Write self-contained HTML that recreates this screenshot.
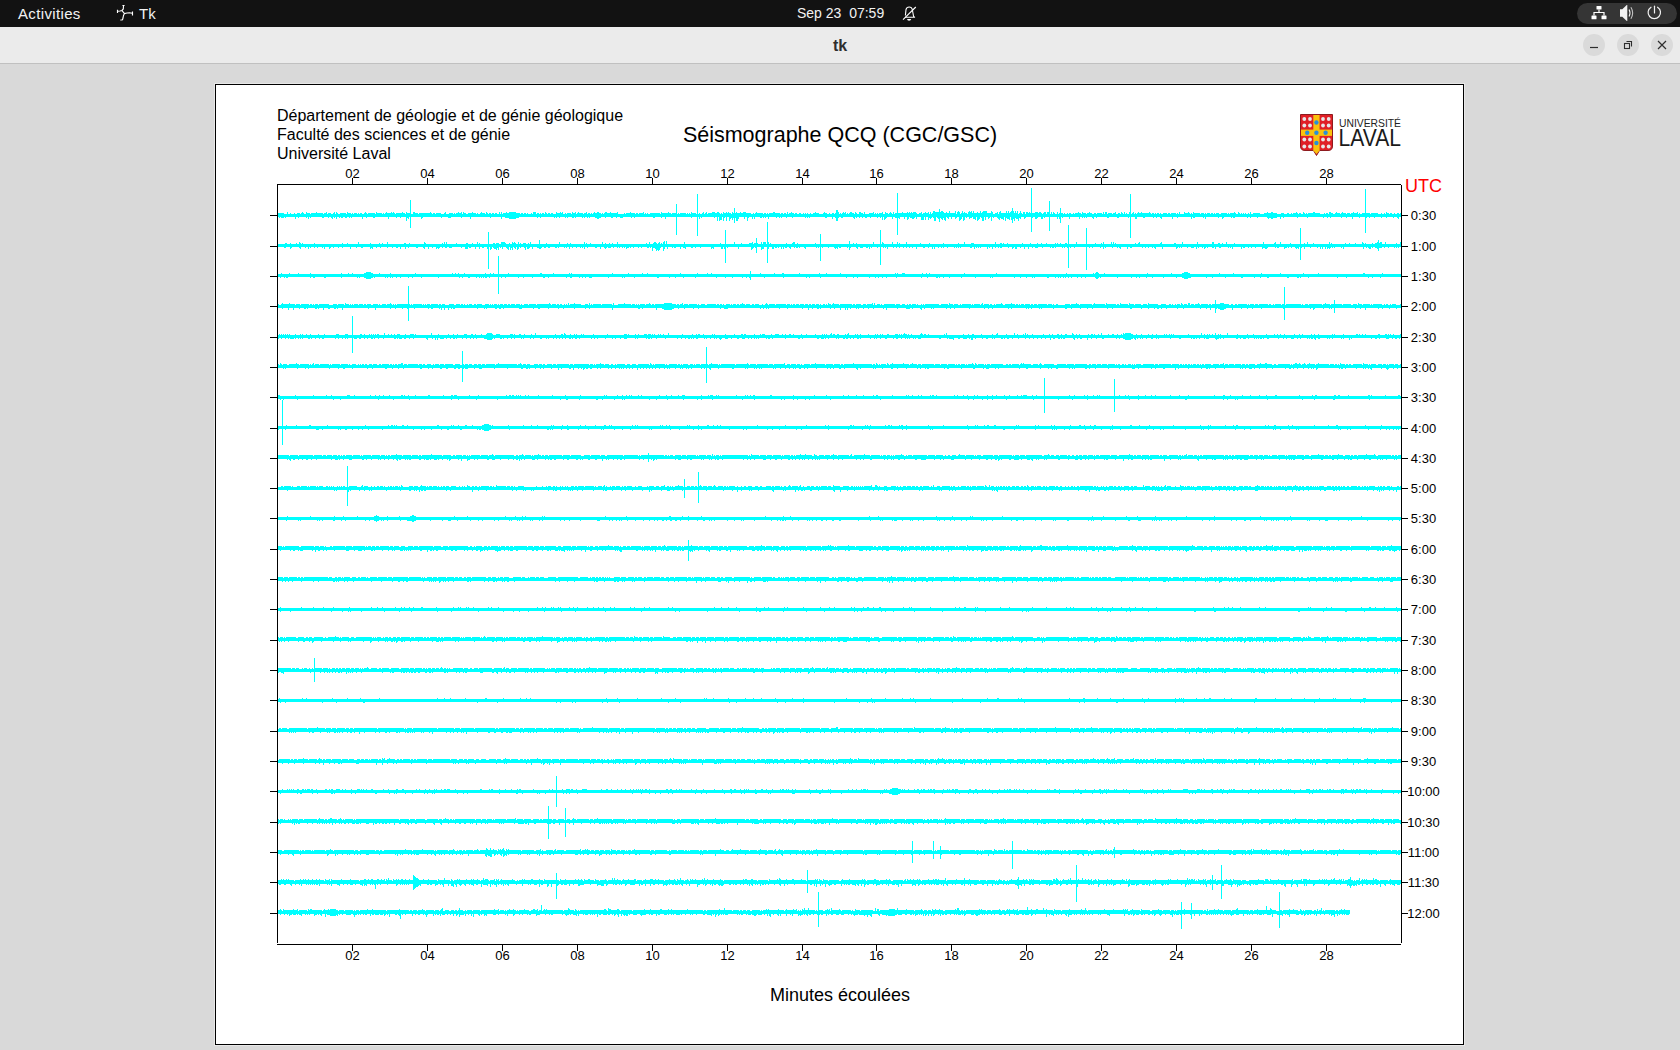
<!DOCTYPE html>
<html><head><meta charset="utf-8">
<style>
html,body{margin:0;padding:0;width:1680px;height:1050px;overflow:hidden;background:#d9d9d9;font-family:"Liberation Sans",sans-serif;}
#top{position:absolute;left:0;top:0;width:1680px;height:27px;background:#121212;color:#f2f2f2;}
#top .t{position:absolute;top:0;height:27px;line-height:27px;white-space:nowrap;}
#title{position:absolute;left:0;top:27px;width:1680px;height:36px;background:#ebebeb;border-bottom:1px solid #c0c0c0;}
#title .name{position:absolute;left:0;width:1680px;top:0;height:36px;line-height:37px;text-align:center;font-weight:bold;font-size:16px;color:#2e2e2e;}
.wb{position:absolute;top:7px;width:22px;height:22px;border-radius:50%;background:#dadada;}
#panel{position:absolute;left:214px;top:83px;width:1249px;height:961px;border:1px solid #e8e8e8;}
#canvas{position:absolute;left:0;top:0;width:1247px;height:959px;border:1px solid #000;background:#fff;}
svg text{font-family:"Liberation Sans",sans-serif;}
</style></head><body>
<div id="top">
  <div class="t" style="left:18px;font-size:15px;letter-spacing:0.35px;">Activities</div>
  <svg style="position:absolute;left:116px;top:4px" width="18" height="18" viewBox="0 0 18 18">
    <g fill="none" stroke="#fff" stroke-width="1.15" stroke-linecap="square" stroke-linejoin="miter">
      <path d="M7.5 1.5 L7.3 5 L6 6.5 L4 7 L1.5 7.3 M1.5 6.3 V8.3 M6 6.5 L8.5 9.5 L11 9 L13.5 8.8 L16.3 9.3 M16.5 8 V11 M8.5 9.5 L7.5 11.5 L7 14 L6.5 15.7 L5 16 M7 1.5 H8"/>
    </g>
  </svg>
  <div class="t" style="left:139px;font-size:15px;">Tk</div>
  <div class="t" style="left:797px;font-size:14px;">Sep 23&nbsp; 07:59</div>
  <svg style="position:absolute;left:901px;top:5px" width="17" height="17" viewBox="0 0 17 17">
    <g fill="none" stroke="#fff" stroke-width="1.1" stroke-linejoin="round">
      <path d="M4.4 10.5 L5 4.5 Q5.6 2 8.2 2 Q10.8 2 11.3 4.5 L12.6 11.5 L13.6 12.3 L4 12.3"/>
      <path d="M2 14.7 L14.8 2"/>
    </g>
    <path d="M6 14 H10.2 Q10 15.8 8.1 15.8 Q6.2 15.8 6 14 Z" fill="#fff"/>
  </svg>
  <div style="position:absolute;left:1577px;top:3px;width:100px;height:21px;border-radius:11px;background:#353535;"></div>
  <svg style="position:absolute;left:1590.7px;top:5px" width="17" height="16" viewBox="0 0 17 16">
    <g fill="#fff">
      <rect x="5.5" y="1" width="5" height="3.5" rx="0.6"/>
      <rect x="0.5" y="10.5" width="5" height="3.8" rx="0.6"/>
      <rect x="10.5" y="10.5" width="5" height="3.8" rx="0.6"/>
    </g>
    <g fill="none" stroke="#fff" stroke-width="1.2">
      <path d="M8 4.5 V7.5 M3 10.5 V7.5 H13 V10.5"/>
    </g>
  </svg>
  <svg style="position:absolute;left:1620px;top:5px" width="16" height="16" viewBox="0 0 16 16">
    <path d="M0 4.2 H2.3 L7.3 -0.5 V16.5 L2.3 11.8 H0 Z" fill="#f2f2f2"/>
    <g fill="none" stroke="#f2f2f2" stroke-width="1.1">
      <path d="M9.1 4.6 Q10.9 8 9.1 11.4"/>
      <path d="M10.9 2.3 Q14.4 8 10.9 13.7" stroke-opacity="0.75"/>
    </g>
  </svg>
  <svg style="position:absolute;left:1647px;top:5px" width="16" height="16" viewBox="0 0 16 16">
    <g fill="none" stroke="#f2f2f2" stroke-width="1.2" stroke-linecap="round">
      <path d="M4 2.2 A6.2 6.2 0 1 0 10.6 2.2"/>
      <path d="M7.5 1.2 V8"/>
    </g>
  </svg>
</div>
<div id="title">
  <div class="name">tk</div>
  <div class="wb" style="left:1583px;"></div>
  <div class="wb" style="left:1617px;"></div>
  <div class="wb" style="left:1651px;"></div>
  <svg style="position:absolute;left:1583px;top:7px" width="22" height="22"><path d="M7 13.5 H15" stroke="#2e2e2e" stroke-width="1.2"/></svg>
  <svg style="position:absolute;left:1617px;top:7px" width="22" height="22"><g fill="none" stroke="#2e2e2e" stroke-width="1.1"><rect x="7.5" y="9.5" width="5" height="5"/><path d="M9.5 7.5 H14.5 V12.5"/></g></svg>
  <svg style="position:absolute;left:1651px;top:7px" width="22" height="22"><path d="M7 7 L15 15 M15 7 L7 15" stroke="#2e2e2e" stroke-width="1.2"/></svg>
</div>
<div id="panel"><div id="canvas"></div></div>
<svg style="position:absolute;left:0;top:0" width="1680" height="1050" viewBox="0 0 1680 1050">
  <g font-size="16" fill="#000">
    <text x="277" y="121">Département de géologie et de génie géologique</text>
    <text x="277" y="140">Faculté des sciences et de génie</text>
    <text x="277" y="158.5">Université Laval</text>
  </g>
  <text x="840" y="141.5" font-size="21.5" text-anchor="middle" fill="#000">Séismographe QCQ (CGC/GSC)</text>
  <text x="1405" y="192" font-size="18" fill="#ff0000">UTC</text>
  <text x="840" y="1000.5" font-size="18" text-anchor="middle" fill="#000">Minutes écoulées</text>
  <g fill="#00ffff">
<path d="M277 214H1401V217H277zM277 212h1v2h-1zM278 213h6v1h-6zM287 212h1v2h-1zM290 213h1v1h-1zM294 213h1v1h-1zM297 213h3v1h-3zM301 213h1v1h-1zM302 212h1v2h-1zM303 213h1v1h-1zM306 212h1v2h-1zM307 213h3v1h-3zM311 213h5v1h-5zM316 212h1v2h-1zM317 213h6v1h-6zM324 213h2v1h-2zM326 212h1v2h-1zM328 213h3v1h-3zM333 213h1v1h-1zM334 212h1v2h-1zM336 212h1v2h-1zM337 213h1v1h-1zM340 213h6v1h-6zM347 212h1v2h-1zM348 213h3v1h-3zM352 213h1v1h-1zM354 213h3v1h-3zM358 213h1v1h-1zM360 213h2v1h-2zM364 213h1v1h-1zM365 212h1v2h-1zM366 213h1v1h-1zM368 213h7v1h-7zM376 212h1v2h-1zM377 213h5v1h-5zM383 213h1v1h-1zM385 213h1v1h-1zM386 212h1v2h-1zM387 213h4v1h-4zM391 212h1v2h-1zM392 213h1v1h-1zM393 212h1v2h-1zM394 213h1v1h-1zM396 213h6v1h-6zM402 212h1v2h-1zM403 213h2v1h-2zM406 212h1v2h-1zM407 213h4v1h-4zM413 212h2v2h-2zM415 213h3v1h-3zM419 213h11v1h-11zM430 212h1v2h-1zM431 213h1v1h-1zM433 213h2v1h-2zM436 213h5v1h-5zM444 213h1v1h-1zM445 212h1v2h-1zM449 213h4v1h-4zM454 213h1v1h-1zM456 213h2v1h-2zM458 212h1v2h-1zM459 213h2v1h-2zM461 212h1v2h-1zM463 212h1v2h-1zM464 213h2v1h-2zM468 213h4v1h-4zM472 212h1v2h-1zM473 213h3v1h-3zM477 213h1v1h-1zM480 213h1v1h-1zM481 212h1v2h-1zM482 213h3v1h-3zM486 212h1v2h-1zM487 213h1v1h-1zM489 213h2v1h-2zM492 213h2v1h-2zM495 213h2v1h-2zM499 212h1v2h-1zM501 212h1v2h-1zM503 213h3v1h-3zM506 212h1v2h-1zM507 213h2v1h-2zM509 212h7v2h-7zM516 213h4v1h-4zM521 213h2v1h-2zM524 213h2v1h-2zM527 213h1v1h-1zM531 213h1v1h-1zM533 212h3v2h-3zM537 213h2v1h-2zM540 213h1v1h-1zM542 213h2v1h-2zM545 212h1v2h-1zM546 213h1v1h-1zM548 213h2v1h-2zM551 213h2v1h-2zM556 212h1v2h-1zM557 213h3v1h-3zM560 212h1v2h-1zM561 213h1v1h-1zM562 212h1v2h-1zM565 213h1v1h-1zM567 213h4v1h-4zM572 212h1v2h-1zM573 213h2v1h-2zM575 212h1v2h-1zM577 213h1v1h-1zM578 212h1v2h-1zM579 213h4v1h-4zM584 213h2v1h-2zM586 212h1v2h-1zM588 213h2v1h-2zM591 213h1v1h-1zM593 213h1v1h-1zM594 212h1v2h-1zM595 213h2v1h-2zM597 212h2v2h-2zM599 213h2v1h-2zM602 213h1v1h-1zM604 213h1v1h-1zM605 212h2v2h-2zM607 213h3v1h-3zM610 212h1v2h-1zM611 213h6v1h-6zM617 212h1v2h-1zM624 213h1v1h-1zM626 213h4v1h-4zM630 212h1v2h-1zM631 213h4v1h-4zM636 213h2v1h-2zM639 213h4v1h-4zM643 212h1v2h-1zM645 213h1v1h-1zM647 213h1v1h-1zM650 213h10v1h-10zM661 212h1v2h-1zM662 213h6v1h-6zM668 212h1v2h-1zM669 213h2v1h-2zM672 213h4v1h-4zM678 213h1v1h-1zM680 213h6v1h-6zM687 213h1v1h-1zM689 213h1v1h-1zM691 212h1v2h-1zM692 213h4v1h-4zM699 213h1v1h-1zM702 213h1v1h-1zM703 212h1v2h-1zM705 213h1v1h-1zM706 212h1v2h-1zM708 213h4v1h-4zM712 212h3v2h-3zM715 213h2v1h-2zM717 212h2v2h-2zM719 213h1v1h-1zM721 213h1v1h-1zM723 212h1v2h-1zM724 213h2v1h-2zM726 212h1v2h-1zM727 213h1v1h-1zM728 212h1v2h-1zM729 213h2v1h-2zM732 212h1v2h-1zM733 213h1v1h-1zM735 213h1v1h-1zM736 212h1v2h-1zM737 213h3v1h-3zM740 212h1v2h-1zM741 213h2v1h-2zM743 212h3v2h-3zM746 213h5v1h-5zM753 213h1v1h-1zM755 213h1v1h-1zM756 212h1v2h-1zM757 213h6v1h-6zM764 213h2v1h-2zM767 213h1v1h-1zM769 213h4v1h-4zM773 212h2v2h-2zM775 213h5v1h-5zM781 213h2v1h-2zM784 213h2v1h-2zM787 212h1v2h-1zM789 213h2v1h-2zM791 212h1v2h-1zM792 213h2v1h-2zM795 213h2v1h-2zM799 213h2v1h-2zM803 213h1v1h-1zM805 213h1v1h-1zM807 213h1v1h-1zM810 213h1v1h-1zM813 213h2v1h-2zM815 212h1v2h-1zM816 213h3v1h-3zM823 213h1v1h-1zM824 212h1v2h-1zM825 213h2v1h-2zM829 213h1v1h-1zM832 213h2v1h-2zM835 213h1v1h-1zM836 210h2v4h-2zM838 212h1v2h-1zM840 213h1v1h-1zM842 213h1v1h-1zM843 212h1v2h-1zM844 213h1v1h-1zM845 212h1v2h-1zM847 213h1v1h-1zM849 213h1v1h-1zM850 212h2v2h-2zM852 213h2v1h-2zM855 212h1v2h-1zM856 213h1v1h-1zM859 212h2v2h-2zM861 213h2v1h-2zM864 212h1v2h-1zM869 213h4v1h-4zM873 212h1v2h-1zM875 213h1v1h-1zM877 213h1v1h-1zM879 213h3v1h-3zM882 212h1v2h-1zM885 212h1v2h-1zM886 213h2v1h-2zM889 213h1v1h-1zM890 212h1v2h-1zM891 213h1v1h-1zM893 212h1v2h-1zM895 213h2v1h-2zM898 213h4v1h-4zM902 212h1v2h-1zM903 213h4v1h-4zM907 212h1v2h-1zM908 213h1v1h-1zM909 212h1v2h-1zM910 213h1v1h-1zM911 212h1v2h-1zM912 213h1v1h-1zM913 212h3v2h-3zM916 213h1v1h-1zM919 213h2v1h-2zM921 212h1v2h-1zM923 213h2v1h-2zM925 212h1v2h-1zM926 213h2v1h-2zM928 212h1v2h-1zM930 212h1v2h-1zM932 213h1v1h-1zM933 211h2v3h-2zM935 212h4v2h-4zM939 213h1v1h-1zM940 212h1v2h-1zM941 211h2v3h-2zM943 212h1v2h-1zM944 213h2v1h-2zM946 212h1v2h-1zM947 213h2v1h-2zM949 211h1v3h-1zM950 213h5v1h-5zM955 211h1v3h-1zM957 212h1v2h-1zM958 211h1v3h-1zM959 212h1v2h-1zM961 213h1v1h-1zM962 211h1v3h-1zM963 213h1v1h-1zM964 212h1v2h-1zM965 213h2v1h-2zM968 212h1v2h-1zM969 211h1v3h-1zM970 212h1v2h-1zM971 211h1v3h-1zM972 213h1v1h-1zM973 211h1v3h-1zM974 213h3v1h-3zM977 212h1v2h-1zM978 213h2v1h-2zM980 211h1v3h-1zM981 213h1v1h-1zM982 212h1v2h-1zM983 211h4v3h-4zM987 213h4v1h-4zM991 211h1v3h-1zM992 212h1v2h-1zM995 213h2v1h-2zM997 212h1v2h-1zM999 212h1v2h-1zM1000 211h1v3h-1zM1001 213h5v1h-5zM1006 211h1v3h-1zM1007 213h1v1h-1zM1008 211h1v3h-1zM1009 213h1v1h-1zM1010 212h1v2h-1zM1011 211h1v3h-1zM1012 213h1v1h-1zM1013 211h1v3h-1zM1014 213h1v1h-1zM1015 211h1v3h-1zM1016 213h1v1h-1zM1017 211h1v3h-1zM1019 213h1v1h-1zM1020 211h1v3h-1zM1021 213h1v1h-1zM1023 212h2v2h-2zM1026 212h2v2h-2zM1028 213h1v1h-1zM1029 212h1v2h-1zM1030 213h1v1h-1zM1032 213h3v1h-3zM1035 212h3v2h-3zM1038 213h1v1h-1zM1039 212h2v2h-2zM1041 213h1v1h-1zM1043 213h1v1h-1zM1044 212h2v2h-2zM1047 212h2v2h-2zM1049 213h1v1h-1zM1051 212h1v2h-1zM1053 212h1v2h-1zM1054 213h1v1h-1zM1057 212h1v2h-1zM1059 213h1v1h-1zM1060 212h1v2h-1zM1061 213h2v1h-2zM1064 213h1v1h-1zM1067 213h1v1h-1zM1069 213h2v1h-2zM1073 213h1v1h-1zM1075 213h3v1h-3zM1078 212h1v2h-1zM1079 213h2v1h-2zM1082 212h1v2h-1zM1083 213h3v1h-3zM1087 213h2v1h-2zM1089 212h1v2h-1zM1090 213h2v1h-2zM1094 213h2v1h-2zM1097 213h5v1h-5zM1103 212h1v2h-1zM1105 212h2v2h-2zM1108 213h4v1h-4zM1113 213h2v1h-2zM1115 212h1v2h-1zM1118 213h2v1h-2zM1121 212h1v2h-1zM1122 213h1v1h-1zM1124 212h1v2h-1zM1126 213h1v1h-1zM1129 212h1v2h-1zM1132 213h1v1h-1zM1133 212h1v2h-1zM1135 213h1v1h-1zM1137 213h1v1h-1zM1138 212h1v2h-1zM1139 213h2v1h-2zM1141 212h1v2h-1zM1142 213h7v1h-7zM1149 212h1v2h-1zM1150 213h1v1h-1zM1152 213h2v1h-2zM1155 213h1v1h-1zM1157 213h2v1h-2zM1160 213h1v1h-1zM1163 213h4v1h-4zM1168 213h2v1h-2zM1171 213h5v1h-5zM1177 213h1v1h-1zM1179 212h1v2h-1zM1184 212h1v2h-1zM1185 213h3v1h-3zM1188 212h1v2h-1zM1189 213h1v1h-1zM1191 213h1v1h-1zM1193 212h1v2h-1zM1194 213h6v1h-6zM1201 213h3v1h-3zM1205 213h1v1h-1zM1207 213h3v1h-3zM1211 213h2v1h-2zM1214 213h1v1h-1zM1216 213h3v1h-3zM1221 213h6v1h-6zM1228 213h1v1h-1zM1230 213h4v1h-4zM1234 212h1v2h-1zM1235 213h1v1h-1zM1238 212h1v2h-1zM1239 213h1v1h-1zM1241 213h1v1h-1zM1243 213h1v1h-1zM1245 213h1v1h-1zM1248 213h1v1h-1zM1250 212h1v2h-1zM1253 213h7v1h-7zM1264 213h3v1h-3zM1267 212h1v2h-1zM1268 213h3v1h-3zM1271 212h2v2h-2zM1273 213h4v1h-4zM1281 213h3v1h-3zM1287 213h2v1h-2zM1291 213h1v1h-1zM1293 213h3v1h-3zM1296 212h1v2h-1zM1297 213h1v1h-1zM1299 213h2v1h-2zM1303 212h1v2h-1zM1304 213h1v1h-1zM1306 213h1v1h-1zM1308 213h5v1h-5zM1313 212h2v2h-2zM1315 213h5v1h-5zM1324 213h1v1h-1zM1326 213h2v1h-2zM1329 212h2v2h-2zM1331 213h2v1h-2zM1335 213h1v1h-1zM1336 212h1v2h-1zM1337 213h3v1h-3zM1341 213h1v1h-1zM1342 212h1v2h-1zM1343 213h3v1h-3zM1347 213h3v1h-3zM1351 213h2v1h-2zM1353 212h1v2h-1zM1354 213h3v1h-3zM1357 212h1v2h-1zM1359 213h1v1h-1zM1362 213h8v1h-8zM1371 213h7v1h-7zM1381 213h1v1h-1zM1384 213h1v1h-1zM1386 212h1v2h-1zM1387 213h2v1h-2zM1390 213h2v1h-2zM1394 213h1v1h-1zM1397 213h2v1h-2zM1400 213h1v1h-1zM279 217h1v1h-1zM281 217h3v1h-3zM285 217h1v1h-1zM295 217h1v2h-1zM298 217h1v1h-1zM306 217h1v1h-1zM308 217h1v2h-1zM310 217h1v1h-1zM322 217h2v1h-2zM328 217h1v1h-1zM331 217h1v1h-1zM332 217h1v2h-1zM334 217h1v1h-1zM336 217h1v2h-1zM339 217h1v1h-1zM341 217h2v1h-2zM345 217h2v1h-2zM349 217h1v1h-1zM351 217h1v1h-1zM362 217h1v2h-1zM366 217h1v1h-1zM373 217h2v1h-2zM388 217h1v2h-1zM396 217h1v1h-1zM400 217h1v1h-1zM406 217h2v1h-2zM408 217h1v2h-1zM421 217h1v2h-1zM422 217h1v1h-1zM441 217h1v1h-1zM448 217h3v1h-3zM461 217h1v1h-1zM470 217h1v2h-1zM490 217h1v1h-1zM501 217h1v2h-1zM505 217h4v1h-4zM509 217h7v2h-7zM516 217h3v1h-3zM537 217h1v1h-1zM540 217h1v1h-1zM554 217h1v1h-1zM556 217h1v1h-1zM559 217h1v1h-1zM565 217h1v1h-1zM567 217h1v1h-1zM572 217h2v1h-2zM575 217h1v1h-1zM582 217h1v1h-1zM584 217h1v1h-1zM587 217h1v1h-1zM589 217h1v1h-1zM595 217h2v1h-2zM597 217h2v2h-2zM599 217h2v1h-2zM605 217h1v1h-1zM611 217h2v1h-2zM616 217h1v1h-1zM620 217h3v1h-3zM631 217h1v1h-1zM634 217h1v1h-1zM653 217h2v1h-2zM661 217h1v1h-1zM665 217h1v2h-1zM691 217h1v1h-1zM697 217h1v1h-1zM699 217h1v2h-1zM701 217h1v1h-1zM714 217h1v1h-1zM717 217h1v4h-1zM719 217h1v4h-1zM720 217h2v3h-2zM723 217h1v4h-1zM724 217h1v1h-1zM726 217h1v4h-1zM729 217h1v4h-1zM730 217h1v2h-1zM731 217h1v1h-1zM732 217h1v3h-1zM733 217h1v1h-1zM735 217h1v1h-1zM736 217h2v4h-2zM738 217h1v2h-1zM744 217h1v2h-1zM747 217h1v4h-1zM748 217h1v1h-1zM752 217h1v2h-1zM754 217h1v2h-1zM760 217h2v1h-2zM763 217h1v1h-1zM765 217h1v1h-1zM768 217h1v2h-1zM776 217h1v1h-1zM779 217h1v1h-1zM781 217h1v1h-1zM786 217h1v1h-1zM792 217h1v1h-1zM805 217h1v1h-1zM807 217h1v1h-1zM809 217h1v1h-1zM825 217h2v1h-2zM832 217h1v2h-1zM835 217h1v1h-1zM836 217h2v4h-2zM838 217h1v1h-1zM841 217h2v1h-2zM853 217h1v1h-1zM854 217h1v2h-1zM856 217h1v1h-1zM859 217h1v1h-1zM862 217h1v1h-1zM865 217h2v1h-2zM870 217h1v1h-1zM877 217h1v1h-1zM880 217h1v1h-1zM882 217h1v3h-1zM884 217h1v3h-1zM885 217h1v2h-1zM886 217h1v1h-1zM892 217h1v2h-1zM895 217h2v1h-2zM897 217h1v2h-1zM898 217h1v1h-1zM899 217h1v2h-1zM904 217h1v2h-1zM907 217h1v3h-1zM908 217h1v2h-1zM910 217h2v1h-2zM912 217h2v2h-2zM914 217h1v1h-1zM916 217h1v2h-1zM921 217h3v3h-3zM925 217h1v3h-1zM928 217h1v3h-1zM929 217h1v1h-1zM930 217h1v2h-1zM931 217h1v1h-1zM933 217h1v1h-1zM934 217h2v4h-2zM937 217h1v1h-1zM938 217h1v2h-1zM939 217h1v3h-1zM940 217h1v1h-1zM941 217h1v2h-1zM942 217h1v3h-1zM943 217h1v1h-1zM944 217h1v3h-1zM945 217h1v4h-1zM947 217h1v1h-1zM948 217h1v2h-1zM951 217h1v2h-1zM955 217h1v2h-1zM956 217h1v1h-1zM959 217h1v4h-1zM960 217h1v3h-1zM961 217h1v2h-1zM963 217h1v4h-1zM964 217h1v3h-1zM966 217h1v1h-1zM969 217h1v2h-1zM970 217h2v1h-2zM973 217h2v2h-2zM975 217h1v3h-1zM977 217h1v4h-1zM978 217h1v3h-1zM979 217h1v2h-1zM981 217h1v1h-1zM982 217h2v4h-2zM985 217h1v3h-1zM988 217h1v2h-1zM989 217h1v1h-1zM991 217h1v4h-1zM993 217h1v1h-1zM997 217h1v1h-1zM998 217h1v2h-1zM999 217h1v3h-1zM1000 217h1v1h-1zM1001 217h2v2h-2zM1003 217h1v3h-1zM1005 217h1v4h-1zM1006 217h1v1h-1zM1007 217h2v2h-2zM1009 217h1v3h-1zM1011 217h2v3h-2zM1013 217h1v2h-1zM1014 217h1v4h-1zM1015 217h1v1h-1zM1016 217h2v2h-2zM1018 217h1v4h-1zM1019 217h1v1h-1zM1020 217h1v2h-1zM1024 217h1v2h-1zM1025 217h1v1h-1zM1032 217h1v1h-1zM1035 217h2v2h-2zM1037 217h1v1h-1zM1041 217h2v2h-2zM1044 217h1v1h-1zM1057 217h1v2h-1zM1059 217h2v2h-2zM1062 217h1v1h-1zM1069 217h1v2h-1zM1079 217h1v2h-1zM1082 217h1v1h-1zM1084 217h1v1h-1zM1086 217h1v1h-1zM1092 217h1v1h-1zM1093 217h1v2h-1zM1096 217h1v1h-1zM1107 217h2v1h-2zM1117 217h2v1h-2zM1128 217h1v1h-1zM1135 217h2v2h-2zM1143 217h2v1h-2zM1153 217h1v1h-1zM1156 217h1v1h-1zM1160 217h1v1h-1zM1161 217h1v2h-1zM1172 217h1v2h-1zM1177 217h1v1h-1zM1191 217h1v2h-1zM1193 217h2v1h-2zM1203 217h1v1h-1zM1205 217h1v2h-1zM1218 217h1v1h-1zM1222 217h1v2h-1zM1223 217h1v1h-1zM1231 217h1v1h-1zM1233 217h2v1h-2zM1247 217h1v1h-1zM1250 217h1v1h-1zM1257 217h1v1h-1zM1267 217h1v1h-1zM1268 217h1v2h-1zM1269 217h2v1h-2zM1271 217h2v2h-2zM1273 217h4v1h-4zM1280 217h1v2h-1zM1283 217h1v1h-1zM1297 217h1v1h-1zM1307 217h1v1h-1zM1323 217h1v1h-1zM1327 217h1v1h-1zM1330 217h1v1h-1zM1341 217h1v1h-1zM1346 217h1v1h-1zM1352 217h1v2h-1zM1359 217h1v1h-1zM1366 217h1v1h-1zM1369 217h1v1h-1zM1374 217h1v1h-1zM1381 217h1v1h-1zM1386 217h1v1h-1zM1393 217h1v1h-1zM1397 217h1v1h-1zM1398 217h1v2h-1zM410 200h1V228h-1zM406 215h1V221h-1zM676 204h1V235h-1zM697 194h1V236h-1zM734 208h1V223h-1zM897 193h1V235h-1zM939 209h1V222h-1zM1012 208h1V223h-1zM1031 188h1V232h-1zM1049 201h1V231h-1zM1060 208h1V223h-1zM1130 194h1V238h-1zM1365 189h1V233h-1z"/>
<path d="M277 244H1401V247H277zM285 243h2v1h-2zM290 243h1v1h-1zM296 243h1v1h-1zM299 242h1v2h-1zM300 243h1v1h-1zM302 243h1v1h-1zM314 243h1v1h-1zM342 243h1v1h-1zM347 243h1v1h-1zM358 242h1v2h-1zM370 243h1v1h-1zM379 243h1v1h-1zM382 243h1v1h-1zM387 242h1v2h-1zM404 243h2v1h-2zM409 243h1v1h-1zM424 242h1v2h-1zM425 243h1v1h-1zM442 243h1v1h-1zM444 242h1v2h-1zM446 242h1v2h-1zM456 243h1v1h-1zM466 243h2v1h-2zM472 243h1v1h-1zM477 242h1v2h-1zM479 243h1v1h-1zM488 242h1v2h-1zM493 243h2v1h-2zM496 243h3v1h-3zM501 242h4v2h-4zM505 243h1v1h-1zM509 243h1v1h-1zM512 242h1v2h-1zM513 243h1v1h-1zM514 242h1v2h-1zM515 243h1v1h-1zM518 242h1v2h-1zM520 243h1v1h-1zM523 243h3v1h-3zM528 243h1v1h-1zM530 242h1v2h-1zM546 243h1v1h-1zM559 242h1v2h-1zM567 243h1v1h-1zM570 243h1v1h-1zM584 242h1v2h-1zM586 243h1v1h-1zM590 243h1v1h-1zM602 242h1v2h-1zM605 243h1v1h-1zM609 243h1v1h-1zM612 243h1v1h-1zM617 242h1v2h-1zM646 243h1v1h-1zM649 242h1v2h-1zM653 243h1v1h-1zM654 242h2v2h-2zM656 243h1v1h-1zM658 243h1v1h-1zM659 242h1v2h-1zM661 243h1v1h-1zM663 242h1v2h-1zM664 243h1v1h-1zM666 241h1v3h-1zM684 242h1v2h-1zM720 243h1v1h-1zM725 243h1v1h-1zM734 242h1v2h-1zM741 243h1v1h-1zM749 243h3v1h-3zM752 242h1v2h-1zM754 243h2v1h-2zM756 242h1v2h-1zM757 243h1v1h-1zM761 242h1v2h-1zM763 242h3v2h-3zM768 242h1v2h-1zM770 243h1v1h-1zM786 243h1v1h-1zM792 243h1v1h-1zM793 242h2v2h-2zM797 243h1v1h-1zM815 243h1v1h-1zM849 243h1v1h-1zM853 243h1v1h-1zM856 243h1v1h-1zM873 242h1v2h-1zM882 242h1v2h-1zM883 243h1v1h-1zM892 242h1v2h-1zM897 242h1v2h-1zM899 243h1v1h-1zM906 242h1v2h-1zM920 243h1v1h-1zM929 243h1v1h-1zM943 243h1v1h-1zM958 243h1v1h-1zM964 242h1v2h-1zM971 243h3v1h-3zM995 242h1v2h-1zM1000 243h2v1h-2zM1003 243h1v1h-1zM1007 243h1v1h-1zM1022 243h1v1h-1zM1030 243h1v1h-1zM1037 243h1v1h-1zM1041 243h1v1h-1zM1046 243h1v1h-1zM1055 243h1v1h-1zM1057 243h1v1h-1zM1060 243h1v1h-1zM1065 243h2v1h-2zM1076 242h1v2h-1zM1095 243h1v1h-1zM1101 243h1v1h-1zM1111 242h1v2h-1zM1113 242h1v2h-1zM1115 243h1v1h-1zM1135 243h1v1h-1zM1138 243h1v1h-1zM1139 242h1v2h-1zM1160 243h1v1h-1zM1161 242h1v2h-1zM1174 243h2v1h-2zM1182 242h1v2h-1zM1197 242h1v2h-1zM1212 242h2v2h-2zM1218 243h2v1h-2zM1222 243h1v1h-1zM1226 242h1v2h-1zM1234 243h1v1h-1zM1263 242h1v2h-1zM1274 243h1v1h-1zM1275 242h1v2h-1zM1280 242h1v2h-1zM1290 243h1v1h-1zM1304 243h1v1h-1zM1307 242h1v2h-1zM1313 243h1v1h-1zM1329 242h1v2h-1zM1331 243h1v1h-1zM1345 243h1v1h-1zM1349 243h1v1h-1zM1355 243h1v1h-1zM1362 242h1v2h-1zM1363 243h1v1h-1zM1365 243h1v1h-1zM1372 243h1v1h-1zM1375 243h2v1h-2zM1377 242h2v2h-2zM1379 243h1v1h-1zM1380 242h2v2h-2zM1385 242h1v2h-1zM1396 243h1v1h-1zM1400 242h1v2h-1zM277 247h1v1h-1zM284 247h2v1h-2zM290 247h1v2h-1zM291 247h1v1h-1zM299 247h1v1h-1zM300 247h1v2h-1zM305 247h1v1h-1zM308 247h1v2h-1zM310 247h1v1h-1zM314 247h1v1h-1zM317 247h1v1h-1zM322 247h1v1h-1zM324 247h1v2h-1zM329 247h1v2h-1zM330 247h1v1h-1zM333 247h1v1h-1zM338 247h1v1h-1zM342 247h1v1h-1zM350 247h1v2h-1zM356 247h1v1h-1zM361 247h2v1h-2zM370 247h1v2h-1zM371 247h1v1h-1zM372 247h1v2h-1zM376 247h1v1h-1zM380 247h1v1h-1zM387 247h1v1h-1zM392 247h1v1h-1zM396 247h2v1h-2zM400 247h1v2h-1zM405 247h1v2h-1zM408 247h1v1h-1zM416 247h2v1h-2zM423 247h1v1h-1zM424 247h1v2h-1zM428 247h1v2h-1zM432 247h1v1h-1zM436 247h1v2h-1zM437 247h1v1h-1zM438 247h1v2h-1zM439 247h1v1h-1zM442 247h1v1h-1zM445 247h2v1h-2zM449 247h3v1h-3zM461 247h1v1h-1zM465 247h3v2h-3zM469 247h2v1h-2zM475 247h1v2h-1zM479 247h1v2h-1zM482 247h2v1h-2zM487 247h1v2h-1zM488 247h1v3h-1zM490 247h1v3h-1zM491 247h1v2h-1zM493 247h1v1h-1zM494 247h2v2h-2zM496 247h1v3h-1zM497 247h1v1h-1zM498 247h1v3h-1zM500 247h1v1h-1zM502 247h1v2h-1zM506 247h1v1h-1zM507 247h1v2h-1zM508 247h1v3h-1zM510 247h1v3h-1zM511 247h1v1h-1zM512 247h1v3h-1zM514 247h1v1h-1zM515 247h1v2h-1zM517 247h1v3h-1zM518 247h1v2h-1zM520 247h1v1h-1zM524 247h1v1h-1zM525 247h1v3h-1zM527 247h2v2h-2zM529 247h1v1h-1zM532 247h1v2h-1zM537 247h2v1h-2zM540 247h1v2h-1zM541 247h1v1h-1zM544 247h2v1h-2zM548 247h2v1h-2zM555 247h2v1h-2zM558 247h1v1h-1zM564 247h1v1h-1zM566 247h1v1h-1zM569 247h1v2h-1zM572 247h1v1h-1zM576 247h1v1h-1zM580 247h1v1h-1zM582 247h1v1h-1zM584 247h1v2h-1zM587 247h1v1h-1zM595 247h2v1h-2zM600 247h1v2h-1zM604 247h1v1h-1zM605 247h1v2h-1zM606 247h1v1h-1zM608 247h3v1h-3zM613 247h1v1h-1zM617 247h1v1h-1zM619 247h1v1h-1zM622 247h1v1h-1zM624 247h1v1h-1zM626 247h1v2h-1zM627 247h2v1h-2zM630 247h1v1h-1zM633 247h1v1h-1zM638 247h1v1h-1zM641 247h1v1h-1zM647 247h2v1h-2zM650 247h1v1h-1zM652 247h1v4h-1zM653 247h2v1h-2zM655 247h1v2h-1zM656 247h1v4h-1zM657 247h1v3h-1zM658 247h1v4h-1zM659 247h1v3h-1zM660 247h1v1h-1zM663 247h1v4h-1zM664 247h1v2h-1zM667 247h1v2h-1zM672 247h1v1h-1zM674 247h2v1h-2zM680 247h1v2h-1zM683 247h2v1h-2zM685 247h1v2h-1zM691 247h2v1h-2zM695 247h1v1h-1zM700 247h1v1h-1zM711 247h1v2h-1zM712 247h1v1h-1zM713 247h1v2h-1zM721 247h2v2h-2zM724 247h1v2h-1zM727 247h1v1h-1zM738 247h1v2h-1zM751 247h1v3h-1zM752 247h1v2h-1zM753 247h1v1h-1zM755 247h1v1h-1zM761 247h1v3h-1zM762 247h2v2h-2zM767 247h1v1h-1zM768 247h1v2h-1zM772 247h2v2h-2zM775 247h2v1h-2zM778 247h1v1h-1zM781 247h1v2h-1zM783 247h1v2h-1zM785 247h2v1h-2zM789 247h1v1h-1zM790 247h1v2h-1zM794 247h1v1h-1zM796 247h2v1h-2zM799 247h1v1h-1zM804 247h1v1h-1zM805 247h1v2h-1zM816 247h1v1h-1zM818 247h1v1h-1zM822 247h1v1h-1zM828 247h1v1h-1zM834 247h1v1h-1zM835 247h1v2h-1zM836 247h1v1h-1zM837 247h1v2h-1zM839 247h2v1h-2zM847 247h1v1h-1zM850 247h1v1h-1zM856 247h1v1h-1zM857 247h1v2h-1zM860 247h3v1h-3zM866 247h2v1h-2zM869 247h1v2h-1zM871 247h1v1h-1zM877 247h1v1h-1zM883 247h1v1h-1zM885 247h1v1h-1zM887 247h1v2h-1zM893 247h1v1h-1zM896 247h1v1h-1zM899 247h1v1h-1zM903 247h1v1h-1zM906 247h1v1h-1zM909 247h1v1h-1zM912 247h1v1h-1zM916 247h1v2h-1zM923 247h2v1h-2zM928 247h1v1h-1zM932 247h1v2h-1zM934 247h1v2h-1zM938 247h1v1h-1zM941 247h1v1h-1zM943 247h1v1h-1zM947 247h1v1h-1zM954 247h1v1h-1zM956 247h1v1h-1zM958 247h1v1h-1zM960 247h1v1h-1zM970 247h2v1h-2zM974 247h1v2h-1zM976 247h1v1h-1zM978 247h1v1h-1zM980 247h1v1h-1zM987 247h1v2h-1zM989 247h1v1h-1zM992 247h1v2h-1zM995 247h1v1h-1zM998 247h1v1h-1zM1000 247h2v1h-2zM1008 247h1v1h-1zM1012 247h1v2h-1zM1013 247h1v1h-1zM1015 247h2v2h-2zM1020 247h1v1h-1zM1024 247h1v2h-1zM1028 247h1v2h-1zM1032 247h1v1h-1zM1035 247h3v1h-3zM1042 247h1v1h-1zM1050 247h1v1h-1zM1052 247h2v1h-2zM1055 247h1v1h-1zM1062 247h1v1h-1zM1064 247h1v1h-1zM1067 247h1v1h-1zM1070 247h1v1h-1zM1074 247h1v1h-1zM1086 247h1v1h-1zM1089 247h1v1h-1zM1092 247h1v1h-1zM1100 247h1v1h-1zM1105 247h1v1h-1zM1112 247h1v1h-1zM1117 247h1v1h-1zM1119 247h1v1h-1zM1120 247h1v2h-1zM1127 247h1v2h-1zM1130 247h2v1h-2zM1142 247h1v1h-1zM1145 247h1v1h-1zM1148 247h1v1h-1zM1152 247h1v1h-1zM1154 247h1v1h-1zM1155 247h1v2h-1zM1162 247h1v2h-1zM1176 247h1v2h-1zM1177 247h1v1h-1zM1179 247h1v1h-1zM1181 247h1v1h-1zM1187 247h1v1h-1zM1191 247h3v1h-3zM1196 247h1v2h-1zM1198 247h1v1h-1zM1202 247h1v1h-1zM1204 247h1v2h-1zM1205 247h1v1h-1zM1207 247h1v1h-1zM1212 247h2v1h-2zM1215 247h1v2h-1zM1219 247h2v1h-2zM1228 247h1v1h-1zM1230 247h1v1h-1zM1232 247h1v2h-1zM1241 247h1v2h-1zM1243 247h2v1h-2zM1248 247h1v1h-1zM1251 247h1v1h-1zM1255 247h1v1h-1zM1262 247h1v2h-1zM1263 247h2v1h-2zM1265 247h2v2h-2zM1267 247h1v1h-1zM1275 247h1v1h-1zM1277 247h2v1h-2zM1284 247h1v2h-1zM1285 247h2v1h-2zM1288 247h1v1h-1zM1291 247h1v1h-1zM1295 247h1v1h-1zM1296 247h1v2h-1zM1297 247h1v1h-1zM1298 247h1v2h-1zM1301 247h1v1h-1zM1304 247h1v2h-1zM1310 247h1v1h-1zM1317 247h1v1h-1zM1320 247h1v2h-1zM1322 247h1v2h-1zM1325 247h1v2h-1zM1327 247h1v2h-1zM1328 247h1v1h-1zM1329 247h1v2h-1zM1330 247h1v1h-1zM1332 247h1v1h-1zM1334 247h1v1h-1zM1341 247h1v1h-1zM1343 247h1v2h-1zM1363 247h1v2h-1zM1366 247h1v1h-1zM1368 247h1v1h-1zM1369 247h2v2h-2zM1372 247h1v1h-1zM1375 247h2v1h-2zM1377 247h2v2h-2zM1379 247h3v1h-3zM1384 247h1v1h-1zM1388 247h1v1h-1zM1394 247h1v1h-1zM1396 247h1v1h-1zM1398 247h1v1h-1zM488 232h1V269h-1zM539 240h1V249h-1zM664 241h1V249h-1zM725 230h1V263h-1zM756 238h1V253h-1zM767 222h1V263h-1zM820 234h1V261h-1zM849 241h1V250h-1zM880 230h1V265h-1zM1068 225h1V268h-1zM1086 228h1V270h-1zM1103 242h1V249h-1zM1300 228h1V260h-1zM1378 240h1V251h-1z"/>
<path d="M277 274H1401V277H277zM281 273h1v1h-1zM289 273h1v1h-1zM298 273h1v1h-1zM310 273h1v1h-1zM341 273h1v1h-1zM348 273h1v1h-1zM352 273h1v1h-1zM364 273h2v1h-2zM366 272h5v2h-5zM371 273h2v1h-2zM379 273h1v1h-1zM390 273h1v1h-1zM415 273h1v1h-1zM452 273h1v1h-1zM455 273h1v1h-1zM458 273h1v1h-1zM464 273h1v1h-1zM485 273h1v1h-1zM490 273h1v1h-1zM493 273h1v1h-1zM508 273h1v1h-1zM540 273h2v1h-2zM553 273h1v1h-1zM569 273h1v1h-1zM571 273h1v1h-1zM612 273h1v1h-1zM628 273h1v1h-1zM642 273h1v1h-1zM647 273h1v1h-1zM680 273h1v1h-1zM697 273h1v1h-1zM707 273h1v1h-1zM711 273h1v1h-1zM760 273h1v1h-1zM774 273h1v1h-1zM782 273h2v1h-2zM799 273h1v1h-1zM819 273h1v1h-1zM826 273h1v1h-1zM840 273h1v1h-1zM895 273h1v1h-1zM897 273h1v1h-1zM902 273h3v1h-3zM922 273h1v1h-1zM926 273h1v1h-1zM929 273h1v1h-1zM964 273h1v1h-1zM996 273h1v1h-1zM1066 273h1v1h-1zM1093 273h1v1h-1zM1095 273h1v1h-1zM1096 272h2v2h-2zM1098 273h1v1h-1zM1104 273h1v1h-1zM1147 273h1v1h-1zM1171 273h1v1h-1zM1182 273h2v1h-2zM1184 272h4v2h-4zM1188 273h2v1h-2zM1219 273h1v1h-1zM1233 273h1v1h-1zM1261 273h1v1h-1zM1280 273h1v1h-1zM1303 273h1v1h-1zM1318 273h1v1h-1zM1363 273h2v1h-2zM1382 273h1v1h-1zM280 277h1v1h-1zM284 277h1v1h-1zM286 277h2v1h-2zM310 277h1v1h-1zM313 277h2v1h-2zM324 277h2v1h-2zM341 277h1v1h-1zM357 277h1v1h-1zM359 277h1v1h-1zM364 277h2v1h-2zM366 277h5v2h-5zM371 277h2v1h-2zM374 277h1v1h-1zM385 277h1v1h-1zM387 277h1v1h-1zM390 277h1v1h-1zM392 277h1v1h-1zM396 277h1v1h-1zM400 277h1v1h-1zM408 277h1v1h-1zM412 277h1v1h-1zM421 277h1v1h-1zM438 277h1v1h-1zM459 277h1v1h-1zM462 277h1v1h-1zM468 277h2v1h-2zM476 277h1v1h-1zM479 277h1v1h-1zM481 277h1v1h-1zM483 277h1v1h-1zM485 277h2v1h-2zM489 277h1v1h-1zM501 277h1v1h-1zM505 277h1v1h-1zM518 277h1v1h-1zM523 277h1v1h-1zM532 277h1v1h-1zM543 277h2v1h-2zM548 277h1v1h-1zM566 277h1v1h-1zM570 277h2v1h-2zM579 277h1v1h-1zM582 277h1v1h-1zM585 277h1v1h-1zM589 277h3v1h-3zM608 277h1v1h-1zM622 277h1v1h-1zM624 277h1v1h-1zM634 277h1v1h-1zM657 277h2v1h-2zM669 277h1v1h-1zM675 277h1v1h-1zM683 277h1v1h-1zM695 277h1v1h-1zM716 277h1v1h-1zM725 277h1v1h-1zM732 277h1v1h-1zM742 277h1v1h-1zM746 277h1v1h-1zM749 277h2v1h-2zM764 277h1v1h-1zM783 277h1v1h-1zM806 277h1v1h-1zM809 277h1v1h-1zM820 277h1v1h-1zM846 277h1v1h-1zM853 277h1v1h-1zM857 277h1v1h-1zM869 277h1v1h-1zM875 277h1v1h-1zM878 277h1v1h-1zM882 277h1v1h-1zM886 277h1v1h-1zM896 277h1v1h-1zM921 277h1v1h-1zM927 277h1v1h-1zM936 277h2v1h-2zM939 277h1v1h-1zM943 277h1v1h-1zM949 277h1v1h-1zM961 277h1v1h-1zM975 277h1v1h-1zM990 277h1v1h-1zM992 277h1v1h-1zM1014 277h1v1h-1zM1020 277h1v1h-1zM1026 277h1v1h-1zM1032 277h1v1h-1zM1034 277h1v1h-1zM1047 277h2v1h-2zM1055 277h1v1h-1zM1058 277h1v1h-1zM1060 277h1v1h-1zM1063 277h1v1h-1zM1065 277h1v1h-1zM1068 277h1v1h-1zM1071 277h1v1h-1zM1077 277h1v1h-1zM1081 277h1v1h-1zM1085 277h1v1h-1zM1095 277h1v1h-1zM1096 277h2v2h-2zM1098 277h1v1h-1zM1100 277h1v1h-1zM1117 277h1v1h-1zM1131 277h1v1h-1zM1136 277h1v1h-1zM1139 277h1v1h-1zM1146 277h1v1h-1zM1152 277h1v1h-1zM1163 277h1v1h-1zM1176 277h1v1h-1zM1182 277h2v1h-2zM1184 277h4v2h-4zM1188 277h3v1h-3zM1206 277h1v1h-1zM1212 277h1v1h-1zM1225 277h1v1h-1zM1241 277h2v1h-2zM1254 277h1v1h-1zM1260 277h1v1h-1zM1267 277h2v1h-2zM1287 277h2v1h-2zM1297 277h2v1h-2zM1300 277h1v1h-1zM1308 277h1v1h-1zM1337 277h1v1h-1zM1346 277h1v1h-1zM1368 277h1v1h-1zM1372 277h1v1h-1zM1380 277h1v1h-1zM498 256h1V294h-1zM750 271h1V280h-1z"/>
<path d="M277 305H1401V308H277zM277 304h2v1h-2zM281 304h1v1h-1zM282 303h1v2h-1zM283 304h6v1h-6zM289 303h1v2h-1zM290 304h5v1h-5zM296 304h4v1h-4zM301 304h8v1h-8zM310 304h2v1h-2zM313 304h1v1h-1zM315 304h3v1h-3zM319 304h10v1h-10zM333 304h4v1h-4zM338 304h6v1h-6zM345 303h1v2h-1zM346 304h3v1h-3zM350 304h1v1h-1zM352 304h1v1h-1zM354 304h4v1h-4zM359 304h4v1h-4zM364 304h2v1h-2zM367 304h4v1h-4zM373 304h5v1h-5zM379 304h1v1h-1zM382 304h4v1h-4zM387 304h3v1h-3zM390 303h1v2h-1zM391 304h1v1h-1zM393 304h1v1h-1zM395 304h1v1h-1zM397 304h11v1h-11zM409 304h1v1h-1zM411 304h1v1h-1zM413 304h9v1h-9zM423 304h1v1h-1zM425 304h1v1h-1zM427 304h3v1h-3zM431 304h7v1h-7zM439 304h2v1h-2zM442 304h3v1h-3zM449 304h5v1h-5zM456 304h4v1h-4zM461 304h2v1h-2zM464 304h1v1h-1zM467 304h1v1h-1zM469 304h3v1h-3zM474 304h2v1h-2zM477 304h5v1h-5zM485 304h4v1h-4zM490 304h1v1h-1zM492 304h1v1h-1zM494 304h3v1h-3zM498 304h1v1h-1zM500 304h3v1h-3zM504 304h3v1h-3zM508 304h2v1h-2zM511 304h4v1h-4zM516 304h4v1h-4zM521 304h1v1h-1zM524 304h4v1h-4zM529 304h7v1h-7zM537 304h12v1h-12zM549 303h1v2h-1zM550 304h1v1h-1zM552 304h4v1h-4zM557 304h2v1h-2zM560 304h2v1h-2zM564 304h1v1h-1zM566 304h1v1h-1zM568 303h1v2h-1zM570 304h4v1h-4zM574 303h1v2h-1zM575 304h6v1h-6zM585 304h3v1h-3zM589 303h1v2h-1zM591 304h1v1h-1zM593 304h8v1h-8zM602 304h10v1h-10zM613 303h1v2h-1zM618 304h6v1h-6zM624 303h1v2h-1zM625 304h6v1h-6zM632 304h3v1h-3zM636 304h1v1h-1zM638 304h1v1h-1zM640 304h5v1h-5zM646 304h3v1h-3zM649 303h1v2h-1zM650 304h1v1h-1zM652 304h2v1h-2zM655 304h9v1h-9zM664 303h8v2h-8zM672 304h4v1h-4zM677 304h2v1h-2zM680 304h2v1h-2zM682 303h1v2h-1zM684 304h4v1h-4zM689 304h8v1h-8zM698 304h1v1h-1zM701 304h4v1h-4zM707 304h9v1h-9zM717 304h2v1h-2zM720 304h2v1h-2zM723 304h1v1h-1zM726 304h4v1h-4zM731 304h1v1h-1zM733 304h3v1h-3zM737 304h2v1h-2zM740 304h2v1h-2zM742 303h1v2h-1zM743 304h2v1h-2zM746 304h4v1h-4zM752 304h2v1h-2zM755 304h4v1h-4zM762 304h1v1h-1zM765 304h1v1h-1zM766 303h1v2h-1zM767 304h1v1h-1zM769 304h6v1h-6zM776 304h10v1h-10zM787 304h3v1h-3zM791 304h1v1h-1zM793 304h2v1h-2zM796 304h3v1h-3zM800 304h4v1h-4zM805 304h3v1h-3zM809 304h2v1h-2zM812 304h3v1h-3zM816 304h3v1h-3zM820 304h1v1h-1zM823 304h2v1h-2zM826 304h1v1h-1zM828 303h1v2h-1zM829 304h2v1h-2zM832 304h1v1h-1zM833 303h1v2h-1zM834 304h5v1h-5zM840 304h12v1h-12zM853 304h2v1h-2zM856 304h5v1h-5zM863 304h3v1h-3zM867 304h5v1h-5zM872 303h1v2h-1zM874 303h1v2h-1zM877 304h3v1h-3zM881 304h1v1h-1zM884 304h11v1h-11zM896 304h4v1h-4zM902 304h3v1h-3zM907 304h1v1h-1zM909 304h2v1h-2zM912 304h4v1h-4zM917 304h1v1h-1zM921 304h1v1h-1zM923 304h1v1h-1zM925 304h14v1h-14zM941 304h7v1h-7zM949 303h1v2h-1zM950 304h3v1h-3zM954 304h4v1h-4zM960 304h1v1h-1zM962 304h9v1h-9zM972 304h1v1h-1zM974 304h6v1h-6zM981 304h1v1h-1zM982 303h1v2h-1zM984 304h5v1h-5zM990 304h2v1h-2zM994 304h1v1h-1zM996 304h5v1h-5zM1001 303h1v2h-1zM1002 304h1v1h-1zM1005 304h6v1h-6zM1011 303h1v2h-1zM1012 304h3v1h-3zM1016 304h2v1h-2zM1019 304h1v1h-1zM1021 304h3v1h-3zM1025 304h5v1h-5zM1031 304h2v1h-2zM1034 304h3v1h-3zM1038 304h9v1h-9zM1048 304h4v1h-4zM1053 304h1v1h-1zM1056 304h2v1h-2zM1065 304h5v1h-5zM1071 304h5v1h-5zM1076 303h1v2h-1zM1077 304h2v1h-2zM1080 304h12v1h-12zM1093 304h1v1h-1zM1094 303h1v2h-1zM1095 304h10v1h-10zM1106 303h1v2h-1zM1107 304h9v1h-9zM1117 304h2v1h-2zM1120 303h1v2h-1zM1121 304h7v1h-7zM1129 303h1v2h-1zM1130 304h4v1h-4zM1135 304h6v1h-6zM1143 304h4v1h-4zM1148 303h1v2h-1zM1149 304h9v1h-9zM1161 304h5v1h-5zM1169 304h2v1h-2zM1172 304h1v1h-1zM1175 304h1v1h-1zM1177 304h3v1h-3zM1181 303h1v2h-1zM1182 304h1v1h-1zM1184 304h3v1h-3zM1188 303h2v2h-2zM1191 304h3v1h-3zM1195 304h3v1h-3zM1198 303h1v2h-1zM1199 304h1v1h-1zM1201 304h7v1h-7zM1209 304h2v1h-2zM1212 304h8v1h-8zM1220 303h4v2h-4zM1224 304h5v1h-5zM1231 304h2v1h-2zM1235 304h2v1h-2zM1238 304h9v1h-9zM1248 304h1v1h-1zM1250 304h4v1h-4zM1255 304h3v1h-3zM1259 304h9v1h-9zM1269 304h2v1h-2zM1273 304h1v1h-1zM1275 304h6v1h-6zM1282 304h3v1h-3zM1286 304h15v1h-15zM1302 304h1v1h-1zM1305 304h3v1h-3zM1309 304h13v1h-13zM1323 304h2v1h-2zM1325 303h1v2h-1zM1326 304h4v1h-4zM1331 304h11v1h-11zM1343 304h8v1h-8zM1353 304h4v1h-4zM1358 303h1v2h-1zM1359 304h3v1h-3zM1363 304h7v1h-7zM1371 304h1v1h-1zM1373 304h9v1h-9zM1384 304h1v1h-1zM1386 304h2v1h-2zM1390 304h1v1h-1zM1392 304h4v1h-4zM1400 304h1v1h-1zM282 308h1v1h-1zM288 308h1v2h-1zM293 308h1v2h-1zM299 308h1v1h-1zM304 308h2v1h-2zM307 308h1v1h-1zM315 308h2v1h-2zM318 308h1v1h-1zM323 308h1v2h-1zM328 308h2v1h-2zM334 308h2v1h-2zM337 308h1v1h-1zM342 308h1v2h-1zM368 308h1v1h-1zM375 308h1v2h-1zM390 308h1v1h-1zM395 308h1v1h-1zM402 308h1v1h-1zM407 308h1v1h-1zM414 308h1v1h-1zM428 308h1v1h-1zM431 308h2v1h-2zM439 308h1v1h-1zM441 308h1v2h-1zM444 308h1v2h-1zM448 308h1v2h-1zM451 308h1v1h-1zM453 308h2v1h-2zM477 308h1v1h-1zM484 308h1v1h-1zM486 308h1v1h-1zM495 308h2v1h-2zM499 308h2v1h-2zM503 308h1v1h-1zM519 308h3v1h-3zM533 308h1v1h-1zM538 308h2v1h-2zM548 308h1v1h-1zM558 308h1v1h-1zM563 308h1v1h-1zM574 308h1v1h-1zM585 308h1v1h-1zM589 308h1v1h-1zM612 308h1v2h-1zM638 308h2v1h-2zM642 308h1v1h-1zM656 308h1v2h-1zM662 308h2v1h-2zM664 308h8v2h-8zM672 308h2v1h-2zM678 308h1v1h-1zM684 308h1v1h-1zM693 308h1v1h-1zM698 308h1v1h-1zM720 308h1v1h-1zM724 308h4v1h-4zM760 308h1v1h-1zM763 308h1v1h-1zM766 308h1v1h-1zM768 308h1v1h-1zM779 308h1v1h-1zM787 308h1v1h-1zM802 308h1v1h-1zM808 308h1v2h-1zM812 308h1v1h-1zM817 308h2v1h-2zM820 308h1v1h-1zM830 308h1v1h-1zM834 308h1v1h-1zM840 308h1v2h-1zM845 308h1v2h-1zM847 308h1v2h-1zM850 308h1v1h-1zM856 308h1v1h-1zM858 308h1v1h-1zM863 308h1v1h-1zM868 308h1v1h-1zM873 308h1v1h-1zM883 308h1v1h-1zM886 308h1v2h-1zM897 308h1v1h-1zM906 308h4v1h-4zM912 308h1v1h-1zM920 308h1v1h-1zM921 308h1v2h-1zM924 308h1v1h-1zM931 308h1v1h-1zM933 308h1v1h-1zM946 308h1v1h-1zM950 308h1v1h-1zM954 308h1v1h-1zM969 308h1v1h-1zM984 308h1v1h-1zM988 308h1v1h-1zM992 308h1v1h-1zM1008 308h1v1h-1zM1011 308h1v1h-1zM1026 308h1v1h-1zM1028 308h1v1h-1zM1031 308h1v1h-1zM1039 308h1v1h-1zM1041 308h1v1h-1zM1053 308h1v1h-1zM1065 308h2v1h-2zM1071 308h1v1h-1zM1080 308h1v1h-1zM1087 308h1v1h-1zM1092 308h1v1h-1zM1107 308h1v1h-1zM1112 308h1v1h-1zM1130 308h2v1h-2zM1141 308h1v1h-1zM1148 308h1v1h-1zM1154 308h1v1h-1zM1157 308h2v1h-2zM1161 308h1v1h-1zM1166 308h1v1h-1zM1177 308h1v1h-1zM1183 308h1v1h-1zM1200 308h1v1h-1zM1206 308h1v1h-1zM1210 308h1v2h-1zM1216 308h1v1h-1zM1218 308h2v1h-2zM1220 308h4v2h-4zM1224 308h2v1h-2zM1232 308h1v2h-1zM1241 308h1v1h-1zM1247 308h1v1h-1zM1252 308h1v1h-1zM1261 308h1v1h-1zM1283 308h1v1h-1zM1310 308h1v1h-1zM1313 308h1v2h-1zM1314 308h1v1h-1zM1323 308h1v1h-1zM1329 308h1v1h-1zM1331 308h1v1h-1zM1355 308h1v1h-1zM1360 308h1v1h-1zM1365 308h1v2h-1zM1378 308h1v1h-1zM1382 308h1v1h-1zM1389 308h1v1h-1zM1396 308h1v1h-1zM408 286h1V321h-1zM1215 300h1V313h-1zM1284 287h1V320h-1zM1334 300h1V313h-1z"/>
<path d="M277 335H1401V338H277zM277 334h1v1h-1zM279 334h1v1h-1zM281 334h1v1h-1zM283 334h1v1h-1zM285 334h1v1h-1zM287 334h1v1h-1zM289 334h1v1h-1zM295 334h1v1h-1zM300 334h1v1h-1zM302 334h1v1h-1zM306 334h1v1h-1zM310 334h1v1h-1zM318 334h1v1h-1zM324 334h1v1h-1zM336 334h3v1h-3zM345 334h3v1h-3zM352 333h1v2h-1zM360 334h2v1h-2zM364 334h1v1h-1zM369 334h1v1h-1zM371 334h1v1h-1zM373 334h1v1h-1zM375 334h1v1h-1zM377 334h2v1h-2zM384 333h1v2h-1zM388 334h1v1h-1zM391 334h1v1h-1zM394 334h1v1h-1zM397 334h3v1h-3zM405 334h1v1h-1zM410 334h4v1h-4zM415 334h1v1h-1zM431 333h1v2h-1zM438 334h1v1h-1zM448 334h1v1h-1zM453 334h1v1h-1zM457 334h1v1h-1zM464 334h3v1h-3zM471 334h2v1h-2zM475 334h1v1h-1zM481 334h1v1h-1zM486 334h1v1h-1zM487 333h5v2h-5zM492 334h1v1h-1zM496 334h4v1h-4zM510 334h3v1h-3zM514 334h1v1h-1zM519 334h2v1h-2zM524 334h1v1h-1zM531 334h1v1h-1zM535 333h1v2h-1zM555 334h1v1h-1zM561 334h2v1h-2zM564 333h1v2h-1zM565 334h1v1h-1zM570 334h1v1h-1zM574 334h1v1h-1zM576 334h1v1h-1zM581 334h1v1h-1zM583 334h1v1h-1zM593 334h1v1h-1zM607 334h1v1h-1zM624 334h3v1h-3zM628 334h1v1h-1zM635 334h1v1h-1zM638 334h1v1h-1zM644 334h3v1h-3zM648 334h3v1h-3zM652 334h1v1h-1zM654 334h1v1h-1zM658 334h1v1h-1zM660 334h1v1h-1zM663 334h1v1h-1zM668 333h1v2h-1zM682 334h1v1h-1zM692 334h1v1h-1zM696 334h1v1h-1zM698 334h2v1h-2zM703 334h1v1h-1zM712 334h1v1h-1zM714 334h1v1h-1zM725 334h1v1h-1zM734 334h1v1h-1zM741 334h2v1h-2zM744 334h2v1h-2zM754 334h1v1h-1zM760 334h1v1h-1zM762 334h3v1h-3zM771 334h1v1h-1zM775 334h4v1h-4zM782 334h1v1h-1zM785 334h1v1h-1zM789 334h2v1h-2zM793 334h1v1h-1zM801 334h1v1h-1zM806 334h1v1h-1zM815 334h1v1h-1zM822 334h1v1h-1zM824 334h1v1h-1zM826 334h1v1h-1zM830 334h1v1h-1zM831 333h1v2h-1zM833 334h2v1h-2zM837 334h2v1h-2zM845 334h1v1h-1zM847 334h1v1h-1zM848 333h1v2h-1zM855 334h1v1h-1zM857 334h1v1h-1zM860 334h1v1h-1zM868 334h1v1h-1zM875 334h1v1h-1zM877 334h1v1h-1zM880 334h1v1h-1zM882 334h1v1h-1zM887 334h2v1h-2zM895 334h3v1h-3zM899 334h1v1h-1zM901 334h1v1h-1zM903 334h1v1h-1zM904 333h1v2h-1zM905 334h2v1h-2zM908 334h1v1h-1zM911 334h1v1h-1zM920 334h1v1h-1zM921 333h1v2h-1zM922 334h1v1h-1zM924 334h2v1h-2zM928 334h1v1h-1zM944 334h1v1h-1zM946 333h1v2h-1zM963 334h1v1h-1zM968 334h1v1h-1zM972 334h2v1h-2zM981 334h1v1h-1zM992 334h1v1h-1zM996 334h1v1h-1zM997 333h1v2h-1zM1006 334h1v1h-1zM1014 333h1v2h-1zM1017 334h1v1h-1zM1023 334h1v1h-1zM1025 333h1v2h-1zM1027 334h1v1h-1zM1032 334h1v1h-1zM1043 334h1v1h-1zM1049 334h1v1h-1zM1052 334h1v1h-1zM1057 334h2v1h-2zM1061 334h1v1h-1zM1065 334h2v1h-2zM1072 333h1v2h-1zM1073 334h1v1h-1zM1076 334h1v1h-1zM1079 334h1v1h-1zM1088 334h1v1h-1zM1091 334h2v1h-2zM1094 334h1v1h-1zM1098 334h1v1h-1zM1101 333h1v2h-1zM1108 334h1v1h-1zM1112 334h2v1h-2zM1117 334h1v1h-1zM1121 334h1v1h-1zM1123 333h1v2h-1zM1124 334h1v1h-1zM1125 333h6v2h-6zM1131 334h2v1h-2zM1136 334h1v1h-1zM1141 334h1v1h-1zM1148 334h1v1h-1zM1152 334h1v1h-1zM1156 334h1v1h-1zM1164 334h1v1h-1zM1166 334h1v1h-1zM1169 334h1v1h-1zM1171 334h1v1h-1zM1173 334h1v1h-1zM1188 334h1v1h-1zM1201 333h1v2h-1zM1204 334h1v1h-1zM1207 334h1v1h-1zM1209 334h1v1h-1zM1212 334h1v1h-1zM1215 333h1v2h-1zM1218 334h1v1h-1zM1220 334h1v1h-1zM1227 333h1v2h-1zM1237 334h1v1h-1zM1247 334h1v1h-1zM1253 334h1v1h-1zM1266 334h1v1h-1zM1274 334h1v1h-1zM1277 334h1v1h-1zM1280 334h1v1h-1zM1284 334h1v1h-1zM1294 334h1v1h-1zM1299 334h1v1h-1zM1302 334h1v1h-1zM1311 334h1v1h-1zM1314 334h1v1h-1zM1318 334h1v1h-1zM1332 334h1v1h-1zM1334 334h1v1h-1zM1343 334h1v1h-1zM1356 334h2v1h-2zM1359 334h1v1h-1zM1362 334h1v1h-1zM1365 334h1v1h-1zM1378 334h2v1h-2zM1385 334h2v1h-2zM1388 334h1v1h-1zM1390 334h1v1h-1zM1393 334h1v1h-1zM1400 334h1v1h-1zM277 338h2v1h-2zM281 338h1v1h-1zM285 338h1v1h-1zM288 338h1v1h-1zM290 338h4v1h-4zM295 338h1v1h-1zM298 338h1v1h-1zM300 338h1v1h-1zM302 338h1v1h-1zM308 338h2v1h-2zM311 338h1v1h-1zM315 338h1v1h-1zM319 338h1v1h-1zM322 338h2v1h-2zM335 338h1v1h-1zM338 338h1v1h-1zM342 338h1v1h-1zM345 338h1v1h-1zM347 338h1v1h-1zM354 338h3v1h-3zM359 338h2v1h-2zM364 338h1v1h-1zM367 338h1v1h-1zM371 338h2v1h-2zM374 338h1v1h-1zM378 338h1v1h-1zM383 338h1v1h-1zM394 338h2v1h-2zM397 338h1v1h-1zM399 338h3v1h-3zM404 338h2v1h-2zM409 338h1v1h-1zM413 338h1v1h-1zM426 338h1v1h-1zM427 338h1v2h-1zM432 338h1v1h-1zM435 338h1v2h-1zM437 338h1v2h-1zM440 338h4v1h-4zM446 338h1v1h-1zM450 338h1v1h-1zM453 338h2v1h-2zM456 338h1v1h-1zM462 338h1v1h-1zM466 338h1v1h-1zM470 338h1v1h-1zM473 338h1v1h-1zM476 338h1v1h-1zM484 338h3v1h-3zM487 338h5v2h-5zM492 338h1v1h-1zM494 338h1v1h-1zM500 338h2v1h-2zM503 338h1v1h-1zM507 338h1v1h-1zM511 338h1v1h-1zM514 338h1v1h-1zM521 338h1v1h-1zM523 338h1v1h-1zM530 338h1v1h-1zM533 338h1v1h-1zM540 338h2v1h-2zM546 338h1v1h-1zM548 338h1v1h-1zM553 338h1v1h-1zM556 338h1v1h-1zM559 338h1v1h-1zM562 338h1v1h-1zM565 338h1v1h-1zM569 338h2v1h-2zM572 338h1v1h-1zM575 338h2v1h-2zM579 338h1v1h-1zM591 338h1v1h-1zM594 338h1v1h-1zM597 338h1v1h-1zM605 338h1v1h-1zM612 338h1v1h-1zM615 338h1v1h-1zM620 338h1v1h-1zM624 338h3v1h-3zM635 338h1v1h-1zM637 338h1v1h-1zM646 338h1v1h-1zM648 338h2v1h-2zM651 338h1v1h-1zM656 338h1v1h-1zM665 338h1v1h-1zM677 338h1v1h-1zM681 338h1v1h-1zM685 338h1v1h-1zM688 338h2v1h-2zM691 338h1v1h-1zM693 338h1v1h-1zM696 338h2v1h-2zM704 338h1v1h-1zM706 338h1v1h-1zM710 338h1v1h-1zM714 338h1v1h-1zM716 338h1v1h-1zM719 338h1v1h-1zM720 338h1v2h-1zM721 338h1v1h-1zM725 338h3v1h-3zM731 338h1v1h-1zM737 338h2v1h-2zM742 338h3v1h-3zM748 338h1v1h-1zM751 338h1v1h-1zM754 338h1v1h-1zM756 338h1v1h-1zM758 338h1v1h-1zM766 338h1v1h-1zM768 338h2v1h-2zM772 338h1v1h-1zM785 338h1v1h-1zM798 338h2v1h-2zM802 338h1v1h-1zM817 338h2v1h-2zM821 338h3v1h-3zM825 338h1v1h-1zM828 338h1v1h-1zM836 338h1v1h-1zM838 338h1v1h-1zM843 338h2v1h-2zM846 338h2v1h-2zM850 338h1v1h-1zM853 338h1v1h-1zM857 338h2v1h-2zM860 338h1v1h-1zM870 338h1v1h-1zM874 338h1v1h-1zM876 338h1v1h-1zM880 338h1v1h-1zM885 338h2v1h-2zM893 338h1v1h-1zM896 338h2v1h-2zM901 338h1v1h-1zM905 338h1v1h-1zM907 338h1v1h-1zM909 338h1v1h-1zM913 338h1v1h-1zM915 338h1v1h-1zM918 338h3v1h-3zM939 338h2v1h-2zM947 338h1v1h-1zM949 338h4v1h-4zM953 338h1v2h-1zM958 338h2v1h-2zM963 338h4v1h-4zM969 338h1v1h-1zM971 338h2v2h-2zM975 338h1v1h-1zM982 338h1v1h-1zM986 338h2v1h-2zM992 338h1v1h-1zM994 338h1v1h-1zM1001 338h2v1h-2zM1004 338h1v1h-1zM1007 338h2v1h-2zM1012 338h1v1h-1zM1018 338h1v1h-1zM1025 338h1v1h-1zM1029 338h1v1h-1zM1033 338h1v1h-1zM1037 338h1v1h-1zM1041 338h1v1h-1zM1045 338h1v1h-1zM1050 338h1v2h-1zM1053 338h2v1h-2zM1058 338h2v1h-2zM1061 338h1v1h-1zM1063 338h2v1h-2zM1073 338h1v1h-1zM1074 338h1v2h-1zM1077 338h1v1h-1zM1080 338h2v1h-2zM1087 338h1v2h-1zM1091 338h1v1h-1zM1096 338h1v1h-1zM1102 338h2v1h-2zM1116 338h1v1h-1zM1119 338h1v1h-1zM1123 338h2v1h-2zM1125 338h6v2h-6zM1131 338h2v1h-2zM1134 338h1v1h-1zM1135 338h1v2h-1zM1137 338h1v1h-1zM1140 338h1v1h-1zM1142 338h1v1h-1zM1146 338h1v1h-1zM1151 338h2v1h-2zM1156 338h1v1h-1zM1158 338h1v1h-1zM1170 338h1v1h-1zM1179 338h2v1h-2zM1191 338h1v1h-1zM1193 338h2v1h-2zM1196 338h1v1h-1zM1199 338h1v1h-1zM1204 338h1v1h-1zM1206 338h3v1h-3zM1215 338h1v1h-1zM1216 338h1v2h-1zM1217 338h2v1h-2zM1220 338h1v1h-1zM1223 338h1v1h-1zM1236 338h2v1h-2zM1240 338h1v1h-1zM1243 338h3v1h-3zM1248 338h1v1h-1zM1254 338h1v1h-1zM1256 338h1v1h-1zM1258 338h1v1h-1zM1260 338h2v1h-2zM1263 338h1v1h-1zM1267 338h2v1h-2zM1278 338h1v1h-1zM1283 338h1v1h-1zM1286 338h1v1h-1zM1291 338h3v1h-3zM1297 338h1v1h-1zM1300 338h1v1h-1zM1307 338h1v1h-1zM1309 338h1v1h-1zM1311 338h2v1h-2zM1314 338h1v1h-1zM1315 338h1v2h-1zM1318 338h2v1h-2zM1327 338h1v1h-1zM1329 338h1v1h-1zM1332 338h1v1h-1zM1341 338h1v1h-1zM1343 338h1v1h-1zM1349 338h1v2h-1zM1351 338h1v1h-1zM1371 338h1v1h-1zM1375 338h2v1h-2zM1379 338h1v1h-1zM1386 338h3v1h-3zM1392 338h1v1h-1zM1395 338h2v1h-2zM1399 338h1v1h-1zM352 316h1V353h-1z"/>
<path d="M277 365H1401V368H277zM277 364h2v1h-2zM280 363h1v2h-1zM281 364h1v1h-1zM283 364h4v1h-4zM289 364h7v1h-7zM296 363h1v2h-1zM297 364h2v1h-2zM300 364h9v1h-9zM310 364h1v1h-1zM312 364h1v1h-1zM313 363h1v2h-1zM315 364h4v1h-4zM320 364h9v1h-9zM330 364h1v1h-1zM332 364h8v1h-8zM341 364h7v1h-7zM349 364h1v1h-1zM352 364h4v1h-4zM358 364h1v1h-1zM360 364h1v1h-1zM362 364h2v1h-2zM365 364h2v1h-2zM369 364h3v1h-3zM373 364h4v1h-4zM379 364h2v1h-2zM382 364h7v1h-7zM390 364h2v1h-2zM393 364h1v1h-1zM395 364h2v1h-2zM398 364h3v1h-3zM401 363h2v2h-2zM404 364h3v1h-3zM408 364h10v1h-10zM419 364h3v1h-3zM423 364h2v1h-2zM427 364h4v1h-4zM433 364h1v1h-1zM435 364h4v1h-4zM440 364h4v1h-4zM445 364h8v1h-8zM455 364h5v1h-5zM462 364h2v1h-2zM465 364h3v1h-3zM469 364h3v1h-3zM474 364h3v1h-3zM478 364h3v1h-3zM482 364h3v1h-3zM486 364h9v1h-9zM496 364h2v1h-2zM498 363h1v2h-1zM499 364h18v1h-18zM518 364h2v1h-2zM520 363h1v2h-1zM521 364h1v1h-1zM523 364h3v1h-3zM527 364h3v1h-3zM534 364h4v1h-4zM539 364h3v1h-3zM543 364h2v1h-2zM547 364h5v1h-5zM553 364h3v1h-3zM557 364h12v1h-12zM570 364h3v1h-3zM574 364h15v1h-15zM590 364h3v1h-3zM594 364h1v1h-1zM596 364h4v1h-4zM600 363h1v2h-1zM601 364h3v1h-3zM605 364h4v1h-4zM611 364h2v1h-2zM615 364h1v1h-1zM617 364h8v1h-8zM627 364h3v1h-3zM632 364h4v1h-4zM638 364h11v1h-11zM650 363h1v2h-1zM651 364h1v1h-1zM653 364h1v1h-1zM655 364h10v1h-10zM666 364h1v1h-1zM669 364h8v1h-8zM678 364h2v1h-2zM681 364h1v1h-1zM683 364h5v1h-5zM690 364h3v1h-3zM694 364h1v1h-1zM696 364h4v1h-4zM701 364h5v1h-5zM707 364h1v1h-1zM709 364h2v1h-2zM711 363h1v2h-1zM712 364h6v1h-6zM719 364h1v1h-1zM721 364h14v1h-14zM736 364h11v1h-11zM747 363h1v2h-1zM748 364h1v1h-1zM750 364h6v1h-6zM757 364h11v1h-11zM769 364h4v1h-4zM774 364h10v1h-10zM784 363h1v2h-1zM787 364h3v1h-3zM791 364h5v1h-5zM797 364h3v1h-3zM801 364h1v1h-1zM804 364h6v1h-6zM811 364h4v1h-4zM815 363h1v2h-1zM816 364h9v1h-9zM826 364h7v1h-7zM834 364h6v1h-6zM841 364h2v1h-2zM844 364h9v1h-9zM853 363h1v2h-1zM854 364h18v1h-18zM873 364h2v1h-2zM876 363h1v2h-1zM877 364h1v1h-1zM879 364h1v1h-1zM881 364h5v1h-5zM887 363h1v2h-1zM888 364h1v1h-1zM890 364h2v1h-2zM892 363h1v2h-1zM893 364h10v1h-10zM903 363h1v2h-1zM904 364h5v1h-5zM910 364h2v1h-2zM912 363h1v2h-1zM913 364h4v1h-4zM918 364h3v1h-3zM922 364h12v1h-12zM935 364h5v1h-5zM941 364h6v1h-6zM948 364h7v1h-7zM956 364h1v1h-1zM958 364h2v1h-2zM961 364h4v1h-4zM966 364h1v1h-1zM968 364h4v1h-4zM972 363h1v2h-1zM973 364h1v1h-1zM975 363h1v2h-1zM976 364h1v1h-1zM978 364h6v1h-6zM985 364h1v1h-1zM987 364h3v1h-3zM991 364h12v1h-12zM1006 364h2v1h-2zM1009 364h2v1h-2zM1012 364h7v1h-7zM1020 364h1v1h-1zM1021 363h1v2h-1zM1022 364h1v1h-1zM1023 363h1v2h-1zM1024 364h7v1h-7zM1033 364h5v1h-5zM1039 364h1v1h-1zM1040 363h1v2h-1zM1041 364h1v1h-1zM1044 364h10v1h-10zM1057 364h9v1h-9zM1067 364h7v1h-7zM1075 364h12v1h-12zM1089 364h2v1h-2zM1092 364h4v1h-4zM1097 364h4v1h-4zM1102 364h5v1h-5zM1108 364h7v1h-7zM1116 364h1v1h-1zM1118 364h2v1h-2zM1122 364h2v1h-2zM1125 364h1v1h-1zM1128 364h3v1h-3zM1132 364h1v1h-1zM1134 364h1v1h-1zM1136 364h5v1h-5zM1143 364h11v1h-11zM1155 364h3v1h-3zM1159 364h12v1h-12zM1172 364h7v1h-7zM1180 364h2v1h-2zM1183 364h1v1h-1zM1185 364h2v1h-2zM1188 364h2v1h-2zM1191 364h1v1h-1zM1193 364h3v1h-3zM1197 364h2v1h-2zM1200 364h1v1h-1zM1202 364h2v1h-2zM1205 364h6v1h-6zM1213 364h6v1h-6zM1220 364h3v1h-3zM1223 363h1v2h-1zM1225 364h3v1h-3zM1229 364h5v1h-5zM1235 364h6v1h-6zM1242 364h3v1h-3zM1246 364h2v1h-2zM1249 364h6v1h-6zM1257 364h3v1h-3zM1260 363h1v2h-1zM1261 364h4v1h-4zM1265 363h2v2h-2zM1267 364h5v1h-5zM1274 364h2v1h-2zM1278 364h12v1h-12zM1291 364h1v1h-1zM1293 364h2v1h-2zM1295 363h2v2h-2zM1297 364h2v1h-2zM1299 363h1v2h-1zM1300 364h1v1h-1zM1302 364h2v1h-2zM1304 363h1v2h-1zM1305 364h1v1h-1zM1307 364h2v1h-2zM1309 363h1v2h-1zM1310 364h5v1h-5zM1316 364h2v1h-2zM1318 363h1v2h-1zM1319 364h10v1h-10zM1330 364h4v1h-4zM1335 364h2v1h-2zM1338 364h1v1h-1zM1340 363h1v2h-1zM1341 364h4v1h-4zM1346 364h2v1h-2zM1349 364h2v1h-2zM1353 364h9v1h-9zM1363 363h1v2h-1zM1364 364h4v1h-4zM1369 364h1v1h-1zM1371 364h5v1h-5zM1378 364h4v1h-4zM1383 364h3v1h-3zM1387 364h1v1h-1zM1389 364h5v1h-5zM1395 364h3v1h-3zM1400 364h1v1h-1zM277 368h1v1h-1zM283 368h1v1h-1zM285 368h1v1h-1zM297 368h1v1h-1zM305 368h1v1h-1zM308 368h1v1h-1zM329 368h1v1h-1zM338 368h1v1h-1zM343 368h2v1h-2zM352 368h1v1h-1zM367 368h1v1h-1zM372 368h1v1h-1zM385 368h2v1h-2zM392 368h1v1h-1zM398 368h1v1h-1zM403 368h1v1h-1zM420 368h2v1h-2zM428 368h1v1h-1zM432 368h1v1h-1zM440 368h2v1h-2zM446 368h2v1h-2zM454 368h2v1h-2zM458 368h2v1h-2zM463 368h1v1h-1zM465 368h3v1h-3zM474 368h1v1h-1zM479 368h3v1h-3zM494 368h1v1h-1zM507 368h1v1h-1zM521 368h2v1h-2zM526 368h2v1h-2zM529 368h1v1h-1zM535 368h1v1h-1zM540 368h1v1h-1zM543 368h1v1h-1zM551 368h1v1h-1zM558 368h1v2h-1zM561 368h1v1h-1zM569 368h2v1h-2zM573 368h1v2h-1zM578 368h1v1h-1zM581 368h1v1h-1zM583 368h1v2h-1zM584 368h1v1h-1zM586 368h2v1h-2zM590 368h2v1h-2zM597 368h1v1h-1zM600 368h1v1h-1zM608 368h1v1h-1zM611 368h1v1h-1zM615 368h1v1h-1zM619 368h1v1h-1zM621 368h1v1h-1zM623 368h1v1h-1zM626 368h1v1h-1zM629 368h1v1h-1zM632 368h1v1h-1zM637 368h1v2h-1zM640 368h1v1h-1zM643 368h1v1h-1zM646 368h1v1h-1zM649 368h1v1h-1zM652 368h1v1h-1zM655 368h1v1h-1zM659 368h1v1h-1zM664 368h1v1h-1zM667 368h1v1h-1zM669 368h1v1h-1zM675 368h1v1h-1zM680 368h1v1h-1zM682 368h1v1h-1zM686 368h1v1h-1zM688 368h1v1h-1zM691 368h1v1h-1zM701 368h1v1h-1zM704 368h1v1h-1zM706 368h1v1h-1zM709 368h1v1h-1zM710 368h1v2h-1zM718 368h1v1h-1zM732 368h2v1h-2zM745 368h1v1h-1zM747 368h1v1h-1zM754 368h1v1h-1zM756 368h1v1h-1zM759 368h1v1h-1zM761 368h1v1h-1zM773 368h1v1h-1zM775 368h1v1h-1zM780 368h1v1h-1zM785 368h1v1h-1zM789 368h1v1h-1zM793 368h1v1h-1zM795 368h1v1h-1zM799 368h2v1h-2zM804 368h1v1h-1zM807 368h1v1h-1zM816 368h1v1h-1zM827 368h1v1h-1zM830 368h1v1h-1zM833 368h1v1h-1zM839 368h2v1h-2zM844 368h1v1h-1zM856 368h1v1h-1zM857 368h1v2h-1zM860 368h1v1h-1zM873 368h1v1h-1zM875 368h1v1h-1zM882 368h1v1h-1zM891 368h2v1h-2zM897 368h1v1h-1zM906 368h1v1h-1zM917 368h1v1h-1zM920 368h1v1h-1zM925 368h1v1h-1zM927 368h2v1h-2zM944 368h1v1h-1zM947 368h2v1h-2zM961 368h1v1h-1zM973 368h2v1h-2zM983 368h1v1h-1zM986 368h3v1h-3zM995 368h1v1h-1zM998 368h1v1h-1zM1019 368h1v1h-1zM1026 368h2v1h-2zM1040 368h1v1h-1zM1048 368h1v1h-1zM1051 368h1v1h-1zM1056 368h2v1h-2zM1069 368h1v1h-1zM1072 368h1v1h-1zM1074 368h1v1h-1zM1085 368h2v1h-2zM1089 368h1v1h-1zM1095 368h1v1h-1zM1108 368h1v1h-1zM1119 368h1v1h-1zM1132 368h3v1h-3zM1138 368h1v1h-1zM1151 368h1v1h-1zM1155 368h1v1h-1zM1163 368h2v1h-2zM1175 368h1v2h-1zM1178 368h1v1h-1zM1188 368h1v1h-1zM1201 368h1v1h-1zM1206 368h2v1h-2zM1209 368h1v1h-1zM1215 368h1v1h-1zM1224 368h1v1h-1zM1240 368h1v1h-1zM1242 368h1v1h-1zM1245 368h1v1h-1zM1249 368h3v1h-3zM1254 368h1v1h-1zM1259 368h1v1h-1zM1266 368h1v1h-1zM1272 368h1v1h-1zM1285 368h1v1h-1zM1289 368h2v1h-2zM1293 368h1v1h-1zM1297 368h1v1h-1zM1303 368h1v1h-1zM1308 368h1v1h-1zM1311 368h1v1h-1zM1313 368h1v1h-1zM1316 368h1v2h-1zM1317 368h1v1h-1zM1339 368h1v1h-1zM1341 368h2v1h-2zM1345 368h1v1h-1zM1356 368h1v1h-1zM1363 368h1v1h-1zM1365 368h1v1h-1zM1368 368h1v1h-1zM1370 368h1v1h-1zM1371 368h1v2h-1zM1381 368h1v1h-1zM1386 368h1v1h-1zM1387 368h1v2h-1zM1388 368h1v1h-1zM1393 368h1v1h-1zM1397 368h1v1h-1zM462 351h1V382h-1zM706 347h1V383h-1z"/>
<path d="M277 396H1401V399H277zM277 395h3v1h-3zM295 395h1v1h-1zM313 395h1v1h-1zM326 395h1v1h-1zM331 395h1v1h-1zM347 395h3v1h-3zM354 395h1v1h-1zM370 395h1v1h-1zM375 395h1v1h-1zM379 395h1v1h-1zM383 395h1v1h-1zM389 395h1v1h-1zM401 395h2v1h-2zM404 395h1v1h-1zM408 395h1v1h-1zM415 395h1v1h-1zM428 395h2v1h-2zM443 395h1v1h-1zM451 395h2v1h-2zM454 395h3v1h-3zM469 395h1v1h-1zM478 395h1v1h-1zM506 395h1v1h-1zM509 395h2v1h-2zM512 395h2v1h-2zM516 395h1v1h-1zM518 395h1v1h-1zM520 395h1v1h-1zM525 395h1v1h-1zM528 395h1v1h-1zM538 395h1v1h-1zM552 395h1v1h-1zM565 395h1v1h-1zM580 395h1v1h-1zM604 395h1v1h-1zM606 395h1v1h-1zM617 395h1v1h-1zM622 395h1v1h-1zM626 395h1v1h-1zM629 395h1v1h-1zM631 395h1v1h-1zM638 395h1v1h-1zM641 395h1v1h-1zM659 395h1v1h-1zM666 395h1v1h-1zM671 395h1v1h-1zM678 395h1v1h-1zM682 395h3v1h-3zM701 395h1v1h-1zM708 395h1v1h-1zM710 395h3v1h-3zM716 395h1v1h-1zM718 395h1v1h-1zM736 395h1v1h-1zM745 395h1v1h-1zM747 395h1v1h-1zM750 395h1v1h-1zM753 395h2v1h-2zM770 395h2v1h-2zM793 395h1v1h-1zM814 395h1v1h-1zM826 395h1v1h-1zM843 395h1v1h-1zM848 395h1v1h-1zM856 395h1v1h-1zM863 395h1v1h-1zM873 395h1v1h-1zM876 395h2v1h-2zM892 395h1v1h-1zM906 395h1v1h-1zM908 395h1v1h-1zM912 395h1v1h-1zM918 395h1v1h-1zM921 395h1v1h-1zM930 395h1v1h-1zM932 395h2v1h-2zM936 395h1v1h-1zM954 395h1v1h-1zM957 395h1v1h-1zM963 395h1v1h-1zM967 395h1v1h-1zM974 395h1v1h-1zM977 395h1v1h-1zM987 395h1v1h-1zM992 395h1v1h-1zM996 395h1v1h-1zM1004 395h1v1h-1zM1009 395h1v1h-1zM1017 395h1v1h-1zM1021 395h1v1h-1zM1023 395h4v1h-4zM1032 395h1v1h-1zM1036 395h1v1h-1zM1044 395h1v1h-1zM1069 395h1v1h-1zM1074 395h1v1h-1zM1084 395h1v1h-1zM1087 395h1v1h-1zM1093 395h1v1h-1zM1097 395h1v1h-1zM1099 395h1v1h-1zM1119 395h1v1h-1zM1125 395h1v1h-1zM1128 395h1v1h-1zM1138 395h1v1h-1zM1145 395h1v1h-1zM1151 395h1v1h-1zM1155 395h1v1h-1zM1170 395h1v1h-1zM1179 395h1v1h-1zM1188 395h1v1h-1zM1214 395h1v1h-1zM1223 395h2v1h-2zM1230 395h1v1h-1zM1242 395h1v1h-1zM1250 395h1v1h-1zM1259 395h1v1h-1zM1266 395h1v1h-1zM1275 395h2v1h-2zM1299 395h1v1h-1zM1312 395h1v1h-1zM1315 395h2v1h-2zM1334 395h2v1h-2zM1338 395h2v1h-2zM1348 395h1v1h-1zM1368 395h2v1h-2zM1371 395h1v1h-1zM1385 395h1v1h-1zM1398 395h2v1h-2zM280 399h1v1h-1zM283 399h1v1h-1zM297 399h1v1h-1zM333 399h1v1h-1zM340 399h1v1h-1zM378 399h1v1h-1zM393 399h1v1h-1zM409 399h1v1h-1zM451 399h1v1h-1zM458 399h1v1h-1zM476 399h1v1h-1zM497 399h1v1h-1zM560 399h1v1h-1zM566 399h2v1h-2zM579 399h1v1h-1zM596 399h2v1h-2zM602 399h1v1h-1zM614 399h1v1h-1zM622 399h1v1h-1zM624 399h1v1h-1zM649 399h1v1h-1zM656 399h1v1h-1zM667 399h1v1h-1zM683 399h1v1h-1zM697 399h1v1h-1zM701 399h1v1h-1zM712 399h1v1h-1zM742 399h1v1h-1zM754 399h1v1h-1zM781 399h1v1h-1zM784 399h1v1h-1zM793 399h1v1h-1zM797 399h1v1h-1zM805 399h1v1h-1zM809 399h1v1h-1zM830 399h1v1h-1zM880 399h1v1h-1zM968 399h1v1h-1zM973 399h1v1h-1zM982 399h1v1h-1zM987 399h1v1h-1zM992 399h1v1h-1zM1006 399h1v1h-1zM1033 399h1v1h-1zM1058 399h1v1h-1zM1072 399h1v1h-1zM1087 399h1v1h-1zM1129 399h1v1h-1zM1138 399h1v1h-1zM1185 399h2v1h-2zM1223 399h1v1h-1zM1227 399h1v1h-1zM1235 399h1v1h-1zM1237 399h1v1h-1zM1267 399h1v1h-1zM1302 399h1v1h-1zM1314 399h1v1h-1zM1333 399h2v1h-2zM1369 399h1v1h-1zM1044 378h1V413h-1zM1114 379h1V412h-1z"/>
<path d="M277 426H1401V429H277zM286 425h1v1h-1zM296 425h1v1h-1zM309 425h2v1h-2zM327 425h1v1h-1zM365 425h1v1h-1zM388 425h1v1h-1zM391 425h2v1h-2zM394 425h1v1h-1zM396 425h1v1h-1zM402 425h2v1h-2zM407 425h1v1h-1zM437 425h2v1h-2zM451 425h1v1h-1zM453 425h1v1h-1zM458 425h1v1h-1zM465 425h2v1h-2zM472 425h1v1h-1zM482 425h2v1h-2zM484 424h5v2h-5zM489 425h2v1h-2zM492 425h1v1h-1zM508 425h1v1h-1zM523 425h1v1h-1zM531 425h1v1h-1zM537 425h1v1h-1zM551 425h1v1h-1zM553 425h1v1h-1zM562 425h1v1h-1zM567 425h1v1h-1zM580 425h1v1h-1zM585 425h1v1h-1zM595 425h1v1h-1zM604 425h2v1h-2zM609 425h1v1h-1zM611 425h1v1h-1zM632 425h1v1h-1zM635 425h1v1h-1zM637 425h1v1h-1zM660 425h1v1h-1zM662 425h1v1h-1zM666 425h1v1h-1zM669 425h1v1h-1zM687 425h1v1h-1zM689 425h1v1h-1zM698 425h1v1h-1zM707 425h2v1h-2zM713 425h1v1h-1zM717 425h1v1h-1zM720 425h1v1h-1zM757 425h1v1h-1zM785 425h1v1h-1zM806 425h1v1h-1zM825 425h1v1h-1zM828 425h1v1h-1zM850 425h2v1h-2zM853 425h1v1h-1zM865 425h1v1h-1zM867 425h1v1h-1zM870 425h1v1h-1zM885 425h1v1h-1zM888 425h2v1h-2zM891 425h1v1h-1zM899 425h1v1h-1zM901 425h2v1h-2zM906 425h1v1h-1zM928 425h1v1h-1zM943 425h1v1h-1zM967 425h1v1h-1zM975 425h1v1h-1zM977 425h1v1h-1zM984 425h1v1h-1zM987 425h2v1h-2zM994 425h2v1h-2zM1016 425h1v1h-1zM1018 425h1v1h-1zM1035 425h1v1h-1zM1038 425h1v1h-1zM1051 425h1v1h-1zM1054 425h1v1h-1zM1070 425h1v1h-1zM1079 425h2v1h-2zM1084 425h1v1h-1zM1090 425h1v1h-1zM1094 425h2v1h-2zM1112 425h1v1h-1zM1130 425h2v1h-2zM1139 425h1v1h-1zM1149 425h1v1h-1zM1173 425h1v1h-1zM1200 425h1v1h-1zM1208 425h1v1h-1zM1210 425h1v1h-1zM1225 425h1v1h-1zM1233 425h1v1h-1zM1236 425h2v1h-2zM1265 425h1v1h-1zM1268 425h1v1h-1zM1274 425h2v1h-2zM1288 425h1v1h-1zM1292 425h1v1h-1zM1314 425h1v1h-1zM1328 425h1v1h-1zM1336 425h2v1h-2zM1365 425h1v1h-1zM1381 425h1v1h-1zM278 429h1v1h-1zM285 429h1v1h-1zM316 429h3v1h-3zM322 429h1v1h-1zM338 429h1v1h-1zM340 429h1v1h-1zM345 429h2v1h-2zM352 429h1v1h-1zM358 429h1v1h-1zM362 429h1v1h-1zM368 429h1v1h-1zM382 429h1v1h-1zM413 429h1v1h-1zM421 429h1v1h-1zM424 429h1v1h-1zM431 429h1v1h-1zM441 429h1v1h-1zM447 429h2v1h-2zM460 429h2v1h-2zM477 429h1v1h-1zM479 429h2v1h-2zM482 429h2v1h-2zM484 429h5v2h-5zM489 429h2v1h-2zM509 429h1v1h-1zM547 429h2v1h-2zM550 429h1v1h-1zM552 429h1v1h-1zM561 429h1v1h-1zM567 429h2v1h-2zM578 429h1v1h-1zM588 429h1v1h-1zM601 429h1v1h-1zM603 429h1v1h-1zM614 429h1v1h-1zM622 429h1v1h-1zM630 429h1v1h-1zM649 429h1v1h-1zM651 429h1v1h-1zM670 429h1v1h-1zM679 429h1v1h-1zM693 429h1v1h-1zM698 429h1v1h-1zM701 429h1v1h-1zM729 429h1v1h-1zM743 429h1v1h-1zM746 429h1v1h-1zM767 429h1v1h-1zM772 429h1v1h-1zM779 429h1v1h-1zM796 429h1v1h-1zM801 429h1v1h-1zM828 429h1v1h-1zM848 429h1v1h-1zM862 429h1v1h-1zM869 429h1v1h-1zM902 429h1v1h-1zM906 429h1v1h-1zM930 429h1v1h-1zM932 429h1v1h-1zM968 429h1v1h-1zM1003 429h2v1h-2zM1014 429h1v1h-1zM1035 429h1v1h-1zM1052 429h1v1h-1zM1054 429h1v1h-1zM1056 429h1v1h-1zM1064 429h1v1h-1zM1069 429h1v1h-1zM1085 429h1v1h-1zM1093 429h1v1h-1zM1101 429h1v1h-1zM1110 429h1v1h-1zM1112 429h1v1h-1zM1120 429h1v1h-1zM1146 429h1v1h-1zM1153 429h1v1h-1zM1160 429h1v1h-1zM1163 429h1v1h-1zM1185 429h1v1h-1zM1201 429h1v1h-1zM1203 429h1v1h-1zM1208 429h1v1h-1zM1235 429h1v1h-1zM1244 429h1v1h-1zM1250 429h1v1h-1zM1273 429h1v1h-1zM1275 429h1v1h-1zM1280 429h1v1h-1zM1289 429h1v1h-1zM1296 429h1v1h-1zM1298 429h1v1h-1zM1338 429h1v1h-1zM1340 429h1v1h-1zM1347 429h1v1h-1zM1350 429h1v1h-1zM1368 429h1v1h-1zM1380 429h1v1h-1zM1386 429h1v1h-1zM1389 429h1v1h-1zM1393 429h1v1h-1zM1396 429h1v1h-1zM1398 429h1v1h-1zM282 400h1V445h-1z"/>
<path d="M277 456H1401V459H277zM277 455h12v1h-12zM290 455h8v1h-8zM299 455h14v1h-14zM314 455h8v1h-8zM323 455h3v1h-3zM327 455h5v1h-5zM333 455h4v1h-4zM338 455h2v1h-2zM341 455h1v1h-1zM343 455h2v1h-2zM346 455h6v1h-6zM353 455h7v1h-7zM361 455h1v1h-1zM363 455h8v1h-8zM372 455h8v1h-8zM381 455h4v1h-4zM386 455h1v1h-1zM388 455h2v1h-2zM391 455h5v1h-5zM396 454h1v2h-1zM397 455h5v1h-5zM403 455h8v1h-8zM412 455h6v1h-6zM419 455h2v1h-2zM422 455h9v1h-9zM431 454h1v2h-1zM432 455h10v1h-10zM443 455h8v1h-8zM453 455h2v1h-2zM456 455h6v1h-6zM463 455h3v1h-3zM467 455h1v1h-1zM469 455h1v1h-1zM471 455h9v1h-9zM481 455h7v1h-7zM489 455h3v1h-3zM492 454h1v2h-1zM493 455h1v1h-1zM495 455h19v1h-19zM516 455h2v1h-2zM519 455h3v1h-3zM522 454h1v2h-1zM523 455h1v1h-1zM525 455h6v1h-6zM532 455h1v1h-1zM534 455h4v1h-4zM538 454h1v2h-1zM539 455h2v1h-2zM542 455h2v1h-2zM545 455h3v1h-3zM549 455h13v1h-13zM563 455h7v1h-7zM571 455h10v1h-10zM584 455h6v1h-6zM591 455h9v1h-9zM601 455h4v1h-4zM607 455h16v1h-16zM624 455h14v1h-14zM639 455h1v1h-1zM641 455h7v1h-7zM649 455h15v1h-15zM665 455h2v1h-2zM668 455h1v1h-1zM670 455h3v1h-3zM675 455h6v1h-6zM682 455h4v1h-4zM687 455h9v1h-9zM697 455h1v1h-1zM699 455h7v1h-7zM707 455h4v1h-4zM712 454h1v2h-1zM714 455h1v1h-1zM716 455h3v1h-3zM720 455h1v1h-1zM722 455h26v1h-26zM749 455h1v1h-1zM751 454h1v2h-1zM752 455h7v1h-7zM760 455h6v1h-6zM767 455h5v1h-5zM773 455h8v1h-8zM782 455h1v1h-1zM784 455h6v1h-6zM791 455h2v1h-2zM794 455h1v1h-1zM796 455h4v1h-4zM800 454h1v2h-1zM801 455h4v1h-4zM805 454h1v2h-1zM806 455h6v1h-6zM814 454h1v2h-1zM815 455h2v1h-2zM819 455h5v1h-5zM825 455h5v1h-5zM831 455h2v1h-2zM833 454h1v2h-1zM834 455h3v1h-3zM838 455h11v1h-11zM850 455h1v1h-1zM851 454h1v2h-1zM854 455h10v1h-10zM864 454h1v2h-1zM865 455h5v1h-5zM871 455h9v1h-9zM881 455h1v1h-1zM883 455h3v1h-3zM887 455h3v1h-3zM891 455h1v1h-1zM893 455h1v1h-1zM895 455h6v1h-6zM901 454h1v2h-1zM902 455h2v1h-2zM906 455h1v1h-1zM908 455h4v1h-4zM913 455h14v1h-14zM928 455h7v1h-7zM936 455h7v1h-7zM945 455h1v1h-1zM948 455h2v1h-2zM952 455h4v1h-4zM958 455h1v1h-1zM959 454h1v2h-1zM960 455h5v1h-5zM966 455h8v1h-8zM975 455h1v1h-1zM977 455h4v1h-4zM983 455h10v1h-10zM994 455h4v1h-4zM999 455h13v1h-13zM1013 455h1v1h-1zM1015 455h4v1h-4zM1020 455h5v1h-5zM1026 455h16v1h-16zM1044 455h4v1h-4zM1048 454h1v2h-1zM1049 455h1v1h-1zM1051 455h3v1h-3zM1056 455h3v1h-3zM1060 455h7v1h-7zM1068 455h2v1h-2zM1072 455h2v1h-2zM1076 455h2v1h-2zM1079 455h3v1h-3zM1083 455h4v1h-4zM1088 455h5v1h-5zM1094 455h1v1h-1zM1096 455h3v1h-3zM1100 455h10v1h-10zM1111 455h6v1h-6zM1119 455h10v1h-10zM1129 454h1v2h-1zM1130 455h3v1h-3zM1134 455h2v1h-2zM1137 455h4v1h-4zM1142 455h7v1h-7zM1150 455h9v1h-9zM1160 455h2v1h-2zM1163 455h4v1h-4zM1169 455h9v1h-9zM1179 455h2v1h-2zM1182 455h1v1h-1zM1184 455h2v1h-2zM1186 454h1v2h-1zM1188 455h5v1h-5zM1194 455h3v1h-3zM1198 455h1v1h-1zM1200 455h2v1h-2zM1203 455h21v1h-21zM1225 455h3v1h-3zM1229 455h2v1h-2zM1232 455h2v1h-2zM1235 455h14v1h-14zM1250 455h3v1h-3zM1254 455h4v1h-4zM1259 455h4v1h-4zM1264 455h4v1h-4zM1269 455h1v1h-1zM1272 455h5v1h-5zM1278 455h7v1h-7zM1286 455h1v1h-1zM1288 455h8v1h-8zM1297 455h7v1h-7zM1305 455h4v1h-4zM1311 455h7v1h-7zM1318 454h1v2h-1zM1319 455h5v1h-5zM1325 455h3v1h-3zM1329 455h2v1h-2zM1332 455h6v1h-6zM1338 454h1v2h-1zM1339 455h4v1h-4zM1345 455h5v1h-5zM1351 455h2v1h-2zM1354 455h3v1h-3zM1358 455h8v1h-8zM1366 454h1v2h-1zM1367 455h7v1h-7zM1374 454h1v2h-1zM1375 455h1v1h-1zM1378 455h13v1h-13zM1392 455h2v1h-2zM1395 455h2v1h-2zM1398 455h3v1h-3zM287 459h1v1h-1zM289 459h1v1h-1zM290 459h1v2h-1zM293 459h2v1h-2zM298 459h1v1h-1zM302 459h1v1h-1zM306 459h2v1h-2zM311 459h1v1h-1zM316 459h1v1h-1zM331 459h1v1h-1zM335 459h3v1h-3zM339 459h1v1h-1zM343 459h1v1h-1zM349 459h3v1h-3zM362 459h2v1h-2zM366 459h1v1h-1zM371 459h1v1h-1zM378 459h1v1h-1zM380 459h1v1h-1zM384 459h1v1h-1zM388 459h1v1h-1zM393 459h1v1h-1zM396 459h1v1h-1zM397 459h1v2h-1zM399 459h2v1h-2zM405 459h1v1h-1zM407 459h1v1h-1zM409 459h2v1h-2zM419 459h2v1h-2zM424 459h1v1h-1zM426 459h3v1h-3zM430 459h1v1h-1zM434 459h3v1h-3zM438 459h1v1h-1zM442 459h1v1h-1zM447 459h1v1h-1zM449 459h1v2h-1zM450 459h1v1h-1zM458 459h1v1h-1zM461 459h1v2h-1zM467 459h1v2h-1zM468 459h2v1h-2zM474 459h1v1h-1zM477 459h1v1h-1zM487 459h2v1h-2zM492 459h3v1h-3zM500 459h1v1h-1zM508 459h1v1h-1zM513 459h1v1h-1zM516 459h2v1h-2zM519 459h1v2h-1zM521 459h1v1h-1zM524 459h1v1h-1zM532 459h3v1h-3zM537 459h1v1h-1zM545 459h1v1h-1zM548 459h1v1h-1zM550 459h2v1h-2zM554 459h2v1h-2zM563 459h1v1h-1zM567 459h2v1h-2zM576 459h2v1h-2zM580 459h1v1h-1zM582 459h1v1h-1zM588 459h2v1h-2zM595 459h2v1h-2zM602 459h1v2h-1zM606 459h1v1h-1zM608 459h1v1h-1zM613 459h1v1h-1zM617 459h1v1h-1zM620 459h2v1h-2zM624 459h1v1h-1zM639 459h1v1h-1zM643 459h1v1h-1zM651 459h1v1h-1zM653 459h1v2h-1zM654 459h1v1h-1zM656 459h1v1h-1zM675 459h1v1h-1zM678 459h3v1h-3zM687 459h1v1h-1zM690 459h2v1h-2zM701 459h1v1h-1zM703 459h1v1h-1zM709 459h1v1h-1zM711 459h1v1h-1zM715 459h1v1h-1zM717 459h2v1h-2zM722 459h1v1h-1zM743 459h1v1h-1zM747 459h1v1h-1zM750 459h1v1h-1zM754 459h1v1h-1zM763 459h3v1h-3zM770 459h1v1h-1zM775 459h2v1h-2zM781 459h1v1h-1zM788 459h2v1h-2zM792 459h1v1h-1zM795 459h1v1h-1zM799 459h1v1h-1zM802 459h1v1h-1zM804 459h1v1h-1zM808 459h1v1h-1zM812 459h1v1h-1zM815 459h1v1h-1zM817 459h1v1h-1zM819 459h1v1h-1zM827 459h1v1h-1zM833 459h1v1h-1zM838 459h1v1h-1zM842 459h1v1h-1zM856 459h1v1h-1zM860 459h1v1h-1zM863 459h1v1h-1zM870 459h2v1h-2zM884 459h1v1h-1zM887 459h1v1h-1zM891 459h1v1h-1zM893 459h1v1h-1zM898 459h2v1h-2zM904 459h1v1h-1zM915 459h2v1h-2zM921 459h5v1h-5zM934 459h1v1h-1zM940 459h1v1h-1zM943 459h1v1h-1zM951 459h3v1h-3zM965 459h1v1h-1zM971 459h1v1h-1zM979 459h1v1h-1zM986 459h2v1h-2zM991 459h1v1h-1zM995 459h2v1h-2zM998 459h1v2h-1zM999 459h1v1h-1zM1001 459h1v1h-1zM1009 459h2v1h-2zM1014 459h5v1h-5zM1021 459h1v1h-1zM1027 459h3v1h-3zM1031 459h1v1h-1zM1032 459h1v2h-1zM1036 459h1v1h-1zM1038 459h1v1h-1zM1044 459h1v1h-1zM1046 459h1v1h-1zM1058 459h2v1h-2zM1068 459h1v1h-1zM1075 459h3v1h-3zM1080 459h2v1h-2zM1085 459h1v1h-1zM1088 459h1v1h-1zM1094 459h1v1h-1zM1104 459h1v1h-1zM1106 459h2v1h-2zM1115 459h1v1h-1zM1123 459h1v2h-1zM1128 459h1v1h-1zM1131 459h2v1h-2zM1142 459h1v1h-1zM1145 459h1v1h-1zM1148 459h1v1h-1zM1150 459h2v1h-2zM1164 459h1v2h-1zM1170 459h1v1h-1zM1178 459h1v1h-1zM1180 459h1v1h-1zM1197 459h1v1h-1zM1198 459h1v2h-1zM1206 459h1v1h-1zM1212 459h1v1h-1zM1214 459h2v1h-2zM1223 459h1v1h-1zM1225 459h1v1h-1zM1227 459h1v1h-1zM1232 459h1v1h-1zM1237 459h1v1h-1zM1240 459h2v1h-2zM1244 459h4v1h-4zM1256 459h1v1h-1zM1261 459h1v1h-1zM1263 459h1v1h-1zM1279 459h1v1h-1zM1286 459h1v1h-1zM1289 459h1v1h-1zM1291 459h1v1h-1zM1293 459h2v1h-2zM1302 459h2v1h-2zM1311 459h1v1h-1zM1321 459h2v1h-2zM1332 459h2v1h-2zM1337 459h1v1h-1zM1344 459h1v1h-1zM1348 459h1v1h-1zM1350 459h2v1h-2zM1357 459h1v1h-1zM1364 459h1v1h-1zM1369 459h2v1h-2zM1377 459h1v1h-1zM1380 459h1v1h-1zM1382 459h1v1h-1zM1386 459h1v1h-1zM1394 459h1v1h-1zM1396 459h1v1h-1zM648 453h1V462h-1z"/>
<path d="M277 487H1401V490H277zM281 486h2v1h-2zM284 486h7v1h-7zM292 486h1v1h-1zM297 486h3v1h-3zM301 486h6v1h-6zM308 486h1v1h-1zM310 486h6v1h-6zM317 486h1v1h-1zM319 486h4v1h-4zM326 486h2v1h-2zM329 486h1v1h-1zM331 486h1v1h-1zM333 486h1v1h-1zM337 486h1v1h-1zM339 486h1v1h-1zM341 486h1v1h-1zM343 486h2v1h-2zM347 486h1v1h-1zM349 486h8v1h-8zM361 486h1v1h-1zM362 485h1v2h-1zM364 486h4v1h-4zM371 486h1v1h-1zM374 486h1v1h-1zM377 486h2v1h-2zM380 486h3v1h-3zM384 486h1v1h-1zM388 486h1v1h-1zM390 486h2v1h-2zM393 486h1v1h-1zM395 486h3v1h-3zM399 486h1v1h-1zM401 485h1v2h-1zM402 486h1v1h-1zM409 486h4v1h-4zM414 486h4v1h-4zM420 486h1v1h-1zM421 485h1v2h-1zM422 486h4v1h-4zM427 486h1v1h-1zM429 486h3v1h-3zM433 486h4v1h-4zM438 486h1v1h-1zM441 486h1v1h-1zM443 486h2v1h-2zM446 486h3v1h-3zM451 486h5v1h-5zM459 486h1v1h-1zM462 486h1v1h-1zM464 486h1v1h-1zM467 485h1v2h-1zM468 486h2v1h-2zM472 486h2v1h-2zM475 486h2v1h-2zM479 486h1v1h-1zM481 486h8v1h-8zM490 486h2v1h-2zM493 486h1v1h-1zM496 485h1v2h-1zM497 486h9v1h-9zM507 486h3v1h-3zM511 486h2v1h-2zM514 486h1v1h-1zM518 486h6v1h-6zM536 486h1v1h-1zM542 486h1v1h-1zM546 486h1v1h-1zM548 486h3v1h-3zM553 486h2v1h-2zM556 486h1v1h-1zM560 486h1v1h-1zM562 486h1v1h-1zM565 486h1v1h-1zM567 486h1v1h-1zM571 486h3v1h-3zM575 486h2v1h-2zM578 486h6v1h-6zM585 486h9v1h-9zM595 486h1v1h-1zM598 486h4v1h-4zM603 486h1v1h-1zM604 485h1v2h-1zM606 486h1v1h-1zM610 486h1v1h-1zM612 486h3v1h-3zM616 486h4v1h-4zM622 486h1v1h-1zM624 486h2v1h-2zM627 486h5v1h-5zM635 486h1v1h-1zM638 486h4v1h-4zM647 486h1v1h-1zM649 486h5v1h-5zM656 486h3v1h-3zM661 486h3v1h-3zM664 485h1v2h-1zM667 486h2v1h-2zM670 486h1v1h-1zM672 486h1v1h-1zM675 486h3v1h-3zM678 485h1v2h-1zM679 486h4v1h-4zM684 486h1v1h-1zM687 486h3v1h-3zM691 486h3v1h-3zM695 486h2v1h-2zM698 486h2v1h-2zM700 485h1v2h-1zM701 486h1v1h-1zM703 486h4v1h-4zM708 486h4v1h-4zM713 486h1v1h-1zM714 485h1v2h-1zM715 486h1v1h-1zM718 486h5v1h-5zM724 486h2v1h-2zM727 486h1v1h-1zM729 486h6v1h-6zM737 486h1v1h-1zM741 486h1v1h-1zM744 486h2v1h-2zM748 486h4v1h-4zM755 486h3v1h-3zM760 486h2v1h-2zM766 486h5v1h-5zM772 486h2v1h-2zM775 486h5v1h-5zM781 486h1v1h-1zM784 486h2v1h-2zM788 486h1v1h-1zM789 485h1v2h-1zM790 486h1v1h-1zM792 486h6v1h-6zM799 486h1v1h-1zM800 485h1v2h-1zM803 486h1v1h-1zM807 486h3v1h-3zM811 486h3v1h-3zM816 486h2v1h-2zM819 486h1v1h-1zM821 486h6v1h-6zM828 486h3v1h-3zM833 485h1v2h-1zM834 486h6v1h-6zM843 486h6v1h-6zM851 486h2v1h-2zM854 486h1v1h-1zM856 486h1v1h-1zM858 486h1v1h-1zM860 486h1v1h-1zM862 486h1v1h-1zM864 486h7v1h-7zM871 485h1v2h-1zM875 485h2v2h-2zM877 486h1v1h-1zM879 486h1v1h-1zM884 486h3v1h-3zM891 486h5v1h-5zM897 486h1v1h-1zM900 486h1v1h-1zM903 486h3v1h-3zM907 486h4v1h-4zM912 486h3v1h-3zM916 486h2v1h-2zM920 486h2v1h-2zM923 486h6v1h-6zM931 486h1v1h-1zM933 485h1v2h-1zM937 486h3v1h-3zM942 486h8v1h-8zM951 486h1v1h-1zM953 486h2v1h-2zM958 486h1v1h-1zM961 486h5v1h-5zM967 486h2v1h-2zM970 486h1v1h-1zM972 486h4v1h-4zM977 486h7v1h-7zM985 485h1v2h-1zM986 486h1v1h-1zM989 485h1v2h-1zM991 486h3v1h-3zM996 486h1v1h-1zM998 486h1v1h-1zM1000 486h2v1h-2zM1003 486h2v1h-2zM1006 486h1v1h-1zM1008 486h2v1h-2zM1012 486h3v1h-3zM1016 486h3v1h-3zM1021 486h2v1h-2zM1024 486h2v1h-2zM1027 485h1v2h-1zM1028 486h1v1h-1zM1031 486h3v1h-3zM1035 486h1v1h-1zM1037 486h4v1h-4zM1043 486h2v1h-2zM1046 486h1v1h-1zM1049 486h6v1h-6zM1056 486h2v1h-2zM1060 486h2v1h-2zM1065 486h1v1h-1zM1068 486h1v1h-1zM1071 486h2v1h-2zM1074 486h1v1h-1zM1077 486h2v1h-2zM1080 486h13v1h-13zM1094 486h2v1h-2zM1097 486h1v1h-1zM1101 486h1v1h-1zM1103 486h1v1h-1zM1106 486h1v1h-1zM1109 486h4v1h-4zM1114 486h2v1h-2zM1118 486h2v1h-2zM1121 486h1v1h-1zM1124 486h5v1h-5zM1131 486h2v1h-2zM1134 486h3v1h-3zM1143 485h1v2h-1zM1145 486h5v1h-5zM1152 486h3v1h-3zM1156 486h1v1h-1zM1158 486h1v1h-1zM1161 486h1v1h-1zM1164 486h1v1h-1zM1165 485h1v2h-1zM1167 486h4v1h-4zM1175 486h1v1h-1zM1180 485h1v2h-1zM1181 486h3v1h-3zM1185 486h1v1h-1zM1187 486h3v1h-3zM1191 486h1v1h-1zM1193 486h1v1h-1zM1197 486h4v1h-4zM1202 486h8v1h-8zM1211 486h1v1h-1zM1215 486h2v1h-2zM1218 486h4v1h-4zM1223 486h3v1h-3zM1227 486h3v1h-3zM1231 486h1v1h-1zM1233 486h3v1h-3zM1239 486h4v1h-4zM1244 486h4v1h-4zM1249 486h2v1h-2zM1255 486h2v1h-2zM1257 485h1v2h-1zM1258 486h2v1h-2zM1261 486h3v1h-3zM1265 486h1v1h-1zM1267 486h2v1h-2zM1270 486h2v1h-2zM1274 486h1v1h-1zM1276 486h1v1h-1zM1278 486h3v1h-3zM1282 486h2v1h-2zM1285 486h1v1h-1zM1287 486h5v1h-5zM1293 486h2v1h-2zM1295 485h1v2h-1zM1296 486h2v1h-2zM1299 486h2v1h-2zM1302 486h2v1h-2zM1306 486h3v1h-3zM1310 486h2v1h-2zM1313 486h1v1h-1zM1315 486h1v1h-1zM1317 486h1v1h-1zM1319 486h5v1h-5zM1327 486h4v1h-4zM1332 486h2v1h-2zM1335 486h2v1h-2zM1338 486h2v1h-2zM1341 486h1v1h-1zM1343 486h2v1h-2zM1347 486h2v1h-2zM1351 486h6v1h-6zM1358 486h2v1h-2zM1362 486h1v1h-1zM1364 486h2v1h-2zM1367 486h1v1h-1zM1369 486h6v1h-6zM1378 486h1v1h-1zM1380 486h2v1h-2zM1383 486h2v1h-2zM1387 486h3v1h-3zM1391 486h1v1h-1zM1397 486h2v1h-2zM1400 486h1v1h-1zM287 490h1v1h-1zM334 490h1v1h-1zM336 490h1v1h-1zM348 490h1v2h-1zM350 490h1v1h-1zM359 490h1v1h-1zM364 490h1v1h-1zM369 490h1v1h-1zM371 490h1v1h-1zM386 490h1v1h-1zM400 490h1v1h-1zM409 490h2v1h-2zM414 490h1v1h-1zM416 490h1v1h-1zM419 490h1v2h-1zM421 490h2v1h-2zM424 490h2v1h-2zM446 490h1v1h-1zM450 490h1v1h-1zM472 490h1v2h-1zM478 490h1v1h-1zM486 490h1v1h-1zM512 490h1v1h-1zM516 490h1v1h-1zM523 490h1v1h-1zM525 490h1v1h-1zM531 490h1v1h-1zM533 490h1v1h-1zM548 490h1v1h-1zM553 490h1v1h-1zM555 490h2v1h-2zM560 490h1v1h-1zM568 490h1v1h-1zM570 490h1v1h-1zM572 490h1v1h-1zM577 490h1v1h-1zM582 490h1v1h-1zM593 490h1v1h-1zM603 490h1v1h-1zM605 490h2v1h-2zM612 490h1v1h-1zM621 490h1v1h-1zM625 490h1v1h-1zM632 490h1v1h-1zM642 490h1v1h-1zM649 490h1v2h-1zM651 490h1v1h-1zM661 490h1v1h-1zM667 490h3v1h-3zM673 490h1v1h-1zM682 490h1v1h-1zM698 490h1v1h-1zM706 490h1v1h-1zM723 490h1v1h-1zM732 490h1v1h-1zM737 490h1v2h-1zM741 490h1v1h-1zM749 490h1v1h-1zM751 490h1v1h-1zM758 490h1v1h-1zM772 490h1v1h-1zM773 490h1v2h-1zM783 490h1v1h-1zM785 490h1v1h-1zM795 490h1v2h-1zM798 490h1v1h-1zM801 490h2v1h-2zM804 490h1v1h-1zM810 490h2v1h-2zM818 490h1v1h-1zM833 490h1v1h-1zM834 490h1v2h-1zM840 490h1v2h-1zM847 490h1v1h-1zM854 490h1v1h-1zM869 490h1v1h-1zM873 490h1v1h-1zM878 490h1v1h-1zM884 490h1v1h-1zM886 490h2v1h-2zM894 490h1v1h-1zM898 490h1v1h-1zM902 490h1v1h-1zM919 490h1v1h-1zM922 490h1v1h-1zM939 490h1v1h-1zM941 490h1v1h-1zM949 490h1v1h-1zM952 490h1v1h-1zM955 490h1v1h-1zM970 490h1v1h-1zM992 490h1v1h-1zM994 490h1v1h-1zM996 490h1v1h-1zM997 490h1v2h-1zM1007 490h1v1h-1zM1028 490h1v1h-1zM1031 490h1v1h-1zM1046 490h1v1h-1zM1052 490h1v1h-1zM1059 490h1v1h-1zM1061 490h1v1h-1zM1078 490h1v1h-1zM1085 490h2v1h-2zM1089 490h1v2h-1zM1096 490h1v1h-1zM1098 490h2v1h-2zM1104 490h2v1h-2zM1108 490h1v1h-1zM1120 490h1v1h-1zM1124 490h1v1h-1zM1128 490h1v1h-1zM1132 490h1v1h-1zM1146 490h1v1h-1zM1152 490h1v1h-1zM1155 490h1v1h-1zM1157 490h3v1h-3zM1161 490h2v1h-2zM1167 490h1v1h-1zM1181 490h1v1h-1zM1195 490h1v1h-1zM1202 490h1v1h-1zM1205 490h1v1h-1zM1212 490h1v1h-1zM1219 490h1v1h-1zM1226 490h1v1h-1zM1229 490h1v1h-1zM1233 490h2v1h-2zM1237 490h1v1h-1zM1241 490h1v1h-1zM1255 490h3v1h-3zM1285 490h2v1h-2zM1292 490h1v2h-1zM1296 490h1v1h-1zM1298 490h2v1h-2zM1303 490h1v1h-1zM1308 490h1v1h-1zM1320 490h1v1h-1zM1324 490h2v1h-2zM1333 490h2v1h-2zM1336 490h1v1h-1zM1339 490h1v1h-1zM1367 490h1v1h-1zM1373 490h1v1h-1zM1377 490h1v1h-1zM1379 490h1v2h-1zM1381 490h1v1h-1zM1383 490h1v1h-1zM1389 490h1v1h-1zM1393 490h1v1h-1zM1396 490h1v2h-1zM347 466h1V506h-1zM684 479h1V498h-1zM698 472h1V503h-1z"/>
<path d="M277 517H1401V520H277zM287 516h1v1h-1zM310 516h1v1h-1zM334 516h1v1h-1zM343 516h1v1h-1zM357 516h1v1h-1zM374 516h2v1h-2zM376 515h1v2h-1zM377 516h2v1h-2zM387 516h1v1h-1zM399 516h1v1h-1zM410 516h2v1h-2zM412 515h2v2h-2zM414 516h2v1h-2zM454 516h1v1h-1zM467 516h1v1h-1zM505 516h1v1h-1zM515 516h1v1h-1zM522 516h1v1h-1zM525 516h1v1h-1zM542 516h1v1h-1zM544 516h1v1h-1zM605 516h1v1h-1zM626 516h1v1h-1zM669 516h2v1h-2zM682 516h1v1h-1zM688 516h1v1h-1zM701 516h1v1h-1zM765 516h1v1h-1zM783 516h1v1h-1zM790 516h1v1h-1zM869 516h1v1h-1zM878 516h1v1h-1zM936 516h1v1h-1zM952 516h1v1h-1zM970 516h1v1h-1zM972 516h1v1h-1zM1002 516h1v1h-1zM1092 516h1v1h-1zM1103 516h1v1h-1zM1126 516h1v1h-1zM1137 516h1v1h-1zM1155 516h1v1h-1zM1186 516h1v1h-1zM1214 516h1v1h-1zM1260 516h1v1h-1zM1290 516h1v1h-1zM1361 516h1v1h-1zM286 520h1v1h-1zM298 520h1v1h-1zM300 520h1v1h-1zM317 520h1v1h-1zM319 520h1v1h-1zM322 520h1v1h-1zM333 520h2v1h-2zM341 520h1v1h-1zM345 520h1v1h-1zM365 520h1v1h-1zM369 520h1v1h-1zM374 520h2v1h-2zM376 520h1v2h-1zM377 520h2v1h-2zM381 520h1v1h-1zM383 520h1v1h-1zM387 520h1v1h-1zM400 520h1v1h-1zM407 520h5v1h-5zM412 520h2v2h-2zM414 520h2v1h-2zM430 520h1v1h-1zM442 520h1v1h-1zM448 520h3v1h-3zM457 520h1v1h-1zM470 520h1v1h-1zM478 520h1v1h-1zM482 520h1v1h-1zM494 520h1v1h-1zM498 520h1v1h-1zM509 520h1v1h-1zM511 520h1v1h-1zM517 520h1v1h-1zM519 520h1v1h-1zM522 520h1v1h-1zM530 520h1v1h-1zM532 520h1v1h-1zM539 520h1v1h-1zM542 520h1v1h-1zM560 520h1v1h-1zM564 520h1v1h-1zM569 520h1v1h-1zM580 520h1v1h-1zM597 520h3v1h-3zM609 520h1v1h-1zM612 520h1v1h-1zM616 520h1v1h-1zM619 520h1v1h-1zM621 520h1v1h-1zM627 520h1v1h-1zM635 520h1v1h-1zM643 520h1v1h-1zM649 520h1v1h-1zM654 520h1v1h-1zM657 520h1v1h-1zM662 520h2v1h-2zM666 520h1v1h-1zM670 520h2v1h-2zM675 520h2v1h-2zM680 520h1v1h-1zM688 520h1v1h-1zM697 520h1v1h-1zM703 520h2v1h-2zM709 520h1v1h-1zM711 520h1v1h-1zM714 520h1v1h-1zM727 520h1v1h-1zM734 520h1v1h-1zM741 520h1v1h-1zM743 520h1v1h-1zM754 520h1v1h-1zM771 520h1v1h-1zM777 520h1v1h-1zM780 520h1v1h-1zM782 520h2v1h-2zM785 520h1v1h-1zM792 520h1v1h-1zM798 520h1v1h-1zM807 520h1v1h-1zM809 520h1v1h-1zM812 520h1v1h-1zM816 520h1v1h-1zM821 520h2v1h-2zM826 520h1v1h-1zM832 520h2v1h-2zM839 520h2v1h-2zM858 520h1v1h-1zM870 520h1v1h-1zM880 520h1v1h-1zM882 520h1v1h-1zM892 520h1v1h-1zM894 520h3v1h-3zM902 520h1v1h-1zM910 520h1v1h-1zM912 520h1v1h-1zM918 520h1v1h-1zM923 520h1v1h-1zM937 520h1v1h-1zM939 520h1v1h-1zM944 520h1v1h-1zM950 520h1v1h-1zM954 520h1v1h-1zM961 520h1v1h-1zM966 520h1v1h-1zM981 520h1v1h-1zM983 520h1v1h-1zM986 520h1v1h-1zM992 520h1v1h-1zM1011 520h1v1h-1zM1016 520h2v1h-2zM1023 520h1v1h-1zM1035 520h1v1h-1zM1041 520h1v1h-1zM1053 520h1v1h-1zM1055 520h1v1h-1zM1067 520h2v1h-2zM1088 520h1v1h-1zM1091 520h1v1h-1zM1093 520h1v1h-1zM1101 520h1v1h-1zM1115 520h1v1h-1zM1128 520h2v1h-2zM1138 520h3v1h-3zM1152 520h1v1h-1zM1154 520h1v1h-1zM1156 520h1v1h-1zM1159 520h1v1h-1zM1161 520h1v1h-1zM1168 520h1v1h-1zM1171 520h1v1h-1zM1176 520h1v1h-1zM1202 520h1v1h-1zM1209 520h1v1h-1zM1214 520h1v1h-1zM1231 520h1v1h-1zM1236 520h1v1h-1zM1244 520h2v1h-2zM1250 520h1v1h-1zM1264 520h1v1h-1zM1266 520h1v1h-1zM1271 520h1v1h-1zM1273 520h1v1h-1zM1276 520h1v1h-1zM1278 520h1v1h-1zM1284 520h1v1h-1zM1287 520h1v1h-1zM1291 520h1v1h-1zM1307 520h1v1h-1zM1309 520h1v1h-1zM1319 520h1v1h-1zM1325 520h3v1h-3zM1338 520h1v1h-1zM1348 520h1v1h-1zM1351 520h1v1h-1zM1367 520h1v1h-1zM1388 520h1v1h-1zM1392 520h1v1h-1zM1399 520h1v1h-1z"/>
<path d="M277 547H1401V550H277zM277 546h5v1h-5zM283 546h1v1h-1zM285 546h14v1h-14zM301 546h13v1h-13zM315 546h4v1h-4zM320 546h4v1h-4zM325 546h1v1h-1zM330 546h2v1h-2zM333 546h12v1h-12zM346 546h6v1h-6zM353 546h12v1h-12zM366 546h1v1h-1zM368 546h3v1h-3zM372 546h3v1h-3zM376 546h3v1h-3zM380 546h9v1h-9zM390 546h3v1h-3zM394 546h5v1h-5zM401 546h4v1h-4zM408 546h5v1h-5zM414 546h4v1h-4zM419 546h14v1h-14zM434 546h7v1h-7zM443 546h5v1h-5zM449 546h19v1h-19zM470 546h2v1h-2zM474 546h1v1h-1zM476 546h6v1h-6zM484 546h3v1h-3zM488 546h2v1h-2zM491 546h7v1h-7zM499 546h1v1h-1zM501 546h4v1h-4zM506 546h3v1h-3zM510 546h3v1h-3zM514 546h13v1h-13zM528 546h5v1h-5zM534 546h5v1h-5zM540 546h4v1h-4zM545 546h11v1h-11zM558 546h3v1h-3zM563 546h8v1h-8zM572 546h4v1h-4zM577 546h10v1h-10zM588 546h1v1h-1zM590 546h3v1h-3zM595 546h3v1h-3zM599 546h9v1h-9zM608 545h1v2h-1zM609 546h4v1h-4zM614 546h5v1h-5zM620 546h1v1h-1zM623 546h3v1h-3zM627 546h3v1h-3zM631 546h10v1h-10zM642 546h1v1h-1zM644 546h6v1h-6zM651 546h6v1h-6zM658 546h3v1h-3zM662 546h2v1h-2zM664 545h1v2h-1zM665 546h1v1h-1zM667 546h10v1h-10zM678 546h3v1h-3zM682 546h1v1h-1zM684 546h7v1h-7zM691 545h1v2h-1zM692 546h6v1h-6zM699 546h4v1h-4zM704 546h6v1h-6zM711 546h7v1h-7zM719 546h4v1h-4zM724 546h3v1h-3zM728 546h19v1h-19zM749 546h5v1h-5zM755 546h6v1h-6zM761 545h1v2h-1zM762 546h3v1h-3zM766 546h6v1h-6zM773 546h6v1h-6zM781 546h4v1h-4zM786 546h2v1h-2zM789 546h17v1h-17zM807 546h14v1h-14zM822 546h6v1h-6zM828 545h1v2h-1zM829 546h1v1h-1zM830 545h1v2h-1zM831 546h3v1h-3zM835 546h1v1h-1zM837 546h11v1h-11zM848 545h1v2h-1zM849 546h6v1h-6zM856 546h17v1h-17zM874 546h2v1h-2zM878 546h3v1h-3zM882 546h7v1h-7zM890 546h10v1h-10zM901 546h3v1h-3zM905 546h2v1h-2zM909 546h5v1h-5zM915 546h5v1h-5zM921 546h4v1h-4zM926 546h4v1h-4zM931 546h4v1h-4zM936 546h3v1h-3zM940 546h4v1h-4zM945 546h10v1h-10zM956 546h2v1h-2zM959 546h7v1h-7zM967 545h1v2h-1zM968 546h18v1h-18zM987 546h5v1h-5zM993 546h5v1h-5zM999 546h7v1h-7zM1007 546h2v1h-2zM1010 546h8v1h-8zM1019 546h1v1h-1zM1020 545h1v2h-1zM1021 546h11v1h-11zM1033 546h3v1h-3zM1037 546h3v1h-3zM1040 545h2v2h-2zM1042 546h6v1h-6zM1049 546h2v1h-2zM1052 546h3v1h-3zM1056 546h11v1h-11zM1067 545h1v2h-1zM1068 546h10v1h-10zM1079 546h8v1h-8zM1088 546h7v1h-7zM1096 546h2v1h-2zM1099 546h3v1h-3zM1103 546h3v1h-3zM1107 546h6v1h-6zM1114 546h1v1h-1zM1119 546h9v1h-9zM1129 546h3v1h-3zM1132 545h1v2h-1zM1133 546h3v1h-3zM1137 546h5v1h-5zM1143 546h5v1h-5zM1149 546h19v1h-19zM1169 546h23v1h-23zM1192 545h1v2h-1zM1193 546h2v1h-2zM1197 546h6v1h-6zM1204 546h3v1h-3zM1209 546h6v1h-6zM1216 546h4v1h-4zM1221 546h1v1h-1zM1223 546h1v1h-1zM1225 546h2v1h-2zM1228 546h3v1h-3zM1232 546h1v1h-1zM1234 546h5v1h-5zM1240 546h1v1h-1zM1242 546h5v1h-5zM1249 546h3v1h-3zM1253 546h2v1h-2zM1256 546h3v1h-3zM1260 546h2v1h-2zM1263 546h3v1h-3zM1266 545h1v2h-1zM1267 546h5v1h-5zM1272 545h1v2h-1zM1274 546h5v1h-5zM1280 546h14v1h-14zM1296 546h16v1h-16zM1313 546h10v1h-10zM1324 546h1v1h-1zM1326 546h4v1h-4zM1331 546h4v1h-4zM1336 546h14v1h-14zM1351 546h19v1h-19zM1371 546h10v1h-10zM1382 546h4v1h-4zM1387 546h4v1h-4zM1391 545h1v2h-1zM1392 546h9v1h-9zM280 550h1v1h-1zM290 550h1v1h-1zM293 550h2v1h-2zM298 550h1v1h-1zM300 550h3v1h-3zM312 550h1v1h-1zM315 550h1v2h-1zM318 550h2v1h-2zM323 550h1v1h-1zM326 550h1v1h-1zM334 550h1v1h-1zM346 550h3v1h-3zM354 550h1v1h-1zM358 550h4v1h-4zM364 550h1v1h-1zM371 550h2v1h-2zM374 550h1v1h-1zM382 550h1v1h-1zM388 550h1v1h-1zM392 550h1v1h-1zM394 550h1v1h-1zM400 550h3v1h-3zM404 550h1v1h-1zM406 550h1v1h-1zM408 550h1v1h-1zM410 550h1v1h-1zM420 550h2v1h-2zM427 550h1v2h-1zM430 550h2v1h-2zM433 550h1v1h-1zM436 550h2v1h-2zM445 550h1v1h-1zM451 550h2v1h-2zM455 550h2v1h-2zM464 550h1v1h-1zM467 550h1v1h-1zM472 550h1v1h-1zM476 550h2v1h-2zM480 550h1v2h-1zM481 550h2v1h-2zM484 550h1v1h-1zM487 550h1v1h-1zM495 550h2v1h-2zM497 550h1v2h-1zM498 550h3v1h-3zM504 550h1v1h-1zM508 550h1v1h-1zM510 550h3v1h-3zM516 550h2v1h-2zM526 550h1v1h-1zM532 550h2v1h-2zM536 550h2v1h-2zM542 550h1v1h-1zM547 550h2v1h-2zM550 550h1v1h-1zM555 550h3v1h-3zM559 550h1v1h-1zM561 550h3v1h-3zM564 550h1v2h-1zM567 550h1v1h-1zM569 550h1v1h-1zM571 550h1v1h-1zM573 550h1v1h-1zM581 550h1v1h-1zM585 550h1v2h-1zM590 550h2v1h-2zM597 550h1v1h-1zM602 550h1v1h-1zM605 550h1v1h-1zM615 550h1v1h-1zM617 550h1v1h-1zM619 550h1v1h-1zM620 550h2v2h-2zM636 550h2v1h-2zM642 550h1v1h-1zM644 550h1v1h-1zM647 550h1v1h-1zM650 550h1v1h-1zM652 550h1v1h-1zM655 550h1v2h-1zM661 550h1v1h-1zM663 550h1v1h-1zM666 550h3v1h-3zM672 550h1v1h-1zM674 550h1v1h-1zM677 550h2v1h-2zM680 550h1v1h-1zM682 550h2v1h-2zM689 550h1v1h-1zM690 550h1v2h-1zM691 550h1v1h-1zM692 550h1v2h-1zM694 550h1v1h-1zM698 550h1v1h-1zM706 550h1v1h-1zM708 550h1v1h-1zM709 550h1v2h-1zM717 550h1v1h-1zM719 550h2v1h-2zM726 550h2v1h-2zM730 550h1v2h-1zM737 550h1v1h-1zM739 550h1v1h-1zM743 550h1v1h-1zM752 550h3v1h-3zM757 550h2v1h-2zM760 550h2v1h-2zM764 550h1v1h-1zM771 550h1v1h-1zM773 550h1v1h-1zM776 550h1v1h-1zM777 550h1v2h-1zM780 550h1v1h-1zM784 550h1v1h-1zM787 550h1v1h-1zM790 550h1v1h-1zM800 550h1v1h-1zM803 550h1v1h-1zM805 550h2v1h-2zM810 550h2v1h-2zM815 550h1v1h-1zM818 550h1v1h-1zM820 550h1v1h-1zM823 550h1v1h-1zM825 550h1v1h-1zM830 550h2v1h-2zM838 550h1v1h-1zM845 550h1v1h-1zM848 550h2v1h-2zM859 550h4v1h-4zM866 550h1v1h-1zM869 550h2v1h-2zM877 550h1v1h-1zM882 550h1v1h-1zM886 550h3v1h-3zM897 550h1v1h-1zM899 550h1v1h-1zM901 550h1v2h-1zM902 550h1v1h-1zM904 550h2v1h-2zM907 550h1v1h-1zM909 550h1v1h-1zM916 550h1v1h-1zM921 550h1v1h-1zM923 550h1v1h-1zM925 550h1v1h-1zM928 550h1v1h-1zM932 550h2v1h-2zM936 550h1v1h-1zM941 550h1v1h-1zM943 550h1v1h-1zM948 550h1v2h-1zM951 550h1v1h-1zM963 550h1v1h-1zM966 550h1v1h-1zM969 550h1v1h-1zM972 550h2v1h-2zM977 550h1v1h-1zM981 550h1v2h-1zM982 550h2v1h-2zM985 550h3v1h-3zM990 550h1v1h-1zM992 550h1v1h-1zM995 550h1v1h-1zM997 550h1v1h-1zM1000 550h2v1h-2zM1003 550h1v1h-1zM1010 550h2v1h-2zM1014 550h1v1h-1zM1016 550h1v1h-1zM1018 550h3v1h-3zM1023 550h1v1h-1zM1025 550h1v1h-1zM1031 550h1v2h-1zM1032 550h1v1h-1zM1041 550h1v1h-1zM1045 550h1v1h-1zM1051 550h1v1h-1zM1053 550h2v1h-2zM1058 550h2v1h-2zM1061 550h1v1h-1zM1068 550h1v1h-1zM1070 550h1v1h-1zM1074 550h1v1h-1zM1076 550h1v1h-1zM1079 550h1v1h-1zM1081 550h1v1h-1zM1084 550h1v1h-1zM1086 550h1v2h-1zM1092 550h3v1h-3zM1098 550h1v2h-1zM1103 550h3v1h-3zM1112 550h2v1h-2zM1115 550h1v1h-1zM1117 550h1v1h-1zM1132 550h1v1h-1zM1135 550h1v1h-1zM1136 550h1v2h-1zM1142 550h1v1h-1zM1145 550h1v1h-1zM1149 550h1v1h-1zM1155 550h2v1h-2zM1158 550h2v1h-2zM1164 550h1v1h-1zM1169 550h1v1h-1zM1172 550h1v1h-1zM1177 550h1v1h-1zM1179 550h1v1h-1zM1183 550h1v1h-1zM1185 550h1v1h-1zM1186 550h1v2h-1zM1187 550h2v1h-2zM1191 550h1v1h-1zM1202 550h1v1h-1zM1211 550h1v2h-1zM1217 550h1v1h-1zM1219 550h1v1h-1zM1228 550h1v1h-1zM1231 550h1v1h-1zM1235 550h2v1h-2zM1240 550h1v1h-1zM1245 550h1v1h-1zM1246 550h1v2h-1zM1250 550h1v1h-1zM1252 550h2v1h-2zM1259 550h2v1h-2zM1266 550h2v1h-2zM1270 550h1v1h-1zM1272 550h1v1h-1zM1274 550h3v1h-3zM1280 550h1v1h-1zM1284 550h1v1h-1zM1286 550h3v1h-3zM1291 550h4v1h-4zM1299 550h1v2h-1zM1302 550h1v2h-1zM1304 550h3v1h-3zM1308 550h1v1h-1zM1310 550h1v1h-1zM1315 550h1v1h-1zM1318 550h1v1h-1zM1320 550h1v1h-1zM1327 550h1v1h-1zM1329 550h1v1h-1zM1333 550h1v1h-1zM1340 550h2v1h-2zM1346 550h1v1h-1zM1351 550h1v1h-1zM1366 550h1v1h-1zM1368 550h1v1h-1zM1377 550h2v1h-2zM1380 550h1v1h-1zM1382 550h2v1h-2zM1389 550h2v1h-2zM1392 550h2v1h-2zM1394 550h1v2h-1zM1395 550h2v1h-2zM1399 550h1v1h-1zM688 540h1V561h-1z"/>
<path d="M277 578H1401V581H277zM278 577h5v1h-5zM284 577h4v1h-4zM289 577h8v1h-8zM298 577h2v1h-2zM301 577h2v1h-2zM304 577h24v1h-24zM329 577h3v1h-3zM335 577h2v1h-2zM338 577h3v1h-3zM342 577h1v1h-1zM344 577h6v1h-6zM352 577h4v1h-4zM358 577h2v1h-2zM361 577h5v1h-5zM367 577h1v1h-1zM370 577h7v1h-7zM378 577h9v1h-9zM388 577h4v1h-4zM393 577h15v1h-15zM409 577h12v1h-12zM422 577h1v1h-1zM424 577h1v1h-1zM427 577h5v1h-5zM433 577h4v1h-4zM438 577h8v1h-8zM447 577h7v1h-7zM455 577h3v1h-3zM459 577h3v1h-3zM464 577h2v1h-2zM467 577h4v1h-4zM472 577h14v1h-14zM488 577h3v1h-3zM492 577h4v1h-4zM498 577h1v1h-1zM500 577h3v1h-3zM504 577h5v1h-5zM513 577h8v1h-8zM522 577h3v1h-3zM528 577h1v1h-1zM530 577h5v1h-5zM536 577h3v1h-3zM540 577h4v1h-4zM548 577h8v1h-8zM558 577h20v1h-20zM580 577h8v1h-8zM590 577h1v1h-1zM592 577h3v1h-3zM596 577h2v1h-2zM599 577h2v1h-2zM602 577h2v1h-2zM605 577h1v1h-1zM607 577h1v1h-1zM609 577h1v1h-1zM614 577h6v1h-6zM621 577h5v1h-5zM628 577h6v1h-6zM635 577h2v1h-2zM638 577h4v1h-4zM644 577h2v1h-2zM647 577h6v1h-6zM654 577h6v1h-6zM661 577h3v1h-3zM666 577h3v1h-3zM670 577h4v1h-4zM675 577h12v1h-12zM688 577h3v1h-3zM692 577h1v1h-1zM694 577h8v1h-8zM703 577h1v1h-1zM705 577h5v1h-5zM711 577h4v1h-4zM717 577h3v1h-3zM721 577h2v1h-2zM725 577h7v1h-7zM734 577h16v1h-16zM751 577h1v1h-1zM754 577h7v1h-7zM762 577h10v1h-10zM773 577h2v1h-2zM778 577h2v1h-2zM781 577h1v1h-1zM783 577h1v1h-1zM785 577h4v1h-4zM790 577h5v1h-5zM797 577h3v1h-3zM801 577h8v1h-8zM810 577h5v1h-5zM816 577h13v1h-13zM832 577h2v1h-2zM835 577h1v1h-1zM838 577h7v1h-7zM846 577h4v1h-4zM851 577h1v1h-1zM854 577h1v1h-1zM858 577h4v1h-4zM864 577h12v1h-12zM878 577h6v1h-6zM885 577h1v1h-1zM887 577h4v1h-4zM891 576h1v2h-1zM892 577h4v1h-4zM897 577h9v1h-9zM907 577h1v1h-1zM909 577h1v1h-1zM911 577h3v1h-3zM915 577h2v1h-2zM918 577h8v1h-8zM928 577h6v1h-6zM935 577h13v1h-13zM949 577h4v1h-4zM953 576h1v2h-1zM954 577h5v1h-5zM960 577h8v1h-8zM969 577h5v1h-5zM976 577h1v1h-1zM978 577h8v1h-8zM987 577h5v1h-5zM993 577h6v1h-6zM1002 577h14v1h-14zM1017 577h5v1h-5zM1023 577h5v1h-5zM1030 577h8v1h-8zM1039 577h3v1h-3zM1044 577h3v1h-3zM1048 577h4v1h-4zM1053 577h6v1h-6zM1060 577h2v1h-2zM1063 577h1v1h-1zM1065 577h9v1h-9zM1075 577h1v1h-1zM1077 577h2v1h-2zM1081 577h8v1h-8zM1090 577h1v1h-1zM1092 577h2v1h-2zM1095 577h3v1h-3zM1099 577h2v1h-2zM1102 577h5v1h-5zM1108 577h3v1h-3zM1115 577h11v1h-11zM1127 577h1v1h-1zM1129 577h8v1h-8zM1138 577h1v1h-1zM1140 577h2v1h-2zM1143 577h1v1h-1zM1145 577h3v1h-3zM1150 577h7v1h-7zM1158 577h10v1h-10zM1169 577h2v1h-2zM1173 577h6v1h-6zM1180 577h1v1h-1zM1182 577h6v1h-6zM1189 577h11v1h-11zM1201 577h1v1h-1zM1205 577h1v1h-1zM1207 577h1v1h-1zM1209 577h4v1h-4zM1214 577h3v1h-3zM1218 577h5v1h-5zM1224 577h3v1h-3zM1228 577h1v1h-1zM1231 577h1v1h-1zM1234 577h2v1h-2zM1237 577h1v1h-1zM1240 577h13v1h-13zM1254 577h1v1h-1zM1256 577h1v1h-1zM1259 577h5v1h-5zM1265 577h3v1h-3zM1269 577h2v1h-2zM1272 577h2v1h-2zM1275 577h10v1h-10zM1286 577h3v1h-3zM1290 577h1v1h-1zM1292 577h4v1h-4zM1297 577h2v1h-2zM1301 577h2v1h-2zM1307 577h2v1h-2zM1310 577h6v1h-6zM1318 577h3v1h-3zM1322 577h5v1h-5zM1329 577h4v1h-4zM1335 577h3v1h-3zM1339 577h1v1h-1zM1341 577h8v1h-8zM1350 577h1v1h-1zM1352 577h6v1h-6zM1359 577h1v1h-1zM1362 577h6v1h-6zM1370 577h4v1h-4zM1377 577h1v1h-1zM1379 577h4v1h-4zM1384 577h1v1h-1zM1386 577h4v1h-4zM1391 577h5v1h-5zM1397 577h4v1h-4zM282 581h1v1h-1zM285 581h1v1h-1zM288 581h1v1h-1zM292 581h1v1h-1zM301 581h1v1h-1zM313 581h1v1h-1zM318 581h1v1h-1zM333 581h2v1h-2zM336 581h1v1h-1zM338 581h1v1h-1zM344 581h1v1h-1zM347 581h1v1h-1zM353 581h1v1h-1zM371 581h1v1h-1zM381 581h1v1h-1zM392 581h1v1h-1zM398 581h2v1h-2zM403 581h1v1h-1zM406 581h2v1h-2zM423 581h1v1h-1zM429 581h1v1h-1zM431 581h1v1h-1zM433 581h1v1h-1zM435 581h1v1h-1zM439 581h1v2h-1zM440 581h1v1h-1zM443 581h1v1h-1zM445 581h1v1h-1zM448 581h1v1h-1zM453 581h1v1h-1zM467 581h2v1h-2zM470 581h1v1h-1zM484 581h1v1h-1zM488 581h1v1h-1zM493 581h2v1h-2zM496 581h1v1h-1zM502 581h1v1h-1zM504 581h1v1h-1zM507 581h2v1h-2zM514 581h1v1h-1zM555 581h1v1h-1zM559 581h1v1h-1zM567 581h1v1h-1zM574 581h1v1h-1zM594 581h1v1h-1zM596 581h2v1h-2zM604 581h1v1h-1zM614 581h2v1h-2zM617 581h2v1h-2zM622 581h1v1h-1zM624 581h1v1h-1zM632 581h1v1h-1zM634 581h1v1h-1zM644 581h1v1h-1zM668 581h1v1h-1zM674 581h1v1h-1zM678 581h1v1h-1zM686 581h1v1h-1zM696 581h1v2h-1zM701 581h1v1h-1zM705 581h1v1h-1zM718 581h3v1h-3zM726 581h1v1h-1zM728 581h1v2h-1zM734 581h1v1h-1zM739 581h1v1h-1zM747 581h1v2h-1zM750 581h2v1h-2zM754 581h1v1h-1zM763 581h3v1h-3zM767 581h1v1h-1zM788 581h1v1h-1zM798 581h1v1h-1zM805 581h1v1h-1zM817 581h1v1h-1zM820 581h1v2h-1zM825 581h1v1h-1zM837 581h2v1h-2zM841 581h1v1h-1zM847 581h2v1h-2zM856 581h2v1h-2zM862 581h1v1h-1zM882 581h1v1h-1zM887 581h1v1h-1zM889 581h1v2h-1zM892 581h1v2h-1zM898 581h1v1h-1zM903 581h1v1h-1zM911 581h1v1h-1zM914 581h2v1h-2zM922 581h1v1h-1zM926 581h2v1h-2zM932 581h1v1h-1zM941 581h1v1h-1zM954 581h1v1h-1zM960 581h1v1h-1zM979 581h1v1h-1zM984 581h1v1h-1zM989 581h1v1h-1zM996 581h1v1h-1zM998 581h1v1h-1zM1004 581h1v1h-1zM1012 581h1v2h-1zM1016 581h1v1h-1zM1027 581h1v1h-1zM1038 581h1v1h-1zM1042 581h1v1h-1zM1050 581h1v1h-1zM1052 581h1v1h-1zM1054 581h1v1h-1zM1056 581h1v1h-1zM1061 581h1v1h-1zM1121 581h1v1h-1zM1132 581h1v1h-1zM1149 581h1v1h-1zM1163 581h3v1h-3zM1168 581h1v1h-1zM1183 581h1v1h-1zM1195 581h1v1h-1zM1205 581h1v1h-1zM1207 581h1v1h-1zM1215 581h1v1h-1zM1219 581h1v2h-1zM1220 581h2v1h-2zM1229 581h1v1h-1zM1232 581h1v1h-1zM1237 581h1v1h-1zM1239 581h1v1h-1zM1242 581h1v1h-1zM1245 581h2v1h-2zM1250 581h1v1h-1zM1254 581h1v1h-1zM1258 581h1v1h-1zM1261 581h1v1h-1zM1265 581h1v1h-1zM1267 581h1v1h-1zM1270 581h2v1h-2zM1273 581h2v1h-2zM1280 581h1v1h-1zM1294 581h1v1h-1zM1309 581h1v1h-1zM1316 581h1v1h-1zM1333 581h1v1h-1zM1335 581h1v1h-1zM1337 581h1v1h-1zM1341 581h1v1h-1zM1350 581h2v1h-2zM1378 581h1v1h-1zM1382 581h1v1h-1zM1390 581h3v1h-3z"/>
<path d="M277 608H1401V611H277zM280 607h1v1h-1zM301 607h1v1h-1zM313 607h1v1h-1zM323 607h1v1h-1zM333 607h1v1h-1zM349 607h1v1h-1zM371 607h1v1h-1zM377 607h1v1h-1zM382 607h1v1h-1zM395 607h1v1h-1zM401 607h1v1h-1zM404 607h1v1h-1zM409 607h1v1h-1zM413 607h1v1h-1zM421 607h2v1h-2zM436 607h1v1h-1zM453 607h1v1h-1zM458 607h1v1h-1zM460 607h1v1h-1zM466 607h1v1h-1zM468 607h1v1h-1zM473 607h1v1h-1zM488 607h1v1h-1zM491 607h1v1h-1zM498 607h1v1h-1zM537 607h1v1h-1zM542 607h1v1h-1zM545 607h1v1h-1zM551 607h1v1h-1zM553 607h1v1h-1zM558 607h1v1h-1zM560 607h1v1h-1zM569 607h1v1h-1zM573 607h1v1h-1zM577 607h1v1h-1zM587 607h1v1h-1zM593 607h1v1h-1zM598 607h1v1h-1zM603 607h1v1h-1zM610 607h1v1h-1zM614 607h1v1h-1zM630 607h1v1h-1zM634 607h1v1h-1zM644 607h1v1h-1zM649 607h1v1h-1zM668 607h1v1h-1zM672 607h1v1h-1zM714 607h1v1h-1zM721 607h1v1h-1zM728 607h1v1h-1zM736 607h1v1h-1zM756 607h1v1h-1zM764 607h1v1h-1zM768 607h1v1h-1zM784 607h1v1h-1zM787 607h1v1h-1zM803 607h1v1h-1zM820 607h1v1h-1zM829 607h1v1h-1zM834 607h1v1h-1zM851 607h1v1h-1zM854 607h1v1h-1zM863 607h1v1h-1zM867 607h2v1h-2zM873 607h1v1h-1zM879 607h2v1h-2zM903 607h1v1h-1zM909 607h1v1h-1zM911 607h1v1h-1zM930 607h1v1h-1zM955 607h1v1h-1zM959 607h1v1h-1zM964 607h2v1h-2zM975 607h1v1h-1zM977 607h1v1h-1zM1000 607h1v1h-1zM1009 607h1v1h-1zM1032 607h1v1h-1zM1046 607h1v1h-1zM1066 607h1v1h-1zM1070 607h1v1h-1zM1073 607h1v1h-1zM1091 607h1v1h-1zM1096 607h1v1h-1zM1102 607h1v1h-1zM1112 607h1v1h-1zM1121 607h1v1h-1zM1129 607h1v1h-1zM1135 607h1v1h-1zM1142 607h1v1h-1zM1156 607h1v1h-1zM1213 607h1v1h-1zM1224 607h1v1h-1zM1228 607h1v1h-1zM1232 607h1v1h-1zM1240 607h1v1h-1zM1259 607h1v1h-1zM1265 607h1v1h-1zM1308 607h1v1h-1zM1310 607h1v1h-1zM1326 607h1v1h-1zM1331 607h1v1h-1zM1361 607h1v1h-1zM1369 607h2v1h-2zM1375 607h1v1h-1zM1384 607h1v1h-1zM1396 607h1v1h-1zM280 611h1v1h-1zM290 611h1v1h-1zM331 611h1v1h-1zM342 611h1v1h-1zM348 611h1v1h-1zM350 611h1v1h-1zM361 611h1v1h-1zM384 611h1v1h-1zM399 611h1v1h-1zM411 611h1v1h-1zM437 611h1v1h-1zM451 611h1v1h-1zM478 611h1v1h-1zM503 611h1v1h-1zM513 611h1v1h-1zM519 611h1v1h-1zM528 611h1v1h-1zM544 611h1v1h-1zM561 611h1v1h-1zM575 611h1v1h-1zM605 611h1v1h-1zM641 611h1v1h-1zM675 611h1v1h-1zM679 611h1v1h-1zM707 611h1v1h-1zM739 611h1v1h-1zM756 611h1v1h-1zM759 611h2v1h-2zM783 611h1v1h-1zM806 611h1v1h-1zM824 611h1v1h-1zM854 611h1v1h-1zM857 611h1v1h-1zM861 611h1v1h-1zM881 611h1v1h-1zM885 611h1v1h-1zM893 611h1v1h-1zM914 611h1v1h-1zM942 611h1v1h-1zM975 611h1v1h-1zM985 611h1v1h-1zM1022 611h1v1h-1zM1026 611h1v1h-1zM1028 611h1v1h-1zM1098 611h1v1h-1zM1107 611h1v1h-1zM1110 611h1v1h-1zM1126 611h1v1h-1zM1130 611h1v1h-1zM1148 611h1v1h-1zM1194 611h2v1h-2zM1214 611h2v1h-2zM1298 611h2v1h-2zM1323 611h1v1h-1zM1345 611h2v1h-2zM1364 611h1v1h-1zM1397 611h1v1h-1z"/>
<path d="M277 638H1401V641H277zM278 637h1v1h-1zM280 637h3v1h-3zM284 637h1v1h-1zM286 637h10v1h-10zM298 637h6v1h-6zM306 637h2v1h-2zM309 637h3v1h-3zM314 637h9v1h-9zM325 637h1v1h-1zM328 637h7v1h-7zM335 636h1v2h-1zM336 637h3v1h-3zM340 637h1v1h-1zM342 637h7v1h-7zM351 637h3v1h-3zM356 637h16v1h-16zM373 637h1v1h-1zM375 637h1v1h-1zM377 637h4v1h-4zM383 637h1v1h-1zM385 637h3v1h-3zM389 637h2v1h-2zM393 637h3v1h-3zM397 637h3v1h-3zM401 637h9v1h-9zM411 637h3v1h-3zM415 637h8v1h-8zM424 637h2v1h-2zM427 637h2v1h-2zM430 637h7v1h-7zM438 637h2v1h-2zM441 637h2v1h-2zM444 637h7v1h-7zM452 637h8v1h-8zM461 637h1v1h-1zM463 637h1v1h-1zM465 637h6v1h-6zM472 637h8v1h-8zM481 637h1v1h-1zM483 637h1v1h-1zM484 636h1v2h-1zM485 637h1v1h-1zM487 637h8v1h-8zM496 637h7v1h-7zM504 637h1v1h-1zM506 637h2v1h-2zM509 637h7v1h-7zM517 637h3v1h-3zM521 637h2v1h-2zM524 637h2v1h-2zM527 637h6v1h-6zM534 637h1v1h-1zM536 637h6v1h-6zM542 636h1v2h-1zM543 637h10v1h-10zM554 637h1v1h-1zM556 637h4v1h-4zM562 637h1v1h-1zM564 637h3v1h-3zM568 637h5v1h-5zM574 637h1v1h-1zM576 637h6v1h-6zM584 637h1v1h-1zM586 637h2v1h-2zM590 637h2v1h-2zM593 637h1v1h-1zM595 637h10v1h-10zM606 637h2v1h-2zM609 637h16v1h-16zM626 637h3v1h-3zM630 637h3v1h-3zM634 636h1v2h-1zM635 637h3v1h-3zM639 637h3v1h-3zM643 637h6v1h-6zM650 637h3v1h-3zM654 637h8v1h-8zM663 636h1v2h-1zM664 637h6v1h-6zM673 637h3v1h-3zM677 637h5v1h-5zM683 637h8v1h-8zM692 637h3v1h-3zM696 637h3v1h-3zM700 637h6v1h-6zM707 637h7v1h-7zM715 637h9v1h-9zM725 637h3v1h-3zM729 637h10v1h-10zM740 637h5v1h-5zM746 637h11v1h-11zM758 637h14v1h-14zM773 637h2v1h-2zM776 637h5v1h-5zM782 637h3v1h-3zM786 637h2v1h-2zM790 637h6v1h-6zM797 637h6v1h-6zM805 637h4v1h-4zM810 637h4v1h-4zM815 637h15v1h-15zM831 637h2v1h-2zM834 637h2v1h-2zM837 637h12v1h-12zM850 637h1v1h-1zM853 637h5v1h-5zM859 637h11v1h-11zM871 637h1v1h-1zM874 637h5v1h-5zM882 637h15v1h-15zM898 637h4v1h-4zM903 637h14v1h-14zM918 637h8v1h-8zM927 637h4v1h-4zM933 637h11v1h-11zM945 637h4v1h-4zM950 637h2v1h-2zM953 636h1v2h-1zM954 637h2v1h-2zM957 637h13v1h-13zM971 637h2v1h-2zM974 637h3v1h-3zM978 637h1v1h-1zM980 637h1v1h-1zM982 637h10v1h-10zM993 637h8v1h-8zM1002 637h10v1h-10zM1012 636h1v2h-1zM1013 637h1v1h-1zM1015 637h18v1h-18zM1037 637h3v1h-3zM1041 637h1v1h-1zM1043 637h1v1h-1zM1046 637h23v1h-23zM1071 637h1v1h-1zM1073 637h3v1h-3zM1077 637h11v1h-11zM1090 637h4v1h-4zM1095 637h3v1h-3zM1101 637h4v1h-4zM1106 637h4v1h-4zM1111 637h4v1h-4zM1116 636h1v2h-1zM1117 637h1v1h-1zM1119 637h3v1h-3zM1123 637h3v1h-3zM1127 637h4v1h-4zM1132 637h8v1h-8zM1141 637h2v1h-2zM1144 637h10v1h-10zM1155 637h9v1h-9zM1165 637h4v1h-4zM1170 637h2v1h-2zM1173 637h1v1h-1zM1176 637h2v1h-2zM1179 637h8v1h-8zM1188 637h10v1h-10zM1199 637h2v1h-2zM1202 637h1v1h-1zM1205 637h1v1h-1zM1207 637h1v1h-1zM1210 637h4v1h-4zM1216 637h3v1h-3zM1220 637h3v1h-3zM1224 637h2v1h-2zM1228 637h2v1h-2zM1232 637h1v1h-1zM1234 637h2v1h-2zM1237 637h6v1h-6zM1245 637h1v1h-1zM1247 637h6v1h-6zM1254 637h1v1h-1zM1256 637h7v1h-7zM1264 637h13v1h-13zM1279 637h11v1h-11zM1293 637h8v1h-8zM1303 637h2v1h-2zM1306 637h1v1h-1zM1308 636h1v2h-1zM1309 637h2v1h-2zM1314 637h6v1h-6zM1321 637h6v1h-6zM1327 636h1v2h-1zM1328 637h1v1h-1zM1330 637h1v1h-1zM1332 637h10v1h-10zM1343 637h5v1h-5zM1349 637h1v1h-1zM1352 637h2v1h-2zM1355 637h5v1h-5zM1361 637h2v1h-2zM1364 637h1v1h-1zM1367 637h10v1h-10zM1380 637h1v1h-1zM1382 637h14v1h-14zM1397 637h4v1h-4zM279 641h1v1h-1zM281 641h1v1h-1zM284 641h1v1h-1zM288 641h1v1h-1zM298 641h1v1h-1zM303 641h2v1h-2zM309 641h1v1h-1zM312 641h1v2h-1zM313 641h1v1h-1zM321 641h1v1h-1zM333 641h1v1h-1zM340 641h1v1h-1zM348 641h1v1h-1zM350 641h1v1h-1zM363 641h1v1h-1zM370 641h1v2h-1zM371 641h1v1h-1zM378 641h1v1h-1zM385 641h1v1h-1zM387 641h1v1h-1zM391 641h2v1h-2zM394 641h1v1h-1zM396 641h1v2h-1zM397 641h1v1h-1zM401 641h2v1h-2zM404 641h1v1h-1zM410 641h1v1h-1zM418 641h1v1h-1zM432 641h1v1h-1zM436 641h3v1h-3zM440 641h1v1h-1zM442 641h1v1h-1zM455 641h1v1h-1zM458 641h1v1h-1zM474 641h1v1h-1zM492 641h2v1h-2zM496 641h1v1h-1zM502 641h1v1h-1zM504 641h1v1h-1zM523 641h2v1h-2zM529 641h2v1h-2zM536 641h1v1h-1zM539 641h1v1h-1zM551 641h1v1h-1zM557 641h1v2h-1zM558 641h2v1h-2zM563 641h1v1h-1zM567 641h1v1h-1zM572 641h1v1h-1zM574 641h1v1h-1zM576 641h1v1h-1zM586 641h1v1h-1zM591 641h1v1h-1zM599 641h1v1h-1zM602 641h1v1h-1zM605 641h2v1h-2zM608 641h1v1h-1zM610 641h1v1h-1zM615 641h1v1h-1zM633 641h1v1h-1zM640 641h1v1h-1zM648 641h1v1h-1zM651 641h1v1h-1zM686 641h2v1h-2zM690 641h1v1h-1zM692 641h1v1h-1zM697 641h1v2h-1zM702 641h1v1h-1zM705 641h1v2h-1zM710 641h1v1h-1zM715 641h1v1h-1zM724 641h1v1h-1zM727 641h1v1h-1zM737 641h2v1h-2zM742 641h1v1h-1zM746 641h1v1h-1zM748 641h1v1h-1zM753 641h1v1h-1zM759 641h2v1h-2zM767 641h1v1h-1zM770 641h1v1h-1zM776 641h1v2h-1zM787 641h1v1h-1zM792 641h1v1h-1zM798 641h1v1h-1zM805 641h1v1h-1zM810 641h1v1h-1zM818 641h1v1h-1zM820 641h1v1h-1zM822 641h1v1h-1zM825 641h1v1h-1zM831 641h1v1h-1zM838 641h2v1h-2zM843 641h4v1h-4zM866 641h1v1h-1zM868 641h2v1h-2zM878 641h2v1h-2zM891 641h1v1h-1zM893 641h1v1h-1zM899 641h2v1h-2zM905 641h1v1h-1zM916 641h1v1h-1zM918 641h1v2h-1zM921 641h1v1h-1zM924 641h1v1h-1zM933 641h1v1h-1zM939 641h1v1h-1zM951 641h2v1h-2zM958 641h1v1h-1zM961 641h1v1h-1zM963 641h1v1h-1zM965 641h1v1h-1zM970 641h2v1h-2zM986 641h1v1h-1zM990 641h2v1h-2zM996 641h2v1h-2zM1000 641h1v1h-1zM1002 641h1v1h-1zM1007 641h1v1h-1zM1010 641h1v1h-1zM1019 641h1v1h-1zM1021 641h1v2h-1zM1022 641h1v1h-1zM1026 641h1v1h-1zM1034 641h1v1h-1zM1042 641h1v2h-1zM1044 641h1v1h-1zM1058 641h1v1h-1zM1068 641h1v1h-1zM1078 641h1v1h-1zM1081 641h1v1h-1zM1088 641h1v1h-1zM1094 641h1v2h-1zM1095 641h2v1h-2zM1099 641h1v1h-1zM1111 641h1v1h-1zM1114 641h2v1h-2zM1128 641h1v1h-1zM1130 641h4v1h-4zM1136 641h1v1h-1zM1143 641h1v1h-1zM1155 641h1v1h-1zM1158 641h1v1h-1zM1160 641h1v1h-1zM1180 641h1v1h-1zM1185 641h1v1h-1zM1187 641h2v1h-2zM1190 641h1v1h-1zM1193 641h1v1h-1zM1195 641h1v1h-1zM1201 641h1v1h-1zM1206 641h2v1h-2zM1216 641h1v1h-1zM1223 641h2v1h-2zM1226 641h1v1h-1zM1228 641h1v1h-1zM1233 641h1v1h-1zM1237 641h1v1h-1zM1240 641h2v1h-2zM1244 641h1v2h-1zM1245 641h1v1h-1zM1249 641h2v1h-2zM1252 641h1v1h-1zM1256 641h1v1h-1zM1259 641h1v1h-1zM1263 641h1v2h-1zM1265 641h1v1h-1zM1269 641h2v1h-2zM1272 641h1v1h-1zM1274 641h2v1h-2zM1277 641h1v1h-1zM1280 641h1v1h-1zM1282 641h1v1h-1zM1289 641h1v1h-1zM1293 641h1v1h-1zM1298 641h1v1h-1zM1302 641h1v1h-1zM1322 641h1v1h-1zM1325 641h1v2h-1zM1337 641h2v1h-2zM1340 641h1v1h-1zM1342 641h1v1h-1zM1345 641h1v1h-1zM1360 641h1v1h-1zM1367 641h2v1h-2zM1376 641h1v1h-1zM1385 641h1v1h-1zM1387 641h1v1h-1zM1392 641h1v1h-1zM1395 641h2v1h-2zM1400 641h1v1h-1z"/>
<path d="M277 669H1401V672H277zM278 668h13v1h-13zM292 668h3v1h-3zM296 668h3v1h-3zM302 668h1v1h-1zM304 668h3v1h-3zM309 668h1v1h-1zM312 668h1v1h-1zM314 668h8v1h-8zM323 668h5v1h-5zM329 668h1v1h-1zM332 668h3v1h-3zM336 668h2v1h-2zM339 668h2v1h-2zM342 668h3v1h-3zM346 668h4v1h-4zM351 668h3v1h-3zM355 668h4v1h-4zM360 668h1v1h-1zM362 668h1v1h-1zM364 668h3v1h-3zM367 667h1v2h-1zM368 668h1v1h-1zM371 668h6v1h-6zM379 668h2v1h-2zM382 668h7v1h-7zM391 668h8v1h-8zM401 668h8v1h-8zM410 668h4v1h-4zM415 668h7v1h-7zM423 668h2v1h-2zM426 668h1v1h-1zM428 668h3v1h-3zM432 668h3v1h-3zM436 668h3v1h-3zM440 668h1v1h-1zM441 667h1v2h-1zM442 668h1v1h-1zM444 668h2v1h-2zM447 668h1v1h-1zM449 668h1v1h-1zM453 668h10v1h-10zM464 668h4v1h-4zM470 668h2v1h-2zM474 668h4v1h-4zM479 668h13v1h-13zM494 668h8v1h-8zM503 668h1v1h-1zM504 667h1v2h-1zM506 668h3v1h-3zM511 668h6v1h-6zM518 668h11v1h-11zM530 668h2v1h-2zM533 668h12v1h-12zM547 668h1v1h-1zM549 668h1v1h-1zM551 668h4v1h-4zM556 668h6v1h-6zM563 668h5v1h-5zM569 668h4v1h-4zM574 668h2v1h-2zM577 668h1v1h-1zM579 668h2v1h-2zM583 668h2v1h-2zM586 668h3v1h-3zM589 667h1v2h-1zM590 668h7v1h-7zM598 668h10v1h-10zM609 668h9v1h-9zM619 668h3v1h-3zM624 668h2v1h-2zM627 668h2v1h-2zM630 668h1v1h-1zM632 668h7v1h-7zM640 668h6v1h-6zM647 668h7v1h-7zM655 668h4v1h-4zM662 668h15v1h-15zM678 668h5v1h-5zM684 668h2v1h-2zM687 668h1v1h-1zM690 668h4v1h-4zM696 668h7v1h-7zM704 668h3v1h-3zM708 668h2v1h-2zM712 668h2v1h-2zM715 668h2v1h-2zM718 668h1v1h-1zM720 668h2v1h-2zM723 668h6v1h-6zM730 668h4v1h-4zM737 668h2v1h-2zM740 668h1v1h-1zM742 668h5v1h-5zM748 668h1v1h-1zM750 668h4v1h-4zM755 668h3v1h-3zM759 668h1v1h-1zM761 668h3v1h-3zM771 668h1v1h-1zM773 668h2v1h-2zM776 668h4v1h-4zM781 668h8v1h-8zM790 668h5v1h-5zM796 668h6v1h-6zM804 668h5v1h-5zM810 668h2v1h-2zM812 667h1v2h-1zM813 668h1v1h-1zM815 668h6v1h-6zM822 668h3v1h-3zM826 668h1v1h-1zM827 667h1v2h-1zM829 668h6v1h-6zM836 668h3v1h-3zM840 668h1v1h-1zM843 668h5v1h-5zM850 668h1v1h-1zM853 668h9v1h-9zM863 668h2v1h-2zM867 668h2v1h-2zM870 668h4v1h-4zM876 668h2v1h-2zM879 668h1v1h-1zM881 668h1v1h-1zM883 668h4v1h-4zM888 668h2v1h-2zM891 668h4v1h-4zM896 668h10v1h-10zM907 668h2v1h-2zM911 668h7v1h-7zM919 668h1v1h-1zM922 668h2v1h-2zM925 668h1v1h-1zM927 668h5v1h-5zM933 668h2v1h-2zM936 668h4v1h-4zM942 668h1v1h-1zM945 668h1v1h-1zM947 668h3v1h-3zM952 668h4v1h-4zM956 667h1v2h-1zM957 668h3v1h-3zM961 668h4v1h-4zM966 668h7v1h-7zM975 668h4v1h-4zM980 668h3v1h-3zM984 668h3v1h-3zM989 668h1v1h-1zM991 668h1v1h-1zM993 668h3v1h-3zM997 668h11v1h-11zM1010 668h2v1h-2zM1012 667h1v2h-1zM1013 668h1v1h-1zM1015 668h5v1h-5zM1021 668h1v1h-1zM1023 668h3v1h-3zM1026 667h1v2h-1zM1027 668h6v1h-6zM1034 668h9v1h-9zM1045 668h1v1h-1zM1047 668h2v1h-2zM1051 668h6v1h-6zM1058 668h1v1h-1zM1060 668h5v1h-5zM1067 668h2v1h-2zM1070 668h2v1h-2zM1073 668h2v1h-2zM1076 668h11v1h-11zM1088 668h3v1h-3zM1092 668h3v1h-3zM1097 668h8v1h-8zM1106 668h1v1h-1zM1108 668h3v1h-3zM1112 668h4v1h-4zM1117 668h11v1h-11zM1131 668h6v1h-6zM1140 668h10v1h-10zM1151 668h7v1h-7zM1161 668h3v1h-3zM1167 668h5v1h-5zM1174 668h1v1h-1zM1176 668h10v1h-10zM1187 668h1v1h-1zM1189 668h1v1h-1zM1191 668h4v1h-4zM1196 668h2v1h-2zM1198 667h1v2h-1zM1199 668h2v1h-2zM1202 668h8v1h-8zM1211 668h2v1h-2zM1214 668h3v1h-3zM1218 668h6v1h-6zM1225 668h5v1h-5zM1233 668h5v1h-5zM1239 668h2v1h-2zM1243 668h1v1h-1zM1245 668h1v1h-1zM1247 668h7v1h-7zM1255 668h1v1h-1zM1258 668h3v1h-3zM1262 668h3v1h-3zM1266 668h1v1h-1zM1268 668h2v1h-2zM1272 668h2v1h-2zM1275 668h2v1h-2zM1278 668h1v1h-1zM1281 668h1v1h-1zM1283 668h2v1h-2zM1286 668h2v1h-2zM1290 668h3v1h-3zM1294 668h2v1h-2zM1298 668h8v1h-8zM1308 668h7v1h-7zM1316 668h3v1h-3zM1321 668h3v1h-3zM1325 668h2v1h-2zM1328 668h3v1h-3zM1333 668h1v1h-1zM1335 668h2v1h-2zM1340 668h9v1h-9zM1351 668h6v1h-6zM1358 668h3v1h-3zM1363 668h3v1h-3zM1367 668h2v1h-2zM1370 668h5v1h-5zM1377 668h4v1h-4zM1382 668h4v1h-4zM1387 668h1v1h-1zM1390 668h8v1h-8zM1399 668h1v1h-1zM278 672h1v1h-1zM281 672h2v1h-2zM283 672h1v2h-1zM310 672h1v1h-1zM320 672h1v1h-1zM324 672h1v1h-1zM327 672h1v1h-1zM329 672h1v1h-1zM332 672h1v1h-1zM335 672h1v1h-1zM338 672h2v1h-2zM341 672h1v1h-1zM346 672h1v2h-1zM348 672h1v1h-1zM350 672h1v1h-1zM352 672h1v1h-1zM356 672h1v1h-1zM361 672h1v1h-1zM382 672h1v1h-1zM390 672h1v1h-1zM392 672h2v1h-2zM401 672h1v1h-1zM403 672h2v1h-2zM406 672h1v1h-1zM409 672h1v1h-1zM411 672h2v1h-2zM414 672h2v1h-2zM418 672h2v1h-2zM425 672h2v1h-2zM429 672h2v1h-2zM432 672h1v1h-1zM444 672h2v1h-2zM447 672h1v1h-1zM456 672h1v1h-1zM459 672h1v1h-1zM463 672h1v1h-1zM465 672h2v1h-2zM480 672h3v1h-3zM492 672h2v1h-2zM496 672h1v1h-1zM497 672h1v2h-1zM501 672h1v1h-1zM506 672h1v1h-1zM509 672h2v1h-2zM514 672h1v1h-1zM525 672h1v1h-1zM527 672h1v1h-1zM531 672h1v1h-1zM534 672h1v1h-1zM537 672h1v1h-1zM543 672h1v1h-1zM555 672h2v1h-2zM558 672h1v1h-1zM566 672h2v1h-2zM574 672h2v1h-2zM578 672h1v1h-1zM581 672h1v1h-1zM585 672h1v1h-1zM588 672h1v1h-1zM592 672h1v1h-1zM595 672h1v1h-1zM604 672h1v2h-1zM605 672h2v1h-2zM613 672h1v1h-1zM615 672h1v1h-1zM620 672h1v1h-1zM625 672h1v1h-1zM631 672h1v1h-1zM635 672h1v1h-1zM639 672h2v1h-2zM643 672h2v1h-2zM655 672h1v2h-1zM656 672h1v1h-1zM657 672h1v2h-1zM662 672h1v1h-1zM665 672h1v1h-1zM667 672h2v1h-2zM672 672h1v1h-1zM680 672h2v1h-2zM684 672h1v1h-1zM693 672h1v1h-1zM696 672h1v1h-1zM698 672h1v1h-1zM702 672h1v1h-1zM713 672h1v1h-1zM715 672h1v1h-1zM721 672h1v1h-1zM753 672h2v1h-2zM762 672h1v1h-1zM780 672h1v1h-1zM784 672h1v1h-1zM790 672h1v1h-1zM795 672h1v1h-1zM797 672h1v1h-1zM800 672h1v1h-1zM808 672h1v2h-1zM809 672h1v1h-1zM814 672h1v1h-1zM830 672h2v1h-2zM833 672h1v1h-1zM835 672h1v1h-1zM842 672h2v1h-2zM847 672h2v1h-2zM852 672h1v1h-1zM854 672h1v1h-1zM856 672h1v1h-1zM862 672h2v1h-2zM866 672h1v2h-1zM874 672h1v1h-1zM877 672h1v1h-1zM881 672h2v1h-2zM885 672h1v2h-1zM886 672h1v1h-1zM894 672h1v1h-1zM915 672h1v1h-1zM918 672h2v1h-2zM923 672h1v1h-1zM928 672h1v1h-1zM936 672h1v1h-1zM938 672h1v2h-1zM942 672h1v1h-1zM947 672h1v1h-1zM952 672h1v1h-1zM955 672h1v1h-1zM961 672h1v1h-1zM966 672h1v1h-1zM970 672h1v1h-1zM985 672h1v1h-1zM987 672h1v1h-1zM1008 672h1v1h-1zM1010 672h1v1h-1zM1023 672h2v1h-2zM1037 672h1v1h-1zM1041 672h1v1h-1zM1047 672h1v1h-1zM1061 672h1v1h-1zM1067 672h1v1h-1zM1070 672h1v1h-1zM1073 672h1v1h-1zM1080 672h1v1h-1zM1088 672h1v1h-1zM1098 672h1v1h-1zM1100 672h1v1h-1zM1105 672h1v1h-1zM1107 672h1v1h-1zM1116 672h1v1h-1zM1118 672h1v1h-1zM1120 672h1v1h-1zM1122 672h2v1h-2zM1148 672h1v1h-1zM1150 672h1v1h-1zM1155 672h1v1h-1zM1157 672h1v1h-1zM1162 672h1v1h-1zM1164 672h1v1h-1zM1168 672h1v1h-1zM1177 672h1v1h-1zM1181 672h1v1h-1zM1184 672h3v1h-3zM1188 672h1v1h-1zM1192 672h1v1h-1zM1196 672h1v2h-1zM1203 672h1v1h-1zM1205 672h2v1h-2zM1209 672h1v1h-1zM1222 672h1v1h-1zM1224 672h2v1h-2zM1251 672h1v1h-1zM1253 672h2v1h-2zM1259 672h1v1h-1zM1261 672h3v1h-3zM1264 672h1v2h-1zM1267 672h1v1h-1zM1272 672h1v1h-1zM1284 672h1v1h-1zM1290 672h1v2h-1zM1292 672h1v1h-1zM1296 672h1v1h-1zM1297 672h1v2h-1zM1303 672h1v1h-1zM1305 672h1v1h-1zM1312 672h1v1h-1zM1319 672h1v1h-1zM1321 672h1v1h-1zM1327 672h1v1h-1zM1333 672h1v1h-1zM1345 672h1v1h-1zM1352 672h2v1h-2zM1366 672h2v1h-2zM1370 672h1v1h-1zM1373 672h1v1h-1zM1376 672h1v1h-1zM1380 672h1v1h-1zM1382 672h1v1h-1zM1394 672h1v2h-1zM1397 672h1v2h-1zM314 658h1V682h-1z"/>
<path d="M277 699H1401V702H277zM279 698h1v1h-1zM302 698h1v1h-1zM306 698h1v1h-1zM332 698h1v1h-1zM347 698h1v1h-1zM360 698h1v1h-1zM379 698h1v1h-1zM437 698h1v1h-1zM444 698h1v1h-1zM450 698h1v1h-1zM465 698h1v1h-1zM485 698h2v1h-2zM503 698h1v1h-1zM520 698h1v1h-1zM526 698h1v1h-1zM530 698h1v1h-1zM606 698h1v1h-1zM617 698h1v1h-1zM637 698h1v1h-1zM661 698h1v1h-1zM675 698h1v1h-1zM704 698h1v1h-1zM706 698h1v1h-1zM713 698h1v1h-1zM728 698h1v1h-1zM745 698h1v1h-1zM753 698h1v1h-1zM761 698h1v1h-1zM775 698h1v1h-1zM792 698h1v1h-1zM803 698h1v1h-1zM846 698h1v1h-1zM871 698h1v1h-1zM885 698h1v1h-1zM902 698h1v1h-1zM910 698h1v1h-1zM913 698h1v1h-1zM930 698h1v1h-1zM962 698h1v1h-1zM987 698h1v1h-1zM997 698h2v1h-2zM1018 698h1v1h-1zM1021 698h1v1h-1zM1069 698h1v1h-1zM1083 698h2v1h-2zM1097 698h1v1h-1zM1110 698h1v1h-1zM1123 698h1v1h-1zM1142 698h1v1h-1zM1148 698h1v1h-1zM1175 698h1v1h-1zM1179 698h1v1h-1zM1181 698h1v1h-1zM1183 698h1v1h-1zM1196 698h1v1h-1zM1204 698h1v1h-1zM1209 698h2v1h-2zM1224 698h1v1h-1zM1231 698h1v1h-1zM1255 698h2v1h-2zM1275 698h1v1h-1zM1291 698h1v1h-1zM1304 698h1v1h-1zM1319 698h1v1h-1zM1333 698h1v1h-1zM1335 698h1v1h-1zM1350 698h1v1h-1zM1363 698h3v1h-3zM280 702h1v1h-1zM285 702h1v1h-1zM322 702h1v1h-1zM336 702h1v1h-1zM363 702h2v1h-2zM477 702h1v1h-1zM497 702h1v1h-1zM556 702h1v1h-1zM560 702h1v1h-1zM572 702h1v1h-1zM575 702h1v1h-1zM602 702h1v1h-1zM607 702h1v1h-1zM619 702h1v1h-1zM668 702h1v1h-1zM680 702h1v1h-1zM729 702h1v1h-1zM736 702h1v1h-1zM777 702h1v1h-1zM785 702h1v1h-1zM803 702h1v1h-1zM834 702h1v1h-1zM859 702h1v1h-1zM867 702h1v1h-1zM872 702h1v1h-1zM874 702h1v1h-1zM915 702h1v1h-1zM952 702h1v1h-1zM980 702h1v1h-1zM1024 702h1v1h-1zM1079 702h1v1h-1zM1084 702h1v1h-1zM1116 702h2v1h-2zM1144 702h1v1h-1zM1175 702h1v1h-1zM1183 702h1v1h-1zM1254 702h1v1h-1zM1314 702h1v1h-1zM1360 702h1v1h-1zM1364 702h1v1h-1zM1391 702h1v1h-1z"/>
<path d="M277 729H1401V732H277zM277 728h1v1h-1zM279 728h2v1h-2zM282 728h5v1h-5zM289 728h18v1h-18zM308 728h9v1h-9zM317 727h1v2h-1zM318 728h7v1h-7zM326 728h5v1h-5zM332 728h4v1h-4zM337 728h8v1h-8zM346 728h3v1h-3zM350 728h3v1h-3zM354 728h23v1h-23zM378 728h26v1h-26zM405 728h1v1h-1zM407 728h5v1h-5zM413 728h24v1h-24zM438 728h16v1h-16zM455 728h5v1h-5zM461 728h13v1h-13zM475 728h20v1h-20zM496 728h2v1h-2zM499 728h16v1h-16zM516 728h3v1h-3zM520 728h3v1h-3zM524 728h11v1h-11zM536 728h7v1h-7zM544 728h3v1h-3zM548 728h5v1h-5zM554 728h10v1h-10zM565 728h4v1h-4zM570 728h9v1h-9zM580 728h1v1h-1zM583 728h9v1h-9zM592 727h1v2h-1zM593 728h15v1h-15zM609 728h11v1h-11zM621 728h3v1h-3zM625 728h30v1h-30zM656 728h9v1h-9zM666 728h2v1h-2zM669 728h3v1h-3zM673 728h3v1h-3zM677 728h6v1h-6zM684 728h2v1h-2zM687 728h4v1h-4zM692 728h3v1h-3zM697 728h9v1h-9zM709 728h10v1h-10zM720 728h11v1h-11zM732 728h4v1h-4zM737 728h5v1h-5zM742 727h1v2h-1zM743 728h16v1h-16zM762 728h2v1h-2zM765 728h2v1h-2zM768 728h8v1h-8zM777 728h7v1h-7zM785 728h15v1h-15zM801 728h19v1h-19zM821 728h8v1h-8zM831 728h5v1h-5zM836 727h2v2h-2zM840 728h13v1h-13zM854 728h9v1h-9zM864 728h11v1h-11zM876 728h1v1h-1zM878 728h4v1h-4zM883 728h19v1h-19zM903 728h10v1h-10zM914 727h1v2h-1zM915 728h19v1h-19zM935 728h6v1h-6zM942 728h3v1h-3zM945 727h1v2h-1zM946 728h4v1h-4zM951 728h2v1h-2zM954 728h4v1h-4zM959 728h5v1h-5zM965 728h17v1h-17zM983 728h8v1h-8zM992 728h1v1h-1zM994 728h18v1h-18zM1013 728h5v1h-5zM1019 728h6v1h-6zM1026 728h12v1h-12zM1039 728h16v1h-16zM1055 727h1v2h-1zM1056 728h14v1h-14zM1071 728h2v1h-2zM1074 728h5v1h-5zM1080 728h5v1h-5zM1086 728h5v1h-5zM1091 727h1v2h-1zM1092 728h6v1h-6zM1099 728h14v1h-14zM1114 728h8v1h-8zM1123 728h2v1h-2zM1126 728h2v1h-2zM1129 728h2v1h-2zM1132 728h1v1h-1zM1134 728h6v1h-6zM1142 728h5v1h-5zM1148 728h4v1h-4zM1153 728h2v1h-2zM1156 728h18v1h-18zM1175 728h1v1h-1zM1177 728h6v1h-6zM1184 728h19v1h-19zM1204 728h2v1h-2zM1207 728h27v1h-27zM1235 728h2v1h-2zM1237 727h1v2h-1zM1238 728h4v1h-4zM1243 728h13v1h-13zM1256 727h1v2h-1zM1257 728h16v1h-16zM1274 728h6v1h-6zM1281 728h1v1h-1zM1282 727h1v2h-1zM1283 728h1v1h-1zM1285 728h7v1h-7zM1293 728h30v1h-30zM1324 728h2v1h-2zM1327 728h26v1h-26zM1353 727h1v2h-1zM1354 728h7v1h-7zM1361 727h1v2h-1zM1363 728h8v1h-8zM1372 728h1v1h-1zM1374 728h3v1h-3zM1378 728h14v1h-14zM1392 727h1v2h-1zM1393 728h6v1h-6zM1400 728h1v1h-1zM289 732h1v1h-1zM291 732h1v1h-1zM293 732h1v1h-1zM295 732h1v1h-1zM309 732h1v1h-1zM312 732h2v1h-2zM320 732h1v1h-1zM327 732h1v1h-1zM329 732h1v1h-1zM334 732h2v1h-2zM337 732h1v1h-1zM339 732h1v1h-1zM342 732h1v1h-1zM347 732h1v1h-1zM350 732h2v1h-2zM354 732h1v1h-1zM359 732h1v2h-1zM364 732h1v1h-1zM375 732h1v1h-1zM379 732h1v1h-1zM385 732h2v1h-2zM389 732h1v1h-1zM396 732h2v1h-2zM399 732h1v1h-1zM405 732h1v1h-1zM407 732h2v1h-2zM410 732h1v1h-1zM412 732h1v1h-1zM414 732h1v1h-1zM421 732h1v1h-1zM423 732h1v1h-1zM429 732h1v1h-1zM432 732h1v2h-1zM446 732h1v1h-1zM450 732h1v1h-1zM453 732h1v1h-1zM457 732h1v1h-1zM461 732h1v1h-1zM463 732h1v1h-1zM466 732h1v2h-1zM477 732h1v1h-1zM488 732h2v1h-2zM494 732h2v1h-2zM501 732h2v1h-2zM506 732h2v1h-2zM509 732h3v1h-3zM520 732h1v1h-1zM523 732h1v1h-1zM528 732h1v1h-1zM530 732h1v1h-1zM533 732h1v1h-1zM536 732h1v1h-1zM554 732h1v1h-1zM557 732h1v1h-1zM560 732h1v1h-1zM563 732h1v1h-1zM577 732h1v1h-1zM579 732h1v1h-1zM599 732h1v1h-1zM603 732h1v1h-1zM606 732h1v1h-1zM608 732h1v1h-1zM611 732h1v1h-1zM616 732h1v1h-1zM619 732h1v2h-1zM625 732h1v1h-1zM632 732h1v2h-1zM638 732h1v1h-1zM653 732h1v1h-1zM657 732h1v1h-1zM659 732h1v1h-1zM665 732h1v1h-1zM667 732h1v1h-1zM677 732h1v1h-1zM679 732h1v1h-1zM681 732h1v1h-1zM685 732h1v1h-1zM689 732h1v1h-1zM696 732h1v1h-1zM698 732h1v1h-1zM700 732h1v1h-1zM702 732h1v1h-1zM705 732h1v1h-1zM707 732h2v1h-2zM716 732h1v1h-1zM723 732h2v1h-2zM730 732h1v1h-1zM738 732h1v1h-1zM741 732h1v1h-1zM745 732h1v1h-1zM747 732h2v1h-2zM753 732h1v1h-1zM756 732h1v1h-1zM760 732h2v1h-2zM766 732h1v1h-1zM769 732h1v1h-1zM773 732h1v2h-1zM774 732h1v1h-1zM777 732h1v1h-1zM779 732h1v1h-1zM782 732h2v1h-2zM787 732h1v1h-1zM800 732h1v1h-1zM806 732h2v1h-2zM809 732h1v1h-1zM813 732h1v1h-1zM820 732h1v1h-1zM824 732h1v1h-1zM831 732h1v1h-1zM838 732h1v1h-1zM844 732h1v1h-1zM851 732h1v1h-1zM854 732h2v1h-2zM859 732h1v1h-1zM866 732h1v1h-1zM870 732h1v1h-1zM879 732h1v1h-1zM881 732h1v1h-1zM883 732h1v1h-1zM894 732h1v1h-1zM897 732h1v1h-1zM908 732h1v1h-1zM919 732h2v1h-2zM923 732h1v1h-1zM941 732h2v1h-2zM945 732h1v1h-1zM954 732h1v1h-1zM956 732h1v1h-1zM960 732h2v1h-2zM969 732h1v1h-1zM987 732h2v1h-2zM992 732h1v1h-1zM996 732h2v1h-2zM1002 732h1v1h-1zM1020 732h1v1h-1zM1030 732h1v1h-1zM1035 732h1v1h-1zM1046 732h1v1h-1zM1056 732h1v1h-1zM1070 732h1v1h-1zM1079 732h1v1h-1zM1083 732h1v1h-1zM1092 732h1v1h-1zM1101 732h1v1h-1zM1103 732h1v1h-1zM1107 732h1v1h-1zM1110 732h1v2h-1zM1111 732h1v1h-1zM1114 732h1v1h-1zM1120 732h2v1h-2zM1127 732h1v1h-1zM1132 732h1v1h-1zM1136 732h2v1h-2zM1140 732h1v1h-1zM1145 732h1v1h-1zM1151 732h1v1h-1zM1153 732h1v1h-1zM1161 732h2v1h-2zM1167 732h1v1h-1zM1185 732h1v1h-1zM1189 732h1v2h-1zM1196 732h1v1h-1zM1199 732h3v1h-3zM1206 732h1v1h-1zM1208 732h1v1h-1zM1210 732h1v1h-1zM1212 732h1v2h-1zM1214 732h1v1h-1zM1221 732h1v1h-1zM1231 732h1v1h-1zM1234 732h1v2h-1zM1241 732h2v1h-2zM1248 732h1v2h-1zM1249 732h1v1h-1zM1263 732h1v1h-1zM1267 732h1v1h-1zM1270 732h1v1h-1zM1272 732h1v1h-1zM1274 732h1v1h-1zM1282 732h2v1h-2zM1286 732h1v1h-1zM1292 732h1v1h-1zM1302 732h2v1h-2zM1307 732h1v1h-1zM1309 732h1v1h-1zM1317 732h1v1h-1zM1327 732h1v1h-1zM1329 732h1v1h-1zM1331 732h1v1h-1zM1342 732h1v1h-1zM1346 732h1v1h-1zM1358 732h1v1h-1zM1369 732h1v1h-1zM1371 732h1v2h-1zM1374 732h1v1h-1zM1387 732h1v1h-1z"/>
<path d="M277 760H1401V763H277zM277 759h1v1h-1zM279 759h11v1h-11zM291 759h2v1h-2zM294 759h3v1h-3zM298 759h5v1h-5zM303 758h1v2h-1zM304 759h4v1h-4zM309 759h8v1h-8zM318 759h1v1h-1zM319 758h1v2h-1zM320 759h2v1h-2zM323 759h2v1h-2zM326 759h5v1h-5zM332 759h9v1h-9zM342 759h6v1h-6zM349 759h5v1h-5zM357 759h3v1h-3zM361 759h3v1h-3zM365 759h3v1h-3zM369 759h1v1h-1zM371 759h7v1h-7zM379 759h2v1h-2zM382 758h1v2h-1zM383 759h1v1h-1zM384 758h1v2h-1zM387 759h2v1h-2zM389 758h1v2h-1zM390 759h5v1h-5zM397 759h2v1h-2zM400 759h2v1h-2zM403 759h7v1h-7zM411 759h2v1h-2zM414 759h2v1h-2zM417 759h10v1h-10zM428 759h4v1h-4zM433 759h17v1h-17zM451 759h6v1h-6zM459 759h4v1h-4zM464 759h3v1h-3zM468 759h6v1h-6zM476 759h3v1h-3zM481 759h5v1h-5zM489 759h7v1h-7zM497 759h4v1h-4zM503 759h2v1h-2zM505 758h1v2h-1zM506 759h4v1h-4zM511 759h7v1h-7zM520 759h3v1h-3zM524 759h2v1h-2zM527 759h2v1h-2zM530 759h7v1h-7zM537 758h1v2h-1zM538 759h3v1h-3zM542 759h9v1h-9zM552 759h7v1h-7zM560 759h5v1h-5zM566 759h12v1h-12zM579 759h11v1h-11zM591 759h5v1h-5zM597 759h3v1h-3zM601 759h2v1h-2zM604 759h1v1h-1zM607 759h2v1h-2zM611 759h1v1h-1zM613 759h1v1h-1zM615 759h6v1h-6zM622 759h11v1h-11zM634 759h6v1h-6zM641 759h5v1h-5zM647 759h16v1h-16zM664 759h4v1h-4zM669 759h1v1h-1zM670 758h1v2h-1zM671 759h1v1h-1zM673 758h1v2h-1zM674 759h8v1h-8zM683 759h5v1h-5zM689 759h1v1h-1zM691 759h6v1h-6zM698 759h4v1h-4zM703 759h1v1h-1zM705 759h10v1h-10zM716 759h8v1h-8zM725 759h7v1h-7zM733 759h3v1h-3zM737 759h3v1h-3zM741 759h4v1h-4zM747 759h4v1h-4zM752 759h1v1h-1zM754 759h1v1h-1zM757 759h3v1h-3zM761 759h4v1h-4zM766 759h7v1h-7zM774 759h4v1h-4zM780 759h4v1h-4zM786 759h3v1h-3zM790 759h9v1h-9zM800 759h1v1h-1zM804 759h4v1h-4zM810 759h2v1h-2zM813 759h5v1h-5zM819 759h5v1h-5zM825 759h1v1h-1zM828 759h1v1h-1zM830 759h1v1h-1zM832 759h2v1h-2zM836 759h1v1h-1zM838 759h12v1h-12zM850 758h1v2h-1zM851 759h2v1h-2zM854 759h3v1h-3zM858 758h1v2h-1zM859 759h10v1h-10zM870 759h2v1h-2zM873 759h2v1h-2zM876 759h3v1h-3zM880 759h8v1h-8zM889 759h4v1h-4zM894 759h6v1h-6zM901 759h4v1h-4zM907 759h6v1h-6zM915 759h9v1h-9zM925 759h3v1h-3zM930 759h4v1h-4zM935 759h1v1h-1zM937 759h1v1h-1zM938 758h1v2h-1zM939 759h3v1h-3zM942 758h1v2h-1zM943 759h2v1h-2zM946 759h1v1h-1zM948 759h4v1h-4zM953 759h1v1h-1zM955 759h2v1h-2zM958 759h3v1h-3zM962 759h3v1h-3zM966 759h2v1h-2zM970 759h2v1h-2zM973 759h3v1h-3zM977 759h5v1h-5zM984 759h3v1h-3zM988 759h1v1h-1zM990 759h15v1h-15zM1007 759h7v1h-7zM1017 759h8v1h-8zM1026 759h4v1h-4zM1031 759h5v1h-5zM1037 759h5v1h-5zM1043 759h4v1h-4zM1049 759h2v1h-2zM1052 759h3v1h-3zM1056 759h5v1h-5zM1062 759h2v1h-2zM1066 759h8v1h-8zM1076 759h2v1h-2zM1079 759h4v1h-4zM1084 759h5v1h-5zM1090 759h3v1h-3zM1093 758h1v2h-1zM1094 759h2v1h-2zM1097 759h2v1h-2zM1100 759h5v1h-5zM1106 759h1v1h-1zM1107 758h1v2h-1zM1108 759h2v1h-2zM1111 759h3v1h-3zM1114 758h1v2h-1zM1117 759h6v1h-6zM1125 759h4v1h-4zM1130 759h3v1h-3zM1133 758h1v2h-1zM1135 759h4v1h-4zM1140 759h2v1h-2zM1143 759h2v1h-2zM1146 759h2v1h-2zM1150 759h4v1h-4zM1155 758h1v2h-1zM1157 759h7v1h-7zM1165 759h7v1h-7zM1173 759h8v1h-8zM1182 759h2v1h-2zM1185 759h4v1h-4zM1190 759h1v1h-1zM1192 759h10v1h-10zM1203 758h1v2h-1zM1204 759h1v1h-1zM1206 759h7v1h-7zM1214 759h13v1h-13zM1228 759h2v1h-2zM1231 759h1v1h-1zM1234 759h3v1h-3zM1238 759h7v1h-7zM1246 759h2v1h-2zM1249 759h8v1h-8zM1258 759h1v1h-1zM1259 758h1v2h-1zM1260 759h5v1h-5zM1266 759h4v1h-4zM1272 759h1v1h-1zM1274 759h2v1h-2zM1277 759h5v1h-5zM1285 759h1v1h-1zM1287 759h5v1h-5zM1294 759h7v1h-7zM1302 759h2v1h-2zM1306 759h3v1h-3zM1310 759h2v1h-2zM1313 759h2v1h-2zM1316 759h4v1h-4zM1322 759h9v1h-9zM1332 759h9v1h-9zM1342 759h5v1h-5zM1347 758h1v2h-1zM1348 759h13v1h-13zM1364 759h3v1h-3zM1367 758h1v2h-1zM1368 759h11v1h-11zM1380 759h5v1h-5zM1386 759h11v1h-11zM1398 759h3v1h-3zM282 763h1v1h-1zM288 763h1v1h-1zM294 763h1v1h-1zM303 763h1v1h-1zM315 763h1v1h-1zM319 763h1v1h-1zM323 763h1v2h-1zM329 763h1v1h-1zM334 763h1v1h-1zM338 763h2v1h-2zM341 763h1v1h-1zM356 763h3v1h-3zM376 763h1v2h-1zM382 763h1v2h-1zM387 763h1v1h-1zM393 763h1v1h-1zM396 763h1v1h-1zM411 763h1v1h-1zM426 763h1v1h-1zM453 763h1v1h-1zM455 763h1v1h-1zM458 763h1v1h-1zM466 763h1v1h-1zM468 763h1v1h-1zM475 763h1v1h-1zM496 763h1v1h-1zM504 763h1v1h-1zM506 763h1v1h-1zM526 763h1v1h-1zM531 763h1v2h-1zM541 763h1v1h-1zM543 763h1v2h-1zM544 763h1v1h-1zM547 763h1v1h-1zM549 763h1v2h-1zM553 763h1v1h-1zM560 763h1v2h-1zM583 763h1v1h-1zM590 763h1v1h-1zM593 763h1v1h-1zM602 763h1v1h-1zM608 763h1v1h-1zM613 763h1v1h-1zM615 763h1v1h-1zM619 763h1v1h-1zM623 763h1v1h-1zM626 763h1v1h-1zM635 763h1v2h-1zM636 763h1v1h-1zM640 763h1v1h-1zM645 763h1v1h-1zM649 763h1v1h-1zM658 763h1v1h-1zM662 763h1v1h-1zM665 763h1v1h-1zM672 763h1v1h-1zM679 763h1v1h-1zM681 763h1v1h-1zM683 763h1v1h-1zM685 763h1v1h-1zM702 763h1v2h-1zM714 763h3v1h-3zM718 763h1v1h-1zM720 763h1v1h-1zM735 763h1v1h-1zM754 763h1v1h-1zM765 763h1v1h-1zM767 763h1v1h-1zM769 763h1v1h-1zM773 763h1v1h-1zM777 763h1v1h-1zM784 763h1v1h-1zM794 763h1v1h-1zM800 763h1v1h-1zM808 763h2v1h-2zM814 763h1v1h-1zM821 763h1v1h-1zM825 763h1v1h-1zM827 763h1v1h-1zM829 763h1v1h-1zM833 763h1v2h-1zM836 763h2v1h-2zM843 763h1v1h-1zM845 763h1v1h-1zM849 763h1v1h-1zM851 763h1v1h-1zM870 763h1v1h-1zM872 763h1v1h-1zM874 763h1v2h-1zM881 763h1v1h-1zM883 763h1v1h-1zM894 763h1v1h-1zM897 763h1v1h-1zM911 763h1v1h-1zM915 763h1v1h-1zM920 763h1v1h-1zM923 763h1v1h-1zM925 763h1v2h-1zM929 763h1v1h-1zM931 763h1v1h-1zM936 763h1v2h-1zM938 763h1v1h-1zM944 763h2v1h-2zM949 763h1v1h-1zM953 763h1v1h-1zM960 763h3v1h-3zM964 763h1v2h-1zM972 763h1v1h-1zM975 763h1v1h-1zM979 763h1v1h-1zM981 763h1v1h-1zM986 763h1v2h-1zM990 763h1v2h-1zM1000 763h1v1h-1zM1010 763h1v1h-1zM1017 763h1v1h-1zM1022 763h1v1h-1zM1025 763h1v1h-1zM1031 763h1v1h-1zM1035 763h1v1h-1zM1039 763h1v1h-1zM1046 763h1v2h-1zM1048 763h2v1h-2zM1056 763h1v1h-1zM1058 763h1v1h-1zM1062 763h2v1h-2zM1068 763h1v1h-1zM1072 763h1v1h-1zM1075 763h1v1h-1zM1082 763h1v1h-1zM1084 763h1v1h-1zM1086 763h1v1h-1zM1098 763h1v1h-1zM1103 763h1v1h-1zM1108 763h1v1h-1zM1110 763h1v1h-1zM1112 763h1v1h-1zM1114 763h1v1h-1zM1116 763h1v1h-1zM1120 763h1v1h-1zM1136 763h1v1h-1zM1139 763h1v1h-1zM1142 763h1v1h-1zM1146 763h1v1h-1zM1153 763h1v1h-1zM1157 763h1v1h-1zM1161 763h1v1h-1zM1166 763h1v1h-1zM1168 763h1v1h-1zM1175 763h1v1h-1zM1181 763h1v1h-1zM1183 763h2v1h-2zM1191 763h1v1h-1zM1194 763h1v1h-1zM1198 763h1v1h-1zM1201 763h1v1h-1zM1205 763h1v1h-1zM1212 763h1v1h-1zM1217 763h1v1h-1zM1219 763h1v1h-1zM1222 763h1v1h-1zM1224 763h1v1h-1zM1232 763h1v1h-1zM1236 763h1v1h-1zM1246 763h2v1h-2zM1254 763h1v2h-1zM1259 763h1v2h-1zM1263 763h1v1h-1zM1265 763h1v1h-1zM1269 763h1v1h-1zM1273 763h1v1h-1zM1288 763h1v1h-1zM1303 763h1v1h-1zM1310 763h1v1h-1zM1312 763h1v2h-1zM1315 763h1v2h-1zM1326 763h2v1h-2zM1339 763h1v1h-1zM1353 763h1v2h-1zM1358 763h1v1h-1zM1367 763h1v1h-1zM1374 763h2v1h-2zM1388 763h1v1h-1zM1390 763h2v1h-2z"/>
<path d="M277 790H1401V793H277zM282 789h1v1h-1zM287 789h1v1h-1zM289 789h1v1h-1zM291 789h1v1h-1zM293 789h1v1h-1zM297 789h2v1h-2zM302 789h2v1h-2zM305 789h1v1h-1zM307 789h3v1h-3zM311 789h2v1h-2zM316 789h1v1h-1zM325 789h2v1h-2zM329 789h1v1h-1zM331 789h2v1h-2zM336 789h4v1h-4zM342 789h1v1h-1zM345 789h1v1h-1zM351 789h1v1h-1zM357 789h3v1h-3zM361 789h1v1h-1zM363 789h1v1h-1zM366 789h1v1h-1zM371 789h2v1h-2zM383 789h1v1h-1zM388 789h1v1h-1zM396 789h2v1h-2zM402 789h2v1h-2zM416 789h1v1h-1zM419 789h1v1h-1zM425 789h1v1h-1zM429 789h1v1h-1zM434 789h1v1h-1zM436 789h1v1h-1zM441 789h1v1h-1zM444 789h2v1h-2zM447 789h3v1h-3zM455 789h1v1h-1zM480 789h2v1h-2zM489 789h1v1h-1zM491 789h2v1h-2zM499 789h1v1h-1zM505 789h1v1h-1zM511 789h1v1h-1zM517 789h1v1h-1zM519 789h2v1h-2zM533 789h1v1h-1zM549 789h1v1h-1zM552 789h1v1h-1zM562 789h1v1h-1zM566 789h4v1h-4zM571 789h2v1h-2zM576 789h1v1h-1zM582 789h5v1h-5zM601 789h1v1h-1zM606 789h2v1h-2zM611 789h1v1h-1zM617 789h1v1h-1zM621 789h1v1h-1zM625 789h1v1h-1zM630 789h1v1h-1zM633 789h1v1h-1zM636 789h1v1h-1zM638 789h1v1h-1zM640 789h1v1h-1zM642 789h1v1h-1zM645 789h2v1h-2zM649 789h1v1h-1zM666 789h2v1h-2zM670 789h2v1h-2zM676 789h1v1h-1zM679 789h1v1h-1zM681 789h1v1h-1zM691 789h1v1h-1zM696 789h1v1h-1zM703 789h1v1h-1zM714 789h1v1h-1zM722 789h1v1h-1zM730 789h2v1h-2zM734 789h2v1h-2zM740 789h1v1h-1zM744 789h1v1h-1zM746 789h1v1h-1zM748 789h1v1h-1zM755 789h1v1h-1zM761 789h2v1h-2zM766 789h1v1h-1zM772 789h1v1h-1zM780 789h1v1h-1zM782 789h2v1h-2zM786 789h1v1h-1zM788 789h1v1h-1zM792 789h1v1h-1zM795 789h1v1h-1zM809 789h1v1h-1zM816 789h1v1h-1zM822 789h1v1h-1zM828 789h1v1h-1zM830 789h1v1h-1zM848 789h1v1h-1zM852 789h1v1h-1zM856 789h1v1h-1zM861 789h1v1h-1zM863 789h3v1h-3zM867 789h1v1h-1zM884 789h1v1h-1zM886 789h1v1h-1zM890 789h2v1h-2zM892 788h6v2h-6zM898 789h3v1h-3zM902 789h1v1h-1zM904 789h1v1h-1zM908 789h1v1h-1zM914 789h1v1h-1zM917 789h2v1h-2zM921 789h1v1h-1zM923 789h2v1h-2zM928 789h1v1h-1zM930 789h2v1h-2zM933 789h2v1h-2zM943 789h1v1h-1zM947 789h1v1h-1zM949 789h1v1h-1zM952 789h2v1h-2zM955 789h3v1h-3zM969 789h2v1h-2zM975 789h2v1h-2zM982 789h1v1h-1zM985 789h1v1h-1zM989 789h1v1h-1zM999 789h1v1h-1zM1004 789h1v1h-1zM1007 789h1v1h-1zM1009 789h2v1h-2zM1014 789h1v1h-1zM1016 789h1v1h-1zM1019 789h1v1h-1zM1023 789h1v1h-1zM1031 789h1v1h-1zM1035 789h1v1h-1zM1047 789h1v1h-1zM1049 789h1v1h-1zM1054 789h2v1h-2zM1059 789h1v1h-1zM1075 789h1v1h-1zM1078 789h1v1h-1zM1085 789h1v1h-1zM1094 789h1v1h-1zM1099 789h2v1h-2zM1104 789h1v1h-1zM1106 789h1v1h-1zM1108 789h1v1h-1zM1114 789h1v1h-1zM1116 789h1v1h-1zM1123 789h1v1h-1zM1126 789h1v1h-1zM1140 789h1v1h-1zM1142 789h1v1h-1zM1153 789h1v1h-1zM1157 789h1v1h-1zM1162 789h1v1h-1zM1168 789h1v1h-1zM1170 789h1v1h-1zM1183 789h5v1h-5zM1197 789h3v1h-3zM1201 789h1v1h-1zM1204 789h1v1h-1zM1211 789h2v1h-2zM1217 789h1v1h-1zM1220 789h2v1h-2zM1223 789h1v1h-1zM1229 789h1v1h-1zM1231 789h1v1h-1zM1233 789h2v1h-2zM1242 789h1v1h-1zM1250 789h2v1h-2zM1255 789h1v1h-1zM1259 789h1v1h-1zM1262 789h1v1h-1zM1265 789h1v1h-1zM1268 789h1v1h-1zM1273 789h1v1h-1zM1276 789h1v1h-1zM1280 789h2v1h-2zM1286 789h1v1h-1zM1288 789h1v1h-1zM1290 789h1v1h-1zM1300 789h1v1h-1zM1306 789h4v1h-4zM1313 789h1v1h-1zM1316 789h1v1h-1zM1319 789h2v1h-2zM1322 789h1v1h-1zM1327 789h1v1h-1zM1329 789h2v1h-2zM1333 789h1v1h-1zM1341 789h3v1h-3zM1345 789h2v1h-2zM1351 789h1v1h-1zM1353 789h1v1h-1zM1356 789h2v1h-2zM1359 789h2v1h-2zM1364 789h1v1h-1zM1366 789h1v1h-1zM1371 789h1v1h-1zM1382 789h1v1h-1zM280 793h1v1h-1zM297 793h1v1h-1zM300 793h2v1h-2zM312 793h1v1h-1zM317 793h1v1h-1zM331 793h2v1h-2zM334 793h1v1h-1zM351 793h1v1h-1zM355 793h1v1h-1zM375 793h2v1h-2zM389 793h1v1h-1zM394 793h1v1h-1zM396 793h1v1h-1zM405 793h1v1h-1zM412 793h1v1h-1zM424 793h1v1h-1zM427 793h1v1h-1zM432 793h1v1h-1zM434 793h1v1h-1zM457 793h1v1h-1zM463 793h1v1h-1zM467 793h1v1h-1zM499 793h1v1h-1zM516 793h2v1h-2zM522 793h1v1h-1zM537 793h1v1h-1zM539 793h1v1h-1zM545 793h1v1h-1zM563 793h1v1h-1zM566 793h1v1h-1zM569 793h1v1h-1zM577 793h1v1h-1zM632 793h1v1h-1zM641 793h1v1h-1zM649 793h1v1h-1zM655 793h1v1h-1zM660 793h1v1h-1zM668 793h1v1h-1zM672 793h1v1h-1zM695 793h1v1h-1zM701 793h1v1h-1zM706 793h1v1h-1zM724 793h1v1h-1zM731 793h1v1h-1zM741 793h1v1h-1zM744 793h1v1h-1zM755 793h2v1h-2zM768 793h1v1h-1zM770 793h1v1h-1zM792 793h3v1h-3zM810 793h1v1h-1zM819 793h2v1h-2zM830 793h1v1h-1zM841 793h1v1h-1zM880 793h1v1h-1zM882 793h1v1h-1zM889 793h3v1h-3zM892 793h6v2h-6zM898 793h2v1h-2zM919 793h1v1h-1zM934 793h1v1h-1zM942 793h1v1h-1zM955 793h1v1h-1zM959 793h1v1h-1zM968 793h1v1h-1zM973 793h1v1h-1zM977 793h1v1h-1zM992 793h1v1h-1zM997 793h1v1h-1zM1027 793h1v1h-1zM1059 793h1v1h-1zM1073 793h1v1h-1zM1080 793h2v1h-2zM1092 793h1v1h-1zM1100 793h1v1h-1zM1102 793h1v1h-1zM1106 793h1v1h-1zM1129 793h1v1h-1zM1144 793h1v1h-1zM1146 793h1v1h-1zM1151 793h1v1h-1zM1157 793h1v1h-1zM1163 793h1v1h-1zM1189 793h1v1h-1zM1192 793h1v1h-1zM1195 793h1v1h-1zM1212 793h1v1h-1zM1222 793h1v1h-1zM1227 793h1v1h-1zM1248 793h1v1h-1zM1258 793h1v1h-1zM1294 793h1v1h-1zM1309 793h1v1h-1zM1312 793h1v1h-1zM1341 793h1v1h-1zM1343 793h1v1h-1zM1352 793h1v1h-1zM1355 793h1v1h-1zM1366 793h1v1h-1zM1381 793h1v1h-1zM1393 793h1v1h-1zM1398 793h1v1h-1zM556 776h1V807h-1z"/>
<path d="M277 820H1401V823H277zM277 819h2v1h-2zM280 819h3v1h-3zM284 819h1v1h-1zM288 819h1v1h-1zM290 819h1v1h-1zM292 819h6v1h-6zM299 819h4v1h-4zM304 819h13v1h-13zM318 819h1v1h-1zM319 818h1v2h-1zM320 819h4v1h-4zM325 819h2v1h-2zM328 819h2v1h-2zM330 818h2v2h-2zM332 819h5v1h-5zM338 819h2v1h-2zM340 818h1v2h-1zM341 819h1v1h-1zM343 819h1v1h-1zM345 819h8v1h-8zM354 819h1v1h-1zM356 819h43v1h-43zM400 819h9v1h-9zM410 819h5v1h-5zM416 819h9v1h-9zM427 819h11v1h-11zM439 819h3v1h-3zM443 819h2v1h-2zM445 818h1v2h-1zM446 819h3v1h-3zM450 819h2v1h-2zM453 819h1v1h-1zM455 819h20v1h-20zM476 819h5v1h-5zM482 819h4v1h-4zM487 819h5v1h-5zM493 819h1v1h-1zM495 819h11v1h-11zM507 819h8v1h-8zM515 818h1v2h-1zM517 819h6v1h-6zM524 819h7v1h-7zM533 819h6v1h-6zM540 819h2v1h-2zM543 819h9v1h-9zM553 819h3v1h-3zM558 819h6v1h-6zM565 819h1v1h-1zM567 819h3v1h-3zM572 819h1v1h-1zM573 818h1v2h-1zM574 819h2v1h-2zM577 819h12v1h-12zM590 819h3v1h-3zM594 819h3v1h-3zM597 818h1v2h-1zM598 819h14v1h-14zM613 819h12v1h-12zM626 819h1v1h-1zM628 819h3v1h-3zM632 819h4v1h-4zM637 819h11v1h-11zM649 819h7v1h-7zM657 819h16v1h-16zM674 819h1v1h-1zM677 819h3v1h-3zM681 819h18v1h-18zM700 819h4v1h-4zM705 819h10v1h-10zM715 818h1v2h-1zM716 819h29v1h-29zM746 819h3v1h-3zM750 819h8v1h-8zM760 819h2v1h-2zM763 819h18v1h-18zM783 819h4v1h-4zM788 819h6v1h-6zM795 819h9v1h-9zM805 819h5v1h-5zM811 819h1v1h-1zM813 819h3v1h-3zM817 819h15v1h-15zM832 818h1v2h-1zM833 819h5v1h-5zM839 819h17v1h-17zM857 819h5v1h-5zM863 819h1v1h-1zM865 819h14v1h-14zM880 819h9v1h-9zM890 819h3v1h-3zM894 819h11v1h-11zM906 819h17v1h-17zM924 819h1v1h-1zM927 819h2v1h-2zM930 819h2v1h-2zM933 819h5v1h-5zM939 819h1v1h-1zM941 819h1v1h-1zM944 819h1v1h-1zM945 818h1v2h-1zM946 819h14v1h-14zM961 819h4v1h-4zM966 819h8v1h-8zM975 819h9v1h-9zM985 819h3v1h-3zM989 819h1v1h-1zM991 819h1v1h-1zM994 819h5v1h-5zM1000 819h3v1h-3zM1003 818h1v2h-1zM1004 819h2v1h-2zM1007 819h7v1h-7zM1015 819h1v1h-1zM1017 819h6v1h-6zM1024 819h5v1h-5zM1030 819h10v1h-10zM1041 819h15v1h-15zM1057 819h5v1h-5zM1063 819h12v1h-12zM1076 819h3v1h-3zM1081 819h1v1h-1zM1082 818h1v2h-1zM1083 819h1v1h-1zM1085 819h10v1h-10zM1098 819h4v1h-4zM1105 819h1v1h-1zM1108 819h1v1h-1zM1110 819h5v1h-5zM1116 819h8v1h-8zM1125 819h6v1h-6zM1132 819h10v1h-10zM1144 819h3v1h-3zM1148 819h5v1h-5zM1155 818h1v2h-1zM1156 819h20v1h-20zM1176 818h1v2h-1zM1177 819h5v1h-5zM1183 819h5v1h-5zM1190 819h3v1h-3zM1195 819h1v1h-1zM1197 819h8v1h-8zM1206 819h1v1h-1zM1208 819h6v1h-6zM1215 819h1v1h-1zM1218 819h24v1h-24zM1243 819h16v1h-16zM1261 819h22v1h-22zM1284 819h5v1h-5zM1290 819h1v1h-1zM1292 819h3v1h-3zM1295 818h1v2h-1zM1296 819h11v1h-11zM1308 819h5v1h-5zM1314 819h1v1h-1zM1317 819h8v1h-8zM1327 819h9v1h-9zM1337 819h6v1h-6zM1344 819h6v1h-6zM1352 819h2v1h-2zM1356 819h14v1h-14zM1371 819h2v1h-2zM1373 818h1v2h-1zM1374 819h5v1h-5zM1380 819h4v1h-4zM1385 819h7v1h-7zM1393 819h6v1h-6zM277 823h2v1h-2zM280 823h1v1h-1zM292 823h1v1h-1zM294 823h1v2h-1zM296 823h1v1h-1zM298 823h2v1h-2zM307 823h1v1h-1zM312 823h1v1h-1zM317 823h1v1h-1zM319 823h1v1h-1zM322 823h1v1h-1zM324 823h1v1h-1zM326 823h1v1h-1zM329 823h1v1h-1zM332 823h1v2h-1zM335 823h1v1h-1zM339 823h1v1h-1zM341 823h1v1h-1zM344 823h2v1h-2zM348 823h1v1h-1zM352 823h3v1h-3zM356 823h3v1h-3zM360 823h1v1h-1zM366 823h3v1h-3zM373 823h1v2h-1zM375 823h2v1h-2zM379 823h1v1h-1zM382 823h2v1h-2zM385 823h2v1h-2zM389 823h1v1h-1zM394 823h1v2h-1zM399 823h2v1h-2zM405 823h1v1h-1zM407 823h1v1h-1zM408 823h1v2h-1zM411 823h1v1h-1zM415 823h2v1h-2zM425 823h1v1h-1zM433 823h1v1h-1zM434 823h1v2h-1zM440 823h1v1h-1zM441 823h1v2h-1zM448 823h1v1h-1zM455 823h1v1h-1zM459 823h2v1h-2zM464 823h2v1h-2zM470 823h1v1h-1zM472 823h1v1h-1zM476 823h1v2h-1zM481 823h1v1h-1zM485 823h1v1h-1zM487 823h1v1h-1zM499 823h1v1h-1zM501 823h1v1h-1zM503 823h1v1h-1zM514 823h1v1h-1zM518 823h6v1h-6zM525 823h2v1h-2zM528 823h1v2h-1zM534 823h2v1h-2zM547 823h1v1h-1zM549 823h2v1h-2zM553 823h2v1h-2zM559 823h1v2h-1zM569 823h1v1h-1zM573 823h1v2h-1zM581 823h1v1h-1zM590 823h1v1h-1zM594 823h1v1h-1zM599 823h2v1h-2zM602 823h1v1h-1zM604 823h1v1h-1zM606 823h1v1h-1zM608 823h1v1h-1zM611 823h2v1h-2zM615 823h1v1h-1zM617 823h1v1h-1zM623 823h1v1h-1zM625 823h1v1h-1zM635 823h1v1h-1zM646 823h1v1h-1zM651 823h1v1h-1zM654 823h1v1h-1zM656 823h1v1h-1zM672 823h3v1h-3zM677 823h1v1h-1zM680 823h1v1h-1zM691 823h3v1h-3zM695 823h1v1h-1zM697 823h1v1h-1zM698 823h1v2h-1zM708 823h1v1h-1zM712 823h1v1h-1zM716 823h4v1h-4zM721 823h2v1h-2zM724 823h1v1h-1zM727 823h1v1h-1zM737 823h1v2h-1zM752 823h1v1h-1zM754 823h5v1h-5zM763 823h1v1h-1zM765 823h1v1h-1zM770 823h1v1h-1zM779 823h1v1h-1zM783 823h1v1h-1zM786 823h2v1h-2zM792 823h1v1h-1zM794 823h1v2h-1zM795 823h1v1h-1zM811 823h1v1h-1zM814 823h3v1h-3zM818 823h1v1h-1zM821 823h3v1h-3zM825 823h1v1h-1zM829 823h1v2h-1zM836 823h1v1h-1zM838 823h1v1h-1zM851 823h1v1h-1zM856 823h2v1h-2zM865 823h1v1h-1zM867 823h1v1h-1zM870 823h1v2h-1zM873 823h1v1h-1zM875 823h2v2h-2zM877 823h1v1h-1zM879 823h2v1h-2zM882 823h1v1h-1zM884 823h1v1h-1zM886 823h1v1h-1zM890 823h1v1h-1zM894 823h3v1h-3zM901 823h1v1h-1zM904 823h1v1h-1zM906 823h1v1h-1zM908 823h2v1h-2zM912 823h1v1h-1zM913 823h1v2h-1zM917 823h1v1h-1zM923 823h1v1h-1zM928 823h1v1h-1zM937 823h1v1h-1zM945 823h1v2h-1zM947 823h1v1h-1zM949 823h2v1h-2zM953 823h2v1h-2zM961 823h1v1h-1zM963 823h1v1h-1zM968 823h1v1h-1zM980 823h1v1h-1zM984 823h3v1h-3zM998 823h1v1h-1zM1001 823h1v1h-1zM1003 823h1v1h-1zM1005 823h1v1h-1zM1021 823h1v1h-1zM1025 823h1v1h-1zM1033 823h1v1h-1zM1037 823h1v2h-1zM1041 823h1v1h-1zM1043 823h3v1h-3zM1048 823h1v1h-1zM1058 823h1v1h-1zM1066 823h2v1h-2zM1070 823h1v1h-1zM1072 823h1v1h-1zM1074 823h1v1h-1zM1078 823h1v1h-1zM1083 823h1v1h-1zM1086 823h1v2h-1zM1087 823h2v1h-2zM1092 823h1v1h-1zM1094 823h1v1h-1zM1100 823h1v1h-1zM1103 823h1v1h-1zM1104 823h1v2h-1zM1108 823h2v1h-2zM1113 823h3v1h-3zM1117 823h1v1h-1zM1118 823h1v2h-1zM1123 823h1v1h-1zM1137 823h1v2h-1zM1139 823h1v1h-1zM1143 823h1v1h-1zM1157 823h1v1h-1zM1161 823h1v1h-1zM1165 823h2v1h-2zM1169 823h1v1h-1zM1174 823h1v1h-1zM1176 823h1v1h-1zM1180 823h3v1h-3zM1184 823h1v1h-1zM1187 823h1v1h-1zM1189 823h1v1h-1zM1192 823h2v1h-2zM1195 823h3v1h-3zM1200 823h2v1h-2zM1203 823h1v1h-1zM1213 823h1v1h-1zM1215 823h1v1h-1zM1220 823h1v1h-1zM1222 823h1v1h-1zM1226 823h1v1h-1zM1228 823h2v1h-2zM1233 823h1v1h-1zM1235 823h1v1h-1zM1242 823h1v2h-1zM1243 823h1v1h-1zM1245 823h1v1h-1zM1248 823h1v1h-1zM1255 823h1v1h-1zM1257 823h2v1h-2zM1261 823h2v1h-2zM1269 823h1v2h-1zM1270 823h2v1h-2zM1273 823h1v1h-1zM1276 823h1v1h-1zM1280 823h3v1h-3zM1285 823h1v1h-1zM1287 823h3v1h-3zM1291 823h1v1h-1zM1294 823h1v1h-1zM1298 823h2v1h-2zM1308 823h1v1h-1zM1317 823h1v1h-1zM1321 823h1v1h-1zM1324 823h1v2h-1zM1327 823h1v1h-1zM1331 823h1v1h-1zM1336 823h1v1h-1zM1338 823h1v1h-1zM1342 823h1v1h-1zM1345 823h2v1h-2zM1348 823h1v1h-1zM1351 823h2v1h-2zM1357 823h1v1h-1zM1367 823h1v1h-1zM1370 823h1v1h-1zM1373 823h1v1h-1zM1376 823h1v1h-1zM1382 823h2v1h-2zM1388 823h1v2h-1zM1391 823h1v1h-1zM1393 823h2v1h-2zM1400 823h1v1h-1zM548 806h1V839h-1zM565 808h1V837h-1z"/>
<path d="M277 851H1401V854H277zM277 850h5v1h-5zM284 850h15v1h-15zM300 850h1v1h-1zM302 850h2v1h-2zM305 850h6v1h-6zM312 850h1v1h-1zM314 850h11v1h-11zM326 850h4v1h-4zM330 849h1v2h-1zM331 850h2v1h-2zM334 850h20v1h-20zM355 850h3v1h-3zM360 850h15v1h-15zM376 850h3v1h-3zM380 850h2v1h-2zM384 850h21v1h-21zM405 849h1v2h-1zM406 850h6v1h-6zM413 850h9v1h-9zM422 849h1v2h-1zM423 850h11v1h-11zM435 850h1v1h-1zM437 850h11v1h-11zM449 850h4v1h-4zM453 849h1v2h-1zM454 850h1v1h-1zM457 850h1v1h-1zM459 850h3v1h-3zM463 850h2v1h-2zM466 850h7v1h-7zM474 850h3v1h-3zM477 849h1v2h-1zM478 850h1v1h-1zM480 850h6v1h-6zM486 848h1v3h-1zM487 849h1v2h-1zM488 850h2v1h-2zM490 848h1v3h-1zM491 850h2v1h-2zM493 849h1v2h-1zM494 850h3v1h-3zM498 849h1v2h-1zM499 850h1v1h-1zM500 849h1v2h-1zM501 850h1v1h-1zM502 849h1v2h-1zM503 848h1v3h-1zM504 850h1v1h-1zM506 849h1v2h-1zM507 850h1v1h-1zM508 849h1v2h-1zM509 850h12v1h-12zM522 850h12v1h-12zM536 850h4v1h-4zM540 849h1v2h-1zM542 850h1v1h-1zM546 850h7v1h-7zM554 850h1v1h-1zM555 849h1v2h-1zM557 850h7v1h-7zM566 850h14v1h-14zM580 849h1v2h-1zM582 850h3v1h-3zM585 849h1v2h-1zM586 850h1v1h-1zM587 849h1v2h-1zM588 850h2v1h-2zM591 850h3v1h-3zM595 850h4v1h-4zM600 850h4v1h-4zM605 850h5v1h-5zM611 849h1v2h-1zM612 850h4v1h-4zM617 850h3v1h-3zM621 850h4v1h-4zM626 850h1v1h-1zM628 850h3v1h-3zM632 850h2v1h-2zM634 849h1v2h-1zM635 850h15v1h-15zM651 850h3v1h-3zM655 850h12v1h-12zM669 850h1v1h-1zM671 850h6v1h-6zM678 850h6v1h-6zM685 850h2v1h-2zM688 850h1v1h-1zM690 850h9v1h-9zM700 850h2v1h-2zM703 850h4v1h-4zM708 850h12v1h-12zM720 849h1v2h-1zM721 850h3v1h-3zM726 850h3v1h-3zM731 850h1v1h-1zM732 849h1v2h-1zM733 850h7v1h-7zM740 849h1v2h-1zM741 850h8v1h-8zM750 850h7v1h-7zM758 850h2v1h-2zM760 849h1v2h-1zM761 850h6v1h-6zM768 850h5v1h-5zM774 850h1v1h-1zM775 849h1v2h-1zM778 850h1v1h-1zM779 849h1v2h-1zM780 850h3v1h-3zM784 850h15v1h-15zM800 850h1v1h-1zM802 850h3v1h-3zM806 850h4v1h-4zM811 850h1v1h-1zM813 850h3v1h-3zM816 849h1v2h-1zM817 850h9v1h-9zM827 850h6v1h-6zM835 850h7v1h-7zM843 850h20v1h-20zM864 850h17v1h-17zM882 850h15v1h-15zM898 850h14v1h-14zM914 850h8v1h-8zM923 850h9v1h-9zM933 850h1v1h-1zM935 850h1v1h-1zM937 850h3v1h-3zM941 850h8v1h-8zM950 850h25v1h-25zM976 850h3v1h-3zM980 850h1v1h-1zM982 850h1v1h-1zM984 850h8v1h-8zM994 849h1v2h-1zM995 850h2v1h-2zM998 850h5v1h-5zM1004 849h1v2h-1zM1006 850h2v1h-2zM1009 850h3v1h-3zM1013 850h9v1h-9zM1023 850h2v1h-2zM1027 849h1v2h-1zM1028 850h5v1h-5zM1034 850h2v1h-2zM1037 850h3v1h-3zM1041 850h1v1h-1zM1043 850h1v1h-1zM1045 850h7v1h-7zM1053 850h6v1h-6zM1060 850h1v1h-1zM1062 850h1v1h-1zM1064 850h2v1h-2zM1068 850h3v1h-3zM1072 850h16v1h-16zM1090 850h1v1h-1zM1093 850h1v1h-1zM1095 850h9v1h-9zM1105 850h1v1h-1zM1106 849h1v2h-1zM1108 850h1v1h-1zM1110 850h2v1h-2zM1113 849h1v2h-1zM1115 850h18v1h-18zM1133 849h1v2h-1zM1134 850h3v1h-3zM1138 850h2v1h-2zM1141 850h2v1h-2zM1144 850h1v1h-1zM1146 850h3v1h-3zM1150 850h1v1h-1zM1154 850h14v1h-14zM1169 850h3v1h-3zM1173 850h7v1h-7zM1180 849h1v2h-1zM1181 850h5v1h-5zM1187 850h8v1h-8zM1196 850h6v1h-6zM1202 849h1v2h-1zM1203 850h4v1h-4zM1208 850h10v1h-10zM1218 849h1v2h-1zM1219 850h13v1h-13zM1233 850h13v1h-13zM1247 850h4v1h-4zM1251 849h1v2h-1zM1253 849h1v2h-1zM1254 850h7v1h-7zM1261 849h1v2h-1zM1262 850h4v1h-4zM1266 849h1v2h-1zM1267 850h3v1h-3zM1271 850h8v1h-8zM1280 850h2v1h-2zM1283 850h1v1h-1zM1284 849h1v2h-1zM1285 850h5v1h-5zM1291 850h9v1h-9zM1300 849h1v2h-1zM1301 850h1v1h-1zM1304 850h2v1h-2zM1307 850h1v1h-1zM1309 850h4v1h-4zM1313 849h1v2h-1zM1315 850h1v1h-1zM1317 850h6v1h-6zM1324 850h3v1h-3zM1329 850h10v1h-10zM1339 849h1v2h-1zM1340 850h3v1h-3zM1343 849h1v2h-1zM1344 850h33v1h-33zM1378 850h1v1h-1zM1380 850h11v1h-11zM1392 850h5v1h-5zM1398 850h3v1h-3zM280 854h1v1h-1zM288 854h1v1h-1zM292 854h1v1h-1zM293 854h1v2h-1zM300 854h1v1h-1zM327 854h1v2h-1zM328 854h1v1h-1zM335 854h1v2h-1zM337 854h1v1h-1zM342 854h1v1h-1zM347 854h1v1h-1zM349 854h1v1h-1zM354 854h1v1h-1zM357 854h1v1h-1zM360 854h1v1h-1zM366 854h3v1h-3zM379 854h1v1h-1zM395 854h1v1h-1zM397 854h1v2h-1zM400 854h1v1h-1zM402 854h1v1h-1zM408 854h1v1h-1zM411 854h1v1h-1zM414 854h1v1h-1zM416 854h3v1h-3zM427 854h1v1h-1zM431 854h1v1h-1zM434 854h1v1h-1zM435 854h1v2h-1zM439 854h1v1h-1zM441 854h1v1h-1zM444 854h1v1h-1zM449 854h1v1h-1zM452 854h1v1h-1zM456 854h1v1h-1zM460 854h1v1h-1zM462 854h1v1h-1zM468 854h1v2h-1zM485 854h1v2h-1zM486 854h1v3h-1zM487 854h1v1h-1zM488 854h2v2h-2zM490 854h2v3h-2zM494 854h1v2h-1zM495 854h1v1h-1zM497 854h1v1h-1zM500 854h1v1h-1zM501 854h1v2h-1zM503 854h1v3h-1zM504 854h1v2h-1zM505 854h1v1h-1zM506 854h1v2h-1zM508 854h1v1h-1zM518 854h1v1h-1zM520 854h1v1h-1zM527 854h1v1h-1zM529 854h1v1h-1zM537 854h1v1h-1zM539 854h1v2h-1zM542 854h1v1h-1zM547 854h1v1h-1zM549 854h2v1h-2zM553 854h1v1h-1zM561 854h1v1h-1zM575 854h3v1h-3zM580 854h1v1h-1zM583 854h1v1h-1zM587 854h2v1h-2zM595 854h1v1h-1zM599 854h1v2h-1zM600 854h2v1h-2zM606 854h1v1h-1zM609 854h1v1h-1zM611 854h1v1h-1zM616 854h1v1h-1zM623 854h1v1h-1zM629 854h1v1h-1zM635 854h2v1h-2zM639 854h1v1h-1zM650 854h2v1h-2zM655 854h1v1h-1zM669 854h2v1h-2zM700 854h1v1h-1zM702 854h1v1h-1zM715 854h1v2h-1zM737 854h1v1h-1zM745 854h1v1h-1zM759 854h1v1h-1zM765 854h2v1h-2zM776 854h1v1h-1zM781 854h1v1h-1zM782 854h1v2h-1zM790 854h1v1h-1zM796 854h1v1h-1zM802 854h1v1h-1zM805 854h1v1h-1zM809 854h1v1h-1zM812 854h1v1h-1zM817 854h1v2h-1zM825 854h1v1h-1zM833 854h1v1h-1zM840 854h1v1h-1zM847 854h1v1h-1zM863 854h1v1h-1zM865 854h2v1h-2zM877 854h1v1h-1zM879 854h1v1h-1zM895 854h1v1h-1zM903 854h1v1h-1zM911 854h2v1h-2zM919 854h1v1h-1zM924 854h1v1h-1zM933 854h1v1h-1zM941 854h1v1h-1zM954 854h1v1h-1zM959 854h2v1h-2zM977 854h1v1h-1zM981 854h1v1h-1zM988 854h1v2h-1zM993 854h1v1h-1zM1038 854h1v1h-1zM1041 854h1v1h-1zM1045 854h1v1h-1zM1048 854h1v1h-1zM1061 854h1v1h-1zM1069 854h1v1h-1zM1077 854h2v1h-2zM1082 854h1v1h-1zM1083 854h1v2h-1zM1088 854h1v2h-1zM1091 854h2v1h-2zM1100 854h1v1h-1zM1103 854h1v1h-1zM1108 854h1v1h-1zM1112 854h1v1h-1zM1114 854h1v1h-1zM1120 854h2v1h-2zM1134 854h1v1h-1zM1140 854h1v1h-1zM1144 854h1v1h-1zM1151 854h1v2h-1zM1154 854h1v1h-1zM1158 854h1v1h-1zM1160 854h2v1h-2zM1163 854h1v1h-1zM1169 854h5v1h-5zM1178 854h1v1h-1zM1184 854h1v2h-1zM1191 854h1v1h-1zM1197 854h2v1h-2zM1204 854h1v1h-1zM1208 854h1v1h-1zM1214 854h1v1h-1zM1229 854h2v1h-2zM1233 854h3v1h-3zM1242 854h1v1h-1zM1245 854h1v1h-1zM1249 854h1v1h-1zM1251 854h1v1h-1zM1262 854h1v1h-1zM1264 854h1v1h-1zM1267 854h1v1h-1zM1269 854h1v1h-1zM1276 854h1v1h-1zM1281 854h1v1h-1zM1283 854h1v1h-1zM1285 854h2v1h-2zM1288 854h1v2h-1zM1301 854h1v1h-1zM1326 854h1v1h-1zM1331 854h1v1h-1zM1333 854h2v1h-2zM1337 854h1v2h-1zM1359 854h1v1h-1zM1369 854h1v1h-1zM1371 854h1v1h-1zM1376 854h1v1h-1zM1396 854h1v1h-1zM1398 854h2v1h-2zM912 841h1V863h-1zM933 841h1V859h-1zM940 846h1V859h-1zM1012 841h1V869h-1zM1114 847h1V858h-1z"/>
<path d="M277 881H1401V884H277zM277 880h4v1h-4zM281 879h1v2h-1zM282 880h1v1h-1zM283 879h1v2h-1zM284 880h2v1h-2zM286 879h1v2h-1zM287 880h1v1h-1zM288 879h1v2h-1zM289 880h5v1h-5zM295 880h5v1h-5zM300 879h1v2h-1zM301 880h2v1h-2zM303 879h1v2h-1zM304 880h1v1h-1zM305 879h1v2h-1zM306 880h2v1h-2zM308 879h1v2h-1zM309 880h3v1h-3zM312 879h1v2h-1zM313 880h3v1h-3zM316 879h1v2h-1zM317 880h2v1h-2zM319 879h1v2h-1zM320 880h4v1h-4zM325 879h1v2h-1zM326 880h3v1h-3zM329 879h1v2h-1zM331 879h1v2h-1zM332 880h9v1h-9zM341 879h1v2h-1zM342 880h8v1h-8zM350 879h1v2h-1zM351 880h8v1h-8zM360 880h4v1h-4zM364 879h2v2h-2zM366 880h2v1h-2zM368 879h1v2h-1zM369 880h2v1h-2zM371 879h2v2h-2zM373 880h4v1h-4zM377 879h2v2h-2zM379 880h2v1h-2zM381 879h1v2h-1zM382 880h2v1h-2zM384 879h1v2h-1zM386 879h1v2h-1zM387 880h1v1h-1zM388 878h1v3h-1zM389 880h3v1h-3zM393 879h1v2h-1zM394 880h2v1h-2zM396 879h1v2h-1zM397 880h1v1h-1zM398 879h1v2h-1zM399 880h2v1h-2zM401 879h2v2h-2zM403 880h2v1h-2zM405 879h1v2h-1zM406 880h3v1h-3zM409 879h1v2h-1zM410 880h3v1h-3zM413 875h1v6h-1zM414 876h1v5h-1zM415 877h1v4h-1zM416 878h2v3h-2zM418 879h1v2h-1zM419 880h4v1h-4zM423 879h1v2h-1zM424 880h4v1h-4zM428 879h1v2h-1zM429 880h8v1h-8zM438 879h1v2h-1zM439 880h5v1h-5zM444 878h1v3h-1zM445 880h5v1h-5zM451 879h1v2h-1zM452 880h1v1h-1zM454 880h3v1h-3zM457 879h1v2h-1zM458 880h1v1h-1zM459 879h1v2h-1zM460 880h6v1h-6zM466 879h1v2h-1zM467 880h4v1h-4zM471 879h1v2h-1zM472 880h1v1h-1zM473 879h1v2h-1zM474 880h3v1h-3zM477 879h1v2h-1zM478 880h2v1h-2zM481 880h2v1h-2zM483 878h1v3h-1zM484 880h1v1h-1zM485 879h3v2h-3zM488 880h1v1h-1zM490 880h4v1h-4zM494 879h1v2h-1zM496 879h1v2h-1zM497 880h1v1h-1zM498 879h1v2h-1zM500 880h1v1h-1zM501 879h1v2h-1zM502 880h10v1h-10zM512 879h1v2h-1zM513 880h2v1h-2zM517 880h1v1h-1zM519 880h3v1h-3zM522 879h1v2h-1zM523 880h1v1h-1zM524 879h1v2h-1zM525 880h6v1h-6zM531 879h2v2h-2zM533 880h6v1h-6zM539 879h1v2h-1zM540 880h3v1h-3zM544 879h1v2h-1zM545 880h11v1h-11zM556 879h1v2h-1zM557 880h2v1h-2zM560 879h1v2h-1zM561 880h4v1h-4zM565 879h1v2h-1zM566 880h9v1h-9zM575 879h1v2h-1zM576 880h2v1h-2zM578 879h1v2h-1zM579 880h2v1h-2zM581 879h1v2h-1zM582 880h1v1h-1zM584 879h1v2h-1zM585 880h3v1h-3zM588 879h2v2h-2zM590 880h4v1h-4zM595 879h1v2h-1zM596 880h3v1h-3zM600 880h5v1h-5zM605 879h1v2h-1zM606 880h1v1h-1zM608 880h4v1h-4zM612 878h1v3h-1zM613 880h1v1h-1zM614 878h1v3h-1zM615 880h2v1h-2zM617 879h1v2h-1zM618 880h3v1h-3zM622 880h1v1h-1zM623 879h1v2h-1zM624 880h4v1h-4zM628 879h1v2h-1zM629 880h5v1h-5zM634 879h2v2h-2zM637 880h5v1h-5zM643 880h2v1h-2zM645 879h1v2h-1zM646 880h4v1h-4zM650 879h3v2h-3zM653 880h2v1h-2zM655 879h1v2h-1zM656 880h2v1h-2zM658 879h1v2h-1zM659 880h5v1h-5zM665 880h4v1h-4zM669 879h1v2h-1zM670 880h4v1h-4zM674 879h1v2h-1zM675 880h1v1h-1zM677 879h1v2h-1zM678 880h2v1h-2zM680 878h1v3h-1zM681 880h3v1h-3zM685 880h2v1h-2zM687 879h1v2h-1zM688 880h1v1h-1zM690 879h1v2h-1zM691 880h1v1h-1zM692 879h1v2h-1zM693 880h2v1h-2zM695 879h1v2h-1zM696 880h6v1h-6zM702 879h1v2h-1zM703 880h1v1h-1zM704 878h1v3h-1zM705 880h2v1h-2zM707 879h1v2h-1zM708 880h5v1h-5zM713 879h1v2h-1zM714 880h6v1h-6zM720 879h1v2h-1zM721 880h2v1h-2zM724 880h19v1h-19zM743 879h1v2h-1zM744 880h1v1h-1zM745 879h2v2h-2zM747 880h4v1h-4zM751 879h2v2h-2zM753 880h4v1h-4zM758 880h10v1h-10zM769 879h1v2h-1zM770 880h7v1h-7zM777 879h1v2h-1zM778 880h1v1h-1zM779 878h1v3h-1zM780 879h1v2h-1zM781 880h5v1h-5zM786 879h1v2h-1zM787 880h5v1h-5zM792 879h2v2h-2zM794 880h7v1h-7zM801 879h1v2h-1zM802 880h4v1h-4zM807 880h8v1h-8zM815 879h1v2h-1zM816 880h1v1h-1zM817 879h1v2h-1zM819 879h1v2h-1zM820 880h2v1h-2zM823 879h1v2h-1zM824 880h4v1h-4zM829 880h10v1h-10zM841 880h1v1h-1zM842 879h1v2h-1zM843 880h6v1h-6zM849 879h1v2h-1zM850 880h12v1h-12zM862 879h1v2h-1zM863 880h1v1h-1zM864 879h1v2h-1zM865 880h1v1h-1zM867 880h7v1h-7zM874 879h2v2h-2zM876 880h3v1h-3zM880 880h6v1h-6zM886 879h1v2h-1zM887 880h2v1h-2zM889 879h1v2h-1zM890 880h1v1h-1zM893 880h10v1h-10zM904 880h1v1h-1zM905 879h1v2h-1zM907 879h1v2h-1zM908 880h2v1h-2zM910 879h1v2h-1zM911 880h2v1h-2zM913 879h1v2h-1zM914 880h3v1h-3zM917 879h1v2h-1zM918 880h1v1h-1zM919 879h1v2h-1zM920 880h1v1h-1zM922 880h6v1h-6zM928 879h1v2h-1zM929 880h4v1h-4zM933 879h1v2h-1zM934 880h1v1h-1zM935 879h2v2h-2zM937 880h1v1h-1zM938 879h1v2h-1zM939 880h6v1h-6zM945 878h1v3h-1zM947 880h9v1h-9zM956 879h1v2h-1zM957 880h7v1h-7zM964 878h1v3h-1zM965 880h4v1h-4zM969 879h1v2h-1zM970 880h9v1h-9zM980 880h6v1h-6zM987 880h8v1h-8zM996 880h1v1h-1zM998 880h1v1h-1zM999 879h1v2h-1zM1000 880h2v1h-2zM1003 880h2v1h-2zM1007 880h1v1h-1zM1009 880h2v1h-2zM1011 879h1v2h-1zM1012 880h5v1h-5zM1017 879h2v2h-2zM1019 880h4v1h-4zM1023 879h1v2h-1zM1024 880h2v1h-2zM1026 879h1v2h-1zM1027 880h1v1h-1zM1029 879h1v2h-1zM1030 880h1v1h-1zM1031 879h1v2h-1zM1032 880h1v1h-1zM1033 879h1v2h-1zM1034 880h6v1h-6zM1041 880h11v1h-11zM1053 879h2v2h-2zM1055 880h1v1h-1zM1056 878h1v3h-1zM1057 879h1v2h-1zM1058 880h1v1h-1zM1060 880h1v1h-1zM1062 880h1v1h-1zM1063 879h1v2h-1zM1064 880h4v1h-4zM1068 879h1v2h-1zM1069 880h1v1h-1zM1070 878h1v3h-1zM1071 880h7v1h-7zM1078 879h1v2h-1zM1079 880h3v1h-3zM1082 878h1v3h-1zM1083 880h2v1h-2zM1085 879h1v2h-1zM1086 880h2v1h-2zM1088 879h1v2h-1zM1089 880h2v1h-2zM1091 879h1v2h-1zM1093 880h2v1h-2zM1095 879h1v2h-1zM1096 880h1v1h-1zM1098 879h1v2h-1zM1099 880h8v1h-8zM1107 879h1v2h-1zM1108 880h3v1h-3zM1111 879h1v2h-1zM1112 880h10v1h-10zM1122 879h1v2h-1zM1123 880h2v1h-2zM1126 879h1v2h-1zM1128 880h1v1h-1zM1129 879h1v2h-1zM1130 880h21v1h-21zM1152 880h3v1h-3zM1155 879h1v2h-1zM1156 880h12v1h-12zM1168 879h1v2h-1zM1169 880h1v1h-1zM1170 879h1v2h-1zM1171 880h6v1h-6zM1177 879h1v2h-1zM1178 880h9v1h-9zM1187 878h1v3h-1zM1188 880h1v1h-1zM1189 879h1v2h-1zM1190 880h1v1h-1zM1191 879h2v2h-2zM1193 880h1v1h-1zM1194 879h1v2h-1zM1196 880h1v1h-1zM1198 879h1v2h-1zM1199 880h4v1h-4zM1203 879h1v2h-1zM1204 880h1v1h-1zM1205 879h1v2h-1zM1207 880h3v1h-3zM1210 879h1v2h-1zM1211 880h1v1h-1zM1213 880h2v1h-2zM1215 879h1v2h-1zM1217 880h4v1h-4zM1221 879h1v2h-1zM1222 880h1v1h-1zM1224 880h2v1h-2zM1226 879h1v2h-1zM1227 880h3v1h-3zM1230 879h1v2h-1zM1231 880h1v1h-1zM1233 879h1v2h-1zM1234 880h7v1h-7zM1242 880h4v1h-4zM1249 880h9v1h-9zM1258 879h1v2h-1zM1259 880h5v1h-5zM1265 879h3v2h-3zM1268 880h1v1h-1zM1270 879h1v2h-1zM1271 880h7v1h-7zM1278 879h1v2h-1zM1279 880h13v1h-13zM1292 879h1v2h-1zM1294 880h7v1h-7zM1301 879h1v2h-1zM1303 879h4v2h-4zM1307 880h2v1h-2zM1309 879h1v2h-1zM1310 880h9v1h-9zM1319 879h1v2h-1zM1320 880h2v1h-2zM1322 879h1v2h-1zM1323 880h1v1h-1zM1324 879h1v2h-1zM1325 880h1v1h-1zM1326 879h1v2h-1zM1327 880h4v1h-4zM1331 879h1v2h-1zM1332 880h1v1h-1zM1333 879h1v2h-1zM1334 878h1v3h-1zM1335 880h4v1h-4zM1339 879h1v2h-1zM1340 880h1v1h-1zM1341 879h1v2h-1zM1343 879h1v2h-1zM1345 880h3v1h-3zM1348 879h2v2h-2zM1350 878h1v3h-1zM1351 880h2v1h-2zM1354 880h1v1h-1zM1356 880h3v1h-3zM1359 878h1v3h-1zM1361 880h1v1h-1zM1362 879h1v2h-1zM1363 880h1v1h-1zM1364 879h1v2h-1zM1365 880h1v1h-1zM1366 879h1v2h-1zM1367 880h6v1h-6zM1373 878h1v3h-1zM1374 880h1v1h-1zM1375 879h2v2h-2zM1377 880h2v1h-2zM1380 880h8v1h-8zM1389 880h1v1h-1zM1390 879h1v2h-1zM1391 880h10v1h-10zM279 884h2v1h-2zM284 884h2v1h-2zM290 884h1v1h-1zM291 884h1v2h-1zM295 884h1v1h-1zM299 884h1v1h-1zM301 884h1v2h-1zM306 884h1v1h-1zM308 884h1v1h-1zM310 884h1v1h-1zM312 884h1v1h-1zM314 884h1v1h-1zM316 884h2v1h-2zM319 884h1v2h-1zM327 884h1v1h-1zM329 884h1v1h-1zM331 884h1v2h-1zM337 884h2v1h-2zM339 884h1v2h-1zM343 884h1v1h-1zM347 884h1v1h-1zM350 884h3v1h-3zM355 884h1v1h-1zM360 884h2v1h-2zM362 884h1v2h-1zM364 884h1v2h-1zM365 884h1v1h-1zM366 884h1v2h-1zM370 884h1v1h-1zM372 884h1v1h-1zM374 884h1v1h-1zM377 884h1v1h-1zM380 884h1v1h-1zM387 884h1v1h-1zM396 884h1v2h-1zM397 884h1v1h-1zM400 884h1v1h-1zM402 884h1v1h-1zM404 884h1v1h-1zM406 884h1v1h-1zM408 884h1v1h-1zM413 884h1v6h-1zM414 884h1v5h-1zM415 884h1v4h-1zM416 884h2v3h-2zM418 884h1v2h-1zM419 884h1v1h-1zM420 884h1v2h-1zM427 884h2v1h-2zM430 884h2v1h-2zM435 884h1v2h-1zM436 884h2v1h-2zM440 884h1v1h-1zM442 884h1v1h-1zM443 884h1v3h-1zM448 884h1v2h-1zM451 884h2v2h-2zM453 884h1v3h-1zM455 884h1v1h-1zM456 884h1v3h-1zM459 884h1v1h-1zM460 884h1v2h-1zM461 884h1v1h-1zM464 884h1v1h-1zM465 884h1v2h-1zM469 884h1v1h-1zM471 884h2v1h-2zM473 884h1v2h-1zM476 884h2v1h-2zM481 884h1v3h-1zM483 884h4v1h-4zM487 884h1v2h-1zM490 884h1v3h-1zM492 884h1v1h-1zM494 884h2v1h-2zM496 884h1v3h-1zM498 884h1v1h-1zM501 884h1v1h-1zM503 884h1v2h-1zM505 884h1v1h-1zM507 884h1v1h-1zM508 884h1v2h-1zM516 884h1v1h-1zM522 884h1v2h-1zM528 884h1v1h-1zM530 884h1v1h-1zM534 884h3v1h-3zM539 884h1v3h-1zM541 884h2v1h-2zM547 884h1v3h-1zM548 884h1v2h-1zM551 884h1v3h-1zM556 884h1v1h-1zM557 884h1v2h-1zM558 884h1v1h-1zM561 884h2v1h-2zM564 884h3v1h-3zM569 884h1v2h-1zM573 884h1v1h-1zM578 884h2v2h-2zM580 884h4v1h-4zM590 884h1v1h-1zM597 884h1v2h-1zM598 884h3v1h-3zM601 884h3v2h-3zM606 884h1v2h-1zM607 884h1v1h-1zM613 884h1v1h-1zM615 884h2v1h-2zM619 884h1v1h-1zM621 884h1v1h-1zM625 884h1v2h-1zM626 884h1v1h-1zM630 884h5v1h-5zM639 884h1v2h-1zM641 884h2v1h-2zM645 884h1v2h-1zM650 884h1v2h-1zM653 884h2v1h-2zM658 884h1v1h-1zM663 884h1v2h-1zM664 884h2v1h-2zM666 884h1v2h-1zM667 884h1v1h-1zM669 884h1v1h-1zM672 884h2v1h-2zM675 884h3v1h-3zM679 884h1v1h-1zM681 884h1v1h-1zM682 884h1v2h-1zM686 884h1v1h-1zM689 884h1v2h-1zM697 884h1v3h-1zM698 884h2v1h-2zM703 884h1v1h-1zM705 884h1v2h-1zM706 884h1v1h-1zM710 884h1v1h-1zM712 884h1v2h-1zM714 884h2v1h-2zM718 884h1v1h-1zM719 884h1v2h-1zM720 884h1v1h-1zM721 884h2v2h-2zM723 884h1v1h-1zM729 884h2v1h-2zM733 884h1v1h-1zM735 884h2v1h-2zM740 884h1v1h-1zM743 884h1v1h-1zM747 884h1v1h-1zM749 884h1v2h-1zM751 884h1v1h-1zM752 884h1v2h-1zM755 884h1v1h-1zM757 884h1v1h-1zM760 884h1v2h-1zM762 884h2v1h-2zM765 884h1v1h-1zM768 884h1v1h-1zM774 884h1v1h-1zM779 884h1v1h-1zM780 884h1v2h-1zM784 884h1v2h-1zM787 884h1v1h-1zM794 884h1v1h-1zM810 884h2v1h-2zM814 884h1v2h-1zM816 884h1v3h-1zM820 884h1v2h-1zM822 884h1v1h-1zM825 884h1v3h-1zM828 884h1v1h-1zM829 884h1v2h-1zM830 884h2v1h-2zM834 884h2v1h-2zM841 884h1v2h-1zM844 884h1v1h-1zM846 884h1v1h-1zM848 884h2v1h-2zM852 884h3v1h-3zM855 884h1v2h-1zM857 884h1v1h-1zM858 884h1v2h-1zM861 884h1v2h-1zM864 884h1v3h-1zM865 884h1v1h-1zM867 884h2v1h-2zM873 884h1v1h-1zM876 884h1v2h-1zM877 884h3v1h-3zM882 884h1v1h-1zM886 884h1v1h-1zM888 884h1v2h-1zM892 884h3v1h-3zM896 884h2v1h-2zM898 884h1v3h-1zM901 884h1v2h-1zM912 884h1v2h-1zM913 884h2v1h-2zM915 884h1v2h-1zM918 884h1v2h-1zM919 884h1v1h-1zM922 884h1v1h-1zM924 884h2v1h-2zM929 884h1v1h-1zM931 884h1v1h-1zM934 884h1v1h-1zM936 884h3v1h-3zM941 884h1v1h-1zM943 884h1v2h-1zM946 884h1v1h-1zM947 884h1v2h-1zM952 884h1v1h-1zM955 884h1v1h-1zM961 884h2v1h-2zM964 884h1v2h-1zM968 884h1v1h-1zM970 884h1v2h-1zM974 884h3v1h-3zM982 884h2v1h-2zM987 884h1v2h-1zM992 884h1v2h-1zM995 884h1v1h-1zM997 884h2v1h-2zM1003 884h1v1h-1zM1006 884h1v1h-1zM1008 884h1v1h-1zM1015 884h2v1h-2zM1017 884h2v2h-2zM1019 884h2v1h-2zM1021 884h1v2h-1zM1024 884h1v2h-1zM1029 884h2v1h-2zM1032 884h2v1h-2zM1039 884h1v1h-1zM1046 884h2v1h-2zM1049 884h1v2h-1zM1050 884h3v1h-3zM1056 884h2v1h-2zM1060 884h1v2h-1zM1061 884h1v1h-1zM1066 884h2v1h-2zM1071 884h1v1h-1zM1077 884h1v3h-1zM1088 884h2v1h-2zM1091 884h1v1h-1zM1093 884h1v1h-1zM1098 884h1v3h-1zM1099 884h1v1h-1zM1103 884h1v1h-1zM1106 884h1v2h-1zM1109 884h1v1h-1zM1111 884h1v1h-1zM1113 884h1v2h-1zM1114 884h2v1h-2zM1120 884h1v1h-1zM1128 884h1v3h-1zM1129 884h1v2h-1zM1131 884h4v1h-4zM1136 884h1v2h-1zM1137 884h2v1h-2zM1142 884h3v1h-3zM1146 884h2v1h-2zM1149 884h1v2h-1zM1153 884h1v1h-1zM1155 884h1v1h-1zM1161 884h1v1h-1zM1162 884h1v2h-1zM1163 884h1v1h-1zM1165 884h1v1h-1zM1167 884h2v1h-2zM1181 884h1v1h-1zM1185 884h1v3h-1zM1186 884h1v1h-1zM1188 884h1v1h-1zM1190 884h1v1h-1zM1200 884h1v1h-1zM1203 884h1v1h-1zM1205 884h1v1h-1zM1206 884h1v3h-1zM1210 884h1v1h-1zM1216 884h2v1h-2zM1221 884h1v1h-1zM1222 884h2v2h-2zM1228 884h3v1h-3zM1231 884h1v3h-1zM1232 884h1v1h-1zM1235 884h1v1h-1zM1237 884h1v3h-1zM1238 884h1v1h-1zM1239 884h1v2h-1zM1240 884h2v1h-2zM1243 884h1v1h-1zM1247 884h1v1h-1zM1249 884h1v1h-1zM1250 884h1v2h-1zM1253 884h1v1h-1zM1255 884h3v1h-3zM1263 884h1v1h-1zM1273 884h1v1h-1zM1276 884h1v1h-1zM1281 884h2v1h-2zM1284 884h1v2h-1zM1285 884h1v3h-1zM1291 884h1v3h-1zM1292 884h1v1h-1zM1296 884h1v1h-1zM1297 884h1v3h-1zM1304 884h1v2h-1zM1306 884h1v2h-1zM1313 884h1v2h-1zM1314 884h1v1h-1zM1324 884h1v1h-1zM1328 884h1v2h-1zM1329 884h1v1h-1zM1336 884h1v1h-1zM1340 884h1v1h-1zM1347 884h1v2h-1zM1348 884h1v1h-1zM1349 884h3v2h-3zM1352 884h1v1h-1zM1353 884h2v2h-2zM1355 884h1v1h-1zM1356 884h1v2h-1zM1358 884h2v1h-2zM1362 884h1v2h-1zM1366 884h2v1h-2zM1370 884h1v1h-1zM1372 884h2v1h-2zM1376 884h2v1h-2zM1380 884h1v3h-1zM1384 884h1v1h-1zM1385 884h1v2h-1zM1390 884h1v1h-1zM1392 884h2v1h-2zM1394 884h1v2h-1zM1397 884h3v1h-3zM375 882h1V889h-1zM556 873h1V899h-1zM807 870h1V893h-1zM1076 865h1V902h-1zM1212 875h1V890h-1zM1221 865h1V899h-1zM1018 877h1V889h-1zM1350 877h1V888h-1z"/>
<path d="M277 911H1350V914H277zM277 910h3v1h-3zM280 909h1v2h-1zM281 910h1v1h-1zM283 909h1v2h-1zM284 910h9v1h-9zM293 909h1v2h-1zM294 910h3v1h-3zM297 909h1v2h-1zM299 910h8v1h-8zM308 909h1v2h-1zM309 910h1v1h-1zM310 909h2v2h-2zM312 910h10v1h-10zM323 910h1v1h-1zM324 909h1v2h-1zM325 910h3v1h-3zM328 909h1v2h-1zM329 910h1v1h-1zM330 909h6v2h-6zM336 910h2v1h-2zM339 910h5v1h-5zM345 910h8v1h-8zM354 910h1v1h-1zM356 910h3v1h-3zM360 910h7v1h-7zM367 909h1v2h-1zM368 910h4v1h-4zM372 909h1v2h-1zM373 910h13v1h-13zM387 910h12v1h-12zM399 909h1v2h-1zM400 910h9v1h-9zM410 910h2v1h-2zM413 910h4v1h-4zM418 910h4v1h-4zM422 909h1v2h-1zM423 910h2v1h-2zM426 910h8v1h-8zM435 910h4v1h-4zM440 910h1v1h-1zM441 909h1v2h-1zM442 908h1v3h-1zM445 910h4v1h-4zM451 910h3v1h-3zM455 910h2v1h-2zM458 910h1v1h-1zM459 908h1v3h-1zM460 910h3v1h-3zM465 910h1v1h-1zM467 910h5v1h-5zM473 910h7v1h-7zM481 910h13v1h-13zM494 909h1v2h-1zM495 910h3v1h-3zM498 909h1v2h-1zM500 910h4v1h-4zM505 910h1v1h-1zM507 910h2v1h-2zM509 909h1v2h-1zM510 910h3v1h-3zM513 909h1v2h-1zM514 910h2v1h-2zM517 910h1v1h-1zM519 910h5v1h-5zM524 909h1v2h-1zM525 910h4v1h-4zM531 910h2v1h-2zM533 909h2v2h-2zM535 910h2v1h-2zM537 909h1v2h-1zM539 910h2v1h-2zM543 910h1v1h-1zM544 909h1v2h-1zM545 910h1v1h-1zM546 909h1v2h-1zM547 910h16v1h-16zM564 910h4v1h-4zM568 908h1v3h-1zM569 909h1v2h-1zM570 910h4v1h-4zM575 909h1v2h-1zM576 910h1v1h-1zM578 910h1v1h-1zM580 910h24v1h-24zM604 909h2v2h-2zM606 910h1v1h-1zM608 908h1v3h-1zM609 909h2v2h-2zM611 910h6v1h-6zM617 909h2v2h-2zM619 910h1v1h-1zM621 910h11v1h-11zM633 910h11v1h-11zM644 909h1v2h-1zM645 910h5v1h-5zM650 909h1v2h-1zM651 910h9v1h-9zM660 909h2v2h-2zM662 910h6v1h-6zM668 909h1v2h-1zM669 910h2v1h-2zM671 909h1v2h-1zM672 910h15v1h-15zM687 909h1v2h-1zM688 910h15v1h-15zM704 910h2v1h-2zM707 910h12v1h-12zM719 909h1v2h-1zM720 910h4v1h-4zM724 908h1v3h-1zM725 910h7v1h-7zM733 910h6v1h-6zM740 910h2v1h-2zM743 910h3v1h-3zM747 910h3v1h-3zM752 910h8v1h-8zM761 910h1v1h-1zM763 910h3v1h-3zM766 909h1v2h-1zM767 910h1v1h-1zM768 909h1v2h-1zM769 910h9v1h-9zM778 909h1v2h-1zM779 910h5v1h-5zM785 910h1v1h-1zM786 909h1v2h-1zM787 910h6v1h-6zM793 909h1v2h-1zM794 910h2v1h-2zM796 909h1v2h-1zM798 910h1v1h-1zM800 910h1v1h-1zM802 909h1v2h-1zM803 910h1v1h-1zM804 908h1v3h-1zM805 910h3v1h-3zM808 908h1v3h-1zM809 910h6v1h-6zM816 910h1v1h-1zM818 910h5v1h-5zM825 910h2v1h-2zM827 909h1v2h-1zM828 910h1v1h-1zM829 909h1v2h-1zM831 908h1v3h-1zM832 910h7v1h-7zM839 909h1v2h-1zM840 910h1v1h-1zM842 910h9v1h-9zM852 910h1v1h-1zM855 909h1v2h-1zM856 910h4v1h-4zM861 910h12v1h-12zM875 908h1v3h-1zM877 909h2v2h-2zM880 910h9v1h-9zM889 909h6v2h-6zM895 910h2v1h-2zM897 908h1v3h-1zM898 910h8v1h-8zM906 909h1v2h-1zM907 910h7v1h-7zM915 910h6v1h-6zM921 909h1v2h-1zM922 910h1v1h-1zM924 910h3v1h-3zM928 910h3v1h-3zM932 909h1v2h-1zM933 910h2v1h-2zM935 909h1v2h-1zM936 910h3v1h-3zM939 909h1v2h-1zM940 910h3v1h-3zM945 910h10v1h-10zM955 909h1v2h-1zM956 910h1v1h-1zM957 908h2v3h-2zM959 910h1v1h-1zM961 910h2v1h-2zM964 910h1v1h-1zM966 910h13v1h-13zM979 909h1v2h-1zM980 910h1v1h-1zM981 909h1v2h-1zM982 910h4v1h-4zM987 910h4v1h-4zM992 910h7v1h-7zM999 909h1v2h-1zM1000 910h1v1h-1zM1002 910h3v1h-3zM1006 910h1v1h-1zM1007 909h1v2h-1zM1008 910h1v1h-1zM1009 909h1v2h-1zM1010 910h3v1h-3zM1013 909h1v2h-1zM1014 910h3v1h-3zM1017 909h1v2h-1zM1019 910h12v1h-12zM1031 909h1v2h-1zM1032 910h4v1h-4zM1036 909h2v2h-2zM1038 910h5v1h-5zM1043 908h1v3h-1zM1044 910h2v1h-2zM1046 909h1v2h-1zM1047 910h6v1h-6zM1054 909h1v2h-1zM1055 910h6v1h-6zM1062 910h7v1h-7zM1069 909h1v2h-1zM1070 910h11v1h-11zM1081 909h1v2h-1zM1082 910h3v1h-3zM1085 908h1v3h-1zM1086 910h1v1h-1zM1088 910h16v1h-16zM1104 909h1v2h-1zM1105 910h8v1h-8zM1113 909h1v2h-1zM1114 910h9v1h-9zM1123 909h1v2h-1zM1124 910h1v1h-1zM1125 909h1v2h-1zM1126 910h1v1h-1zM1127 909h1v2h-1zM1130 910h2v1h-2zM1132 909h1v2h-1zM1133 910h7v1h-7zM1141 909h1v2h-1zM1142 910h8v1h-8zM1152 910h6v1h-6zM1158 909h1v2h-1zM1159 910h3v1h-3zM1163 910h7v1h-7zM1171 910h3v1h-3zM1175 910h1v1h-1zM1177 910h4v1h-4zM1182 910h2v1h-2zM1184 909h1v2h-1zM1185 910h18v1h-18zM1204 910h2v1h-2zM1207 909h1v2h-1zM1209 910h5v1h-5zM1214 909h1v2h-1zM1215 910h3v1h-3zM1218 909h1v2h-1zM1219 910h4v1h-4zM1224 910h7v1h-7zM1232 910h4v1h-4zM1236 909h1v2h-1zM1237 908h1v3h-1zM1238 910h11v1h-11zM1250 910h3v1h-3zM1254 910h3v1h-3zM1257 909h1v2h-1zM1258 910h12v1h-12zM1270 908h1v3h-1zM1271 909h1v2h-1zM1272 910h4v1h-4zM1279 910h3v1h-3zM1283 910h6v1h-6zM1289 909h1v2h-1zM1290 910h3v1h-3zM1293 909h1v2h-1zM1294 910h4v1h-4zM1300 909h1v2h-1zM1301 910h1v1h-1zM1303 910h1v1h-1zM1305 910h7v1h-7zM1314 910h2v1h-2zM1317 909h1v2h-1zM1319 910h2v1h-2zM1321 908h1v3h-1zM1323 910h1v1h-1zM1325 910h10v1h-10zM1336 910h2v1h-2zM1339 910h2v1h-2zM1341 909h1v2h-1zM1342 910h2v1h-2zM1344 909h1v2h-1zM1345 910h5v1h-5zM277 914h1v1h-1zM280 914h1v1h-1zM284 914h1v1h-1zM287 914h1v1h-1zM289 914h1v2h-1zM290 914h2v1h-2zM293 914h3v1h-3zM297 914h1v1h-1zM299 914h2v1h-2zM301 914h1v2h-1zM305 914h1v1h-1zM307 914h1v1h-1zM309 914h1v1h-1zM314 914h1v2h-1zM315 914h2v1h-2zM318 914h1v1h-1zM320 914h1v1h-1zM321 914h1v2h-1zM325 914h1v3h-1zM327 914h3v1h-3zM330 914h6v2h-6zM336 914h1v1h-1zM337 914h1v2h-1zM339 914h1v1h-1zM342 914h1v1h-1zM346 914h5v1h-5zM353 914h1v1h-1zM354 914h1v3h-1zM355 914h2v1h-2zM358 914h1v1h-1zM360 914h1v1h-1zM363 914h1v1h-1zM365 914h2v1h-2zM370 914h1v2h-1zM372 914h2v1h-2zM375 914h4v1h-4zM380 914h3v1h-3zM384 914h1v2h-1zM385 914h1v1h-1zM387 914h1v1h-1zM389 914h1v3h-1zM395 914h2v1h-2zM398 914h1v1h-1zM399 914h1v2h-1zM402 914h1v1h-1zM405 914h1v1h-1zM412 914h1v2h-1zM415 914h1v1h-1zM418 914h2v1h-2zM423 914h1v1h-1zM425 914h1v1h-1zM426 914h1v3h-1zM427 914h1v1h-1zM433 914h1v2h-1zM435 914h1v1h-1zM437 914h2v1h-2zM440 914h1v2h-1zM442 914h3v1h-3zM447 914h1v1h-1zM450 914h1v1h-1zM453 914h1v2h-1zM456 914h1v2h-1zM457 914h1v1h-1zM459 914h1v3h-1zM460 914h4v1h-4zM465 914h1v2h-1zM468 914h1v1h-1zM471 914h1v2h-1zM473 914h1v3h-1zM478 914h1v1h-1zM479 914h1v2h-1zM481 914h1v1h-1zM484 914h1v2h-1zM485 914h1v1h-1zM486 914h1v2h-1zM493 914h3v1h-3zM498 914h1v1h-1zM505 914h1v1h-1zM507 914h1v2h-1zM513 914h1v2h-1zM514 914h1v1h-1zM519 914h1v1h-1zM522 914h1v1h-1zM527 914h1v1h-1zM529 914h2v1h-2zM536 914h1v2h-1zM537 914h3v1h-3zM545 914h1v1h-1zM549 914h1v1h-1zM551 914h2v1h-2zM562 914h1v1h-1zM565 914h1v1h-1zM566 914h1v2h-1zM567 914h2v1h-2zM570 914h1v1h-1zM573 914h3v1h-3zM576 914h1v2h-1zM578 914h1v2h-1zM583 914h1v1h-1zM585 914h3v1h-3zM590 914h1v1h-1zM592 914h1v1h-1zM594 914h1v1h-1zM597 914h1v3h-1zM599 914h2v1h-2zM603 914h4v1h-4zM608 914h2v1h-2zM612 914h1v1h-1zM614 914h1v2h-1zM615 914h1v1h-1zM617 914h1v1h-1zM618 914h1v3h-1zM621 914h1v2h-1zM623 914h1v1h-1zM624 914h1v2h-1zM625 914h1v1h-1zM626 914h2v2h-2zM629 914h1v1h-1zM633 914h4v1h-4zM640 914h1v1h-1zM641 914h1v2h-1zM642 914h4v1h-4zM649 914h1v1h-1zM651 914h2v1h-2zM656 914h1v2h-1zM658 914h2v1h-2zM664 914h3v1h-3zM668 914h1v1h-1zM671 914h1v1h-1zM673 914h1v1h-1zM676 914h4v1h-4zM681 914h1v1h-1zM685 914h1v1h-1zM690 914h1v1h-1zM692 914h1v1h-1zM696 914h1v1h-1zM703 914h2v1h-2zM707 914h4v1h-4zM711 914h1v2h-1zM713 914h1v1h-1zM715 914h1v3h-1zM716 914h1v1h-1zM718 914h1v2h-1zM719 914h1v1h-1zM721 914h1v1h-1zM723 914h1v1h-1zM725 914h3v1h-3zM737 914h1v1h-1zM739 914h1v1h-1zM741 914h2v1h-2zM746 914h1v1h-1zM748 914h3v1h-3zM752 914h2v1h-2zM754 914h2v2h-2zM756 914h1v1h-1zM758 914h4v1h-4zM764 914h1v1h-1zM767 914h1v2h-1zM769 914h1v2h-1zM770 914h1v3h-1zM773 914h1v1h-1zM777 914h1v1h-1zM778 914h1v2h-1zM780 914h1v2h-1zM786 914h1v2h-1zM790 914h1v1h-1zM792 914h1v2h-1zM798 914h1v2h-1zM799 914h1v1h-1zM800 914h1v2h-1zM801 914h2v1h-2zM804 914h1v1h-1zM806 914h1v1h-1zM807 914h1v2h-1zM809 914h2v1h-2zM813 914h1v1h-1zM817 914h1v1h-1zM819 914h1v1h-1zM821 914h2v1h-2zM826 914h1v2h-1zM828 914h1v1h-1zM831 914h2v1h-2zM836 914h3v1h-3zM841 914h3v1h-3zM848 914h1v1h-1zM851 914h1v1h-1zM853 914h1v1h-1zM854 914h1v2h-1zM855 914h3v1h-3zM859 914h5v1h-5zM864 914h1v2h-1zM865 914h2v1h-2zM867 914h1v3h-1zM868 914h2v1h-2zM870 914h1v2h-1zM871 914h1v3h-1zM878 914h1v1h-1zM879 914h1v2h-1zM882 914h4v1h-4zM886 914h1v2h-1zM887 914h1v1h-1zM888 914h7v2h-7zM895 914h2v1h-2zM898 914h4v1h-4zM905 914h2v1h-2zM910 914h2v1h-2zM913 914h1v1h-1zM915 914h1v2h-1zM916 914h2v1h-2zM919 914h1v1h-1zM921 914h1v1h-1zM923 914h1v2h-1zM925 914h1v2h-1zM926 914h1v1h-1zM928 914h1v2h-1zM931 914h1v2h-1zM933 914h1v2h-1zM934 914h1v1h-1zM938 914h1v1h-1zM940 914h1v2h-1zM942 914h2v1h-2zM945 914h2v1h-2zM950 914h1v1h-1zM954 914h1v1h-1zM956 914h1v1h-1zM958 914h3v1h-3zM962 914h1v1h-1zM964 914h1v2h-1zM965 914h1v1h-1zM971 914h3v1h-3zM975 914h1v1h-1zM976 914h2v2h-2zM978 914h2v1h-2zM982 914h1v1h-1zM984 914h1v1h-1zM987 914h1v1h-1zM991 914h1v1h-1zM994 914h1v1h-1zM999 914h3v1h-3zM1004 914h2v1h-2zM1009 914h1v2h-1zM1014 914h1v1h-1zM1016 914h3v1h-3zM1022 914h2v1h-2zM1025 914h4v1h-4zM1031 914h1v2h-1zM1032 914h1v1h-1zM1035 914h1v1h-1zM1046 914h1v3h-1zM1049 914h1v1h-1zM1051 914h2v1h-2zM1053 914h1v2h-1zM1056 914h1v1h-1zM1058 914h1v1h-1zM1061 914h1v1h-1zM1065 914h1v1h-1zM1066 914h1v2h-1zM1068 914h1v3h-1zM1069 914h3v1h-3zM1074 914h1v1h-1zM1076 914h1v1h-1zM1080 914h1v1h-1zM1082 914h1v1h-1zM1084 914h1v1h-1zM1087 914h1v1h-1zM1089 914h1v1h-1zM1092 914h1v1h-1zM1098 914h1v1h-1zM1100 914h1v1h-1zM1107 914h2v1h-2zM1109 914h1v2h-1zM1124 914h1v2h-1zM1128 914h2v1h-2zM1131 914h1v1h-1zM1133 914h1v2h-1zM1134 914h1v1h-1zM1136 914h3v1h-3zM1141 914h2v1h-2zM1144 914h1v1h-1zM1148 914h2v1h-2zM1152 914h1v1h-1zM1154 914h1v2h-1zM1155 914h1v1h-1zM1159 914h1v1h-1zM1160 914h1v2h-1zM1161 914h1v1h-1zM1165 914h1v1h-1zM1170 914h2v1h-2zM1172 914h1v3h-1zM1174 914h1v1h-1zM1176 914h3v1h-3zM1180 914h1v1h-1zM1184 914h1v1h-1zM1190 914h2v1h-2zM1194 914h1v2h-1zM1199 914h1v2h-1zM1201 914h1v1h-1zM1206 914h2v1h-2zM1209 914h1v1h-1zM1211 914h1v1h-1zM1213 914h1v1h-1zM1215 914h1v1h-1zM1217 914h1v1h-1zM1220 914h1v1h-1zM1223 914h1v1h-1zM1226 914h1v1h-1zM1228 914h1v1h-1zM1230 914h1v1h-1zM1231 914h1v2h-1zM1232 914h2v1h-2zM1236 914h3v1h-3zM1243 914h1v2h-1zM1247 914h1v1h-1zM1249 914h1v1h-1zM1252 914h1v1h-1zM1257 914h1v1h-1zM1259 914h3v1h-3zM1263 914h1v1h-1zM1267 914h4v1h-4zM1272 914h1v3h-1zM1277 914h2v1h-2zM1280 914h2v1h-2zM1282 914h1v2h-1zM1285 914h1v1h-1zM1287 914h2v1h-2zM1289 914h1v3h-1zM1296 914h3v1h-3zM1301 914h2v1h-2zM1304 914h1v2h-1zM1305 914h1v1h-1zM1307 914h2v1h-2zM1310 914h1v1h-1zM1314 914h1v1h-1zM1316 914h1v2h-1zM1320 914h1v1h-1zM1324 914h1v1h-1zM1329 914h1v1h-1zM1331 914h1v2h-1zM1332 914h2v1h-2zM1334 914h1v3h-1zM1337 914h1v2h-1zM1339 914h1v1h-1zM1342 914h1v1h-1zM1344 914h1v1h-1zM1346 914h3v1h-3zM541 905h1V913h-1zM400 912h1V919h-1zM818 892h1V927h-1zM1027 907h1V913h-1zM1181 902h1V929h-1zM1191 903h1V919h-1zM1266 906h1V913h-1zM1279 892h1V928h-1z"/>
  </g>
  <path d="M277 184h1124v1H277zM1401 185h1v758h-1zM277 185h1v758h-1zM277 944h1124v1H277z" fill="#000"/>
  <path d="M352.5 178V184M352.5 945V951M427.5 178V184M427.5 945V951M502.5 178V184M502.5 945V951M577.5 178V184M577.5 945V951M652.5 178V184M652.5 945V951M727.5 178V184M727.5 945V951M802.5 178V184M802.5 945V951M876.5 178V184M876.5 945V951M951.5 178V184M951.5 945V951M1026.5 178V184M1026.5 945V951M1101.5 178V184M1101.5 945V951M1176.5 178V184M1176.5 945V951M1251.5 178V184M1251.5 945V951M1326.5 178V184M1326.5 945V951M270 215.5H277M1401 215.5H1408M270 246.5H277M1401 246.5H1408M270 276.5H277M1401 276.5H1408M270 306.5H277M1401 306.5H1408M270 337.5H277M1401 337.5H1408M270 367.5H277M1401 367.5H1408M270 397.5H277M1401 397.5H1408M270 428.5H277M1401 428.5H1408M270 458.5H277M1401 458.5H1408M270 488.5H277M1401 488.5H1408M270 518.5H277M1401 518.5H1408M270 549.5H277M1401 549.5H1408M270 579.5H277M1401 579.5H1408M270 609.5H277M1401 609.5H1408M270 640.5H277M1401 640.5H1408M270 670.5H277M1401 670.5H1408M270 700.5H277M1401 700.5H1408M270 731.5H277M1401 731.5H1408M270 761.5H277M1401 761.5H1408M270 791.5H277M1401 791.5H1408M270 822.5H277M1401 822.5H1408M270 852.5H277M1401 852.5H1408M270 882.5H277M1401 882.5H1408M270 913.5H277M1401 913.5H1408" stroke="#000" stroke-width="1" fill="none"/>
  <g font-size="13" fill="#000">
<text x="352.5" y="178" text-anchor="middle">02</text>
<text x="352.5" y="960" text-anchor="middle">02</text>
<text x="427.5" y="178" text-anchor="middle">04</text>
<text x="427.5" y="960" text-anchor="middle">04</text>
<text x="502.5" y="178" text-anchor="middle">06</text>
<text x="502.5" y="960" text-anchor="middle">06</text>
<text x="577.5" y="178" text-anchor="middle">08</text>
<text x="577.5" y="960" text-anchor="middle">08</text>
<text x="652.5" y="178" text-anchor="middle">10</text>
<text x="652.5" y="960" text-anchor="middle">10</text>
<text x="727.5" y="178" text-anchor="middle">12</text>
<text x="727.5" y="960" text-anchor="middle">12</text>
<text x="802.5" y="178" text-anchor="middle">14</text>
<text x="802.5" y="960" text-anchor="middle">14</text>
<text x="876.5" y="178" text-anchor="middle">16</text>
<text x="876.5" y="960" text-anchor="middle">16</text>
<text x="951.5" y="178" text-anchor="middle">18</text>
<text x="951.5" y="960" text-anchor="middle">18</text>
<text x="1026.5" y="178" text-anchor="middle">20</text>
<text x="1026.5" y="960" text-anchor="middle">20</text>
<text x="1101.5" y="178" text-anchor="middle">22</text>
<text x="1101.5" y="960" text-anchor="middle">22</text>
<text x="1176.5" y="178" text-anchor="middle">24</text>
<text x="1176.5" y="960" text-anchor="middle">24</text>
<text x="1251.5" y="178" text-anchor="middle">26</text>
<text x="1251.5" y="960" text-anchor="middle">26</text>
<text x="1326.5" y="178" text-anchor="middle">28</text>
<text x="1326.5" y="960" text-anchor="middle">28</text>
<text x="1423.5" y="220" text-anchor="middle">0:30</text>
<text x="1423.5" y="251" text-anchor="middle">1:00</text>
<text x="1423.5" y="281" text-anchor="middle">1:30</text>
<text x="1423.5" y="311" text-anchor="middle">2:00</text>
<text x="1423.5" y="342" text-anchor="middle">2:30</text>
<text x="1423.5" y="372" text-anchor="middle">3:00</text>
<text x="1423.5" y="402" text-anchor="middle">3:30</text>
<text x="1423.5" y="433" text-anchor="middle">4:00</text>
<text x="1423.5" y="463" text-anchor="middle">4:30</text>
<text x="1423.5" y="493" text-anchor="middle">5:00</text>
<text x="1423.5" y="523" text-anchor="middle">5:30</text>
<text x="1423.5" y="554" text-anchor="middle">6:00</text>
<text x="1423.5" y="584" text-anchor="middle">6:30</text>
<text x="1423.5" y="614" text-anchor="middle">7:00</text>
<text x="1423.5" y="645" text-anchor="middle">7:30</text>
<text x="1423.5" y="675" text-anchor="middle">8:00</text>
<text x="1423.5" y="705" text-anchor="middle">8:30</text>
<text x="1423.5" y="736" text-anchor="middle">9:00</text>
<text x="1423.5" y="766" text-anchor="middle">9:30</text>
<text x="1423.5" y="796" text-anchor="middle">10:00</text>
<text x="1423.5" y="827" text-anchor="middle">10:30</text>
<text x="1423.5" y="857" text-anchor="middle">11:00</text>
<text x="1423.5" y="887" text-anchor="middle">11:30</text>
<text x="1423.5" y="918" text-anchor="middle">12:00</text>
  </g>
  <!-- logo -->
  <g>
    <path d="M1300.5 114.5 H1332.5 V146 Q1332.5 150.5 1328 150.5 H1319.5 L1316.5 155.5 L1313.5 150.5 H1305 Q1300.5 150.5 1300.5 146 Z" fill="#e01f26" stroke="#8e1b1f" stroke-width="1"/>
    <path d="M1313.3 115 H1319.6 V150.5 L1316.5 154 L1313.3 150.5 Z" fill="#fbc20d"/>
    <rect x="1301" y="129.6" width="31" height="6.3" fill="#fbc20d"/>
    <g fill="#2a8fd8">
      <circle cx="1316.4" cy="122.5" r="2.2"/><circle cx="1316.4" cy="132.8" r="2.2"/><circle cx="1316.4" cy="143" r="2.2"/>
      <circle cx="1307.2" cy="132.8" r="2.2"/><circle cx="1325.6" cy="132.8" r="2.2"/>
    </g>
    <g fill="#e8e8e8">
      <circle cx="1304.3" cy="119" r="1.9"/><circle cx="1310" cy="119" r="1.9"/><circle cx="1304.3" cy="125.5" r="1.9"/><circle cx="1310" cy="125.5" r="1.9"/>
      <circle cx="1323" cy="119" r="1.9"/><circle cx="1328.7" cy="119" r="1.9"/><circle cx="1323" cy="125.5" r="1.9"/><circle cx="1328.7" cy="125.5" r="1.9"/>
      <circle cx="1304.3" cy="139.5" r="1.9"/><circle cx="1310" cy="139.5" r="1.9"/><circle cx="1304.3" cy="146.5" r="1.9"/><circle cx="1310" cy="146.5" r="1.9"/>
      <circle cx="1323" cy="139.5" r="1.9"/><circle cx="1328.7" cy="139.5" r="1.9"/><circle cx="1323" cy="146.5" r="1.9"/><circle cx="1328.7" cy="146.5" r="1.9"/>
    </g>
    <text x="1339" y="126.7" font-size="10.3" textLength="62" lengthAdjust="spacingAndGlyphs" fill="#222">UNIVERSITÉ</text>
    <text x="1338.5" y="146" font-size="23.5" textLength="62.5" lengthAdjust="spacingAndGlyphs" fill="#1a1a1a">LAVAL</text>
  </g>
</svg>
</body></html>
